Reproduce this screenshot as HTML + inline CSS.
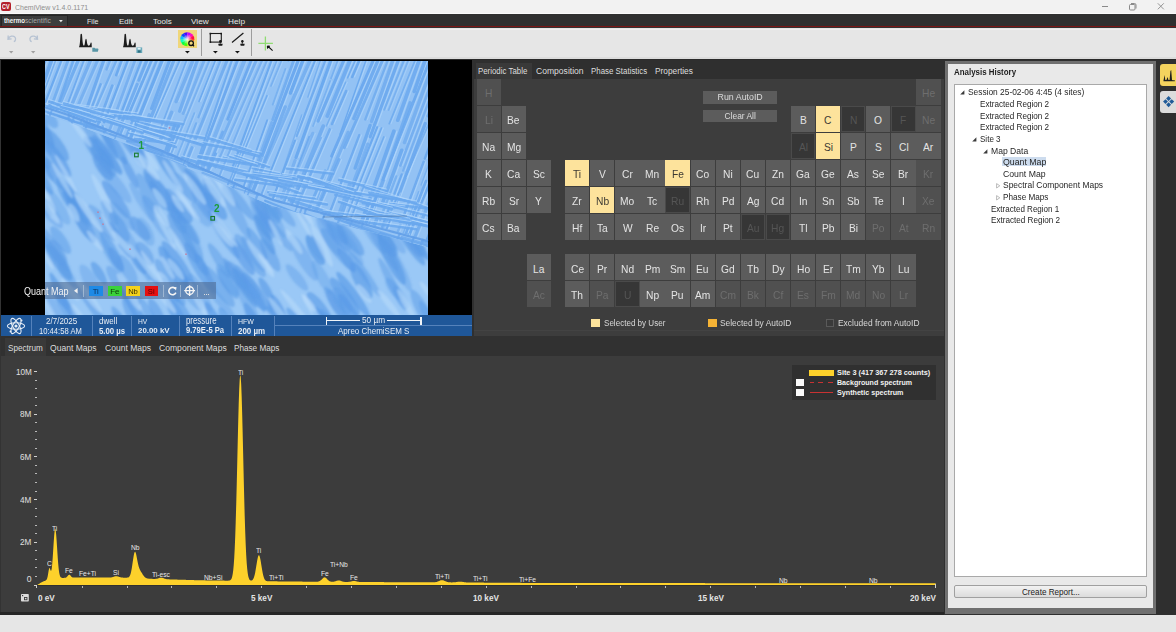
<!DOCTYPE html><html><head><meta charset="utf-8"><title>ChemiView</title><style>
*{margin:0;padding:0;box-sizing:border-box}
html,body{width:1176px;height:632px;overflow:hidden;background:#333;font-family:"Liberation Sans",sans-serif}
.ab{position:absolute}
.t{position:absolute;white-space:nowrap;line-height:1}
svg{position:absolute;overflow:visible}
</style></head><body>
<div class="ab" style="left:0px;top:0px;width:1176px;height:14px;background:#f2f2f2;"></div>
<div class="ab" style="left:0px;top:13.2px;width:1176px;height:0.8px;background:#fafafa;"></div>
<div class="ab" style="left:1.1px;top:1.9px;width:9.8px;height:9.5px;background:#b3202c;border-radius:2px"></div>
<div class="t" style="left:2.3px;top:4px;font-size:6.857px;color:#fff;font-weight:700;transform:scaleX(0.7869);transform-origin:0 0;">CV</div>
<div class="t" style="left:14.7px;top:3.78px;font-size:7.586px;color:#8e8e8e;transform:scaleX(0.9229);transform-origin:0 0;">ChemiView v1.4.0.1171</div>
<div class="ab" style="left:1102px;top:6px;width:6px;height:1px;background:#8a8a8a;"></div>
<svg style="left:1128px;top:2px" width="10" height="9"><rect x="1.5" y="2.5" width="5.5" height="5.5" rx="1" fill="none" stroke="#8a8a8a" stroke-width="1"/><path d="M3 1.5h3.5a1.5 1.5 0 0 1 1.5 1.5v3.5" fill="none" stroke="#8a8a8a" stroke-width="1"/></svg>
<svg style="left:1157px;top:3px" width="8" height="7"><path d="M0.8 0.3L6.8 6.3M6.8 0.3L0.8 6.3" stroke="#8a8a8a" stroke-width="0.9"/></svg>
<div class="ab" style="left:0px;top:14px;width:1176px;height:11.8px;background:#2f3030;"></div>
<div class="ab" style="left:0px;top:25.8px;width:1176px;height:1.7px;background:#7a1616;"></div>
<div class="ab" style="left:1.1px;top:15.1px;width:66.5px;height:10.7px;background:#3c3d3d;border:1px solid #262626;border-bottom:none"></div>
<div class="t" style="left:3.9px;top:17.34px;font-size:7.862px;color:#f4f4f4;font-weight:700;transform:scaleX(0.7879);transform-origin:0 0;">thermo</div>
<div class="t" style="left:25.2px;top:17.34px;font-size:7.862px;color:#a8a8a8;transform:scaleX(0.8557);transform-origin:0 0;">scientific</div>
<svg style="left:59px;top:19.5px" width="4" height="3"><path d="M0 0H3.8L1.9 2.2Z" fill="#eee"/></svg>
<div class="t" style="left:87.3px;top:17.58px;font-size:7.586px;color:#e6e6e6;transform:scaleX(0.9334);transform-origin:0 0;">File</div>
<div class="t" style="left:118.7px;top:17.58px;font-size:7.586px;color:#e6e6e6;transform:scaleX(1.0393);transform-origin:0 0;">Edit</div>
<div class="t" style="left:152.7px;top:17.58px;font-size:7.586px;color:#e6e6e6;transform:scaleX(1.0557);transform-origin:0 0;">Tools</div>
<div class="t" style="left:191px;top:17.58px;font-size:7.586px;color:#e6e6e6;transform:scaleX(1.0913);transform-origin:0 0;">View</div>
<div class="t" style="left:228px;top:17.58px;font-size:7.586px;color:#e6e6e6;transform:scaleX(1.0905);transform-origin:0 0;">Help</div>
<div class="ab" style="left:0px;top:27.5px;width:1176px;height:31.4px;background:#e6e6e6;"></div>
<div class="ab" style="left:0px;top:28.5px;width:1176px;height:1.5px;background:#eeeeee;"></div>
<div class="ab" style="left:0px;top:57.2px;width:1176px;height:1.7px;background:#dcdcdc;"></div>
<div class="ab" style="left:0px;top:58.9px;width:1176px;height:1.1px;background:#2a2a2a;"></div>
<svg style="left:6px;top:33px" width="12" height="10"><path d="M2.2 2.5 L2 6.2 L5.6 5.8 M2.3 5.8 C3.5 3 7.2 2.2 8.9 4.2 C10.3 6 9.3 8.2 7.8 8.7" fill="none" stroke="#b7c3d3" stroke-width="1.3"/></svg>
<svg style="left:28px;top:33px" width="12" height="10"><path d="M9.3 2.5 L9.5 6.2 L5.9 5.8 M9.2 5.8 C8 3 4.3 2.2 2.6 4.2 C1.2 6 2.2 8.2 3.7 8.7" fill="none" stroke="#b7c3d3" stroke-width="1.3"/></svg>
<svg style="left:8.8px;top:51px" width="5" height="3"><path d="M0 0H4.4L2.2 2.4Z" fill="#a0a0a0"/></svg>
<svg style="left:30.900000000000002px;top:51px" width="5" height="3"><path d="M0 0H4.4L2.2 2.4Z" fill="#a0a0a0"/></svg>
<svg style="left:79.2px;top:33px" width="14" height="15"><path d="M0 13.9 L0.3 13.2 C0.9 12 1.2 6 1.5 1.4 C1.8 0.5 2.8 0.5 3 1.4 C3.4 6 3.7 11.5 4.6 12.6 C5.2 12.9 5.5 12.3 5.8 10.5 C6.1 8 6.3 6.4 6.8 5.9 C7.3 5.6 7.6 6.3 7.8 8 C8.1 11 8.6 12.4 9.6 12.7 C10.6 12.7 11.2 11.5 11.6 9.9 C11.9 9.2 12.5 9.3 12.6 10 L12.8 14.2 L0 14.2Z" fill="#1c1c1c"/></svg>
<svg style="left:123.4px;top:33px" width="14" height="15"><path d="M0 13.9 L0.3 13.2 C0.9 12 1.2 6 1.5 1.4 C1.8 0.5 2.8 0.5 3 1.4 C3.4 6 3.7 11.5 4.6 12.6 C5.2 12.9 5.5 12.3 5.8 10.5 C6.1 8 6.3 6.4 6.8 5.9 C7.3 5.6 7.6 6.3 7.8 8 C8.1 11 8.6 12.4 9.6 12.7 C10.6 12.7 11.2 11.5 11.6 9.9 C11.9 9.2 12.5 9.3 12.6 10 L12.8 14.2 L0 14.2Z" fill="#1c1c1c"/></svg>
<svg style="left:91.5px;top:47px" width="7" height="6"><path d="M0.3 0.8 L2.6 0.8 L3.2 1.6 L5.6 1.6 C6.2 1.6 6.6 2.2 6.4 2.8 L5.8 4.8 L0.3 4.8Z" fill="#5896a6"/></svg>
<svg style="left:136px;top:47px" width="7" height="6.5"><rect x="0.4" y="0.4" width="5.8" height="5.6" fill="#6aaabb"/><rect x="1.6" y="0.8" width="3" height="1.8" fill="#e0f0f4"/><rect x="1.8" y="3.4" width="2.8" height="2.2" fill="#2f6f80"/></svg>
<div class="ab" style="left:178px;top:29.9px;width:18.7px;height:17.7px;background:#efd67a;"></div>
<svg style="left:180px;top:31.5px" width="15" height="15"><defs><clipPath id="cw"><circle cx="7.3" cy="7.3" r="7"/></clipPath><radialGradient id="wg"><stop offset="0" stop-color="#fff" stop-opacity="0.9"/><stop offset="1" stop-color="#fff" stop-opacity="0"/></radialGradient></defs><g clip-path="url(#cw)"><path d="M7.3 7.3 L16.30 7.30 L15.01 11.94Z" fill="hsl(15,100%,52%)"/><path d="M7.3 7.3 L15.09 11.80 L11.66 15.17Z" fill="hsl(45,100%,52%)"/><path d="M7.3 7.3 L11.80 15.09 L7.14 16.30Z" fill="hsl(75,100%,52%)"/><path d="M7.3 7.3 L7.30 16.30 L2.66 15.01Z" fill="hsl(105,100%,52%)"/><path d="M7.3 7.3 L2.80 15.09 L-0.57 11.66Z" fill="hsl(135,100%,52%)"/><path d="M7.3 7.3 L-0.49 11.80 L-1.70 7.14Z" fill="hsl(165,100%,52%)"/><path d="M7.3 7.3 L-1.70 7.30 L-0.41 2.66Z" fill="hsl(195,100%,52%)"/><path d="M7.3 7.3 L-0.49 2.80 L2.94 -0.57Z" fill="hsl(225,100%,52%)"/><path d="M7.3 7.3 L2.80 -0.49 L7.46 -1.70Z" fill="hsl(255,100%,52%)"/><path d="M7.3 7.3 L7.30 -1.70 L11.94 -0.41Z" fill="hsl(285,100%,52%)"/><path d="M7.3 7.3 L11.80 -0.49 L15.17 2.94Z" fill="hsl(315,100%,52%)"/><path d="M7.3 7.3 L15.09 2.80 L16.30 7.46Z" fill="hsl(345,100%,52%)"/><circle cx="7.3" cy="7.3" r="5" fill="url(#wg)"/></g><circle cx="11.1" cy="11.1" r="3.2" fill="#f0d67a"/><circle cx="11.1" cy="11.2" r="2.3" fill="none" stroke="#111" stroke-width="1.3"/><path d="M12.2 12.4 L14 14.2" stroke="#111" stroke-width="1.3"/></svg>
<svg style="left:185.29999999999998px;top:51.4px" width="5" height="3"><path d="M0 0H4.8L2.4 2.4Z" fill="#151515"/></svg>
<svg style="left:213.4px;top:51.4px" width="5" height="3"><path d="M0 0H4.8L2.4 2.4Z" fill="#151515"/></svg>
<svg style="left:235.2px;top:51.4px" width="5" height="3"><path d="M0 0H4.8L2.4 2.4Z" fill="#151515"/></svg>
<div class="ab" style="left:200.9px;top:29.4px;width:1.2px;height:26.6px;background:#9d9d9d;"></div>
<div class="ab" style="left:250.9px;top:29.4px;width:1.2px;height:26.6px;background:#9d9d9d;"></div>
<svg style="left:209px;top:32px" width="15" height="15"><rect x="1.3" y="1.5" width="11" height="8.6" fill="none" stroke="#1a1a1a" stroke-width="1.1"/><rect x="0.6" y="0.8" width="1.6" height="1.6" fill="#1a1a1a"/><rect x="11.4" y="0.8" width="1.6" height="1.6" fill="#1a1a1a"/><rect x="0.6" y="9.3" width="1.6" height="1.6" fill="#1a1a1a"/><path d="M11.2 8.6 V11.5 M9.3 12.2 H13.6 M9.6 13.2 H13.3" stroke="#1a1a1a" stroke-width="1.1"/><circle cx="11.4" cy="9.3" r="1.2" fill="#1a1a1a"/></svg>
<svg style="left:231px;top:32px" width="15" height="15"><path d="M1 10.5 L12.4 1" stroke="#1a1a1a" stroke-width="1.2"/><path d="M11.3 8.6 V11.5 M9.3 12.2 H13.6 M9.6 13.2 H13.3" stroke="#1a1a1a" stroke-width="1.1"/><circle cx="11.4" cy="9.3" r="1.2" fill="#1a1a1a"/></svg>
<svg style="left:257px;top:35px" width="17" height="17"><path d="M1.4 8.4 H15.9 M8.4 1.4 V15.5" stroke="#8fdc72" stroke-width="1.3"/><path d="M10.6 11 L15.6 15.6 M10.4 11 L13 11.2 M10.4 11 L10.6 13.6" stroke="#111" stroke-width="1.1"/></svg>
<div class="ab" style="left:0px;top:60px;width:1176px;height:554.5px;background:#333333;"></div>
<div class="ab" style="left:1.3px;top:60px;width:470.7px;height:255.5px;background:#000;"></div>
<svg style="left:45px;top:60.8px" width="383" height="255" viewBox="0 0 383 255"><defs><filter id="bl1" x="-20%" y="-20%" width="140%" height="140%"><feGaussianBlur stdDeviation="1.2"/></filter><filter id="bl2" x="-20%" y="-20%" width="140%" height="140%"><feGaussianBlur stdDeviation="0.7"/></filter><filter id="bl3" x="-30%" y="-30%" width="160%" height="160%"><feGaussianBlur stdDeviation="1.1"/></filter><clipPath id="zA"><path d="M0 0 H383 V179.2 L383.0 179.2 L378.0 177.9 L372.0 176.3 L366.0 174.7 L360.0 173.1 L354.0 171.5 L348.0 169.9 L342.0 168.3 L336.0 166.7 L330.0 165.1 L324.0 163.5 L318.0 162.0 L312.0 160.4 L306.0 158.8 L300.0 157.2 L294.0 155.6 L288.0 154.0 L282.0 152.4 L276.0 150.8 L270.0 149.2 L264.0 147.6 L258.0 146.0 L252.0 144.4 L246.0 142.8 L240.0 141.2 L234.0 139.6 L228.0 138.0 L222.0 135.8 L216.0 133.1 L210.0 130.4 L204.0 127.7 L198.0 125.0 L192.0 122.3 L186.0 119.6 L180.0 116.9 L174.0 114.2 L168.0 111.5 L162.0 108.8 L156.0 106.1 L150.0 103.4 L144.0 100.7 L138.0 98.0 L132.0 95.3 L126.0 92.6 L120.0 90.1 L114.0 87.8 L108.0 85.5 L102.0 83.2 L96.0 80.9 L90.0 78.6 L84.0 76.3 L78.0 74.0 L72.0 71.7 L66.0 69.4 L60.0 67.1 L54.0 64.8 L48.0 62.5 L42.0 60.2 L36.0 57.9 L30.0 55.6 L24.0 53.3 L18.0 51.2 L12.0 49.2 L6.0 47.2 L0.0 45.2 Z"/></clipPath><clipPath id="zB"><path d="M0 45.2 L0.0 45.2 L6.0 47.2 L12.0 49.2 L18.0 51.2 L24.0 53.3 L30.0 55.6 L36.0 57.9 L42.0 60.2 L48.0 62.5 L54.0 64.8 L60.0 67.1 L66.0 69.4 L72.0 71.7 L78.0 74.0 L84.0 76.3 L90.0 78.6 L96.0 80.9 L102.0 83.2 L108.0 85.5 L114.0 87.8 L120.0 90.1 L126.0 92.6 L132.0 95.3 L138.0 98.0 L144.0 100.7 L150.0 103.4 L156.0 106.1 L162.0 108.8 L168.0 111.5 L174.0 114.2 L180.0 116.9 L186.0 119.6 L192.0 122.3 L198.0 125.0 L204.0 127.7 L210.0 130.4 L216.0 133.1 L222.0 135.8 L228.0 138.0 L234.0 139.6 L240.0 141.2 L246.0 142.8 L252.0 144.4 L258.0 146.0 L264.0 147.6 L270.0 149.2 L276.0 150.8 L282.0 152.4 L288.0 154.0 L294.0 155.6 L300.0 157.2 L306.0 158.8 L312.0 160.4 L318.0 162.0 L324.0 163.5 L330.0 165.1 L336.0 166.7 L342.0 168.3 L348.0 169.9 L354.0 171.5 L360.0 173.1 L366.0 174.7 L372.0 176.3 L378.0 177.9 L383.0 179.2 V186.2 L383.0 186.2 L378.0 184.9 L372.0 183.3 L366.0 181.7 L360.0 180.1 L354.0 178.5 L348.0 176.9 L342.0 175.3 L336.0 173.7 L330.0 172.1 L324.0 170.5 L318.0 169.0 L312.0 167.4 L306.0 165.8 L300.0 164.2 L294.0 162.6 L288.0 161.0 L282.0 159.4 L276.0 157.8 L270.0 156.2 L264.0 154.6 L258.0 153.0 L252.0 151.4 L246.0 149.8 L240.0 148.2 L234.0 146.6 L228.0 145.0 L222.0 142.8 L216.0 140.1 L210.0 137.4 L204.0 134.7 L198.0 132.0 L192.0 129.3 L186.0 126.6 L180.0 123.9 L174.0 121.2 L168.0 118.5 L162.0 115.8 L156.0 113.1 L150.0 110.4 L144.0 107.7 L138.0 105.0 L132.0 102.3 L126.0 99.6 L120.0 97.1 L114.0 94.8 L108.0 92.6 L102.0 90.4 L96.0 88.1 L90.0 85.9 L84.0 83.7 L78.0 81.4 L72.0 79.2 L66.0 77.0 L60.0 74.7 L54.0 72.5 L48.0 70.3 L42.0 68.0 L36.0 65.8 L30.0 63.6 L24.0 61.3 L18.0 59.2 L12.0 57.2 L6.0 55.2 L0.0 53.2 Z"/></clipPath><clipPath id="zC"><path d="M0 53.2 L0.0 53.2 L6.0 55.2 L12.0 57.2 L18.0 59.2 L24.0 61.3 L30.0 63.6 L36.0 65.8 L42.0 68.0 L48.0 70.3 L54.0 72.5 L60.0 74.7 L66.0 77.0 L72.0 79.2 L78.0 81.4 L84.0 83.7 L90.0 85.9 L96.0 88.1 L102.0 90.4 L108.0 92.6 L114.0 94.8 L120.0 97.1 L126.0 99.6 L132.0 102.3 L138.0 105.0 L144.0 107.7 L150.0 110.4 L156.0 113.1 L162.0 115.8 L168.0 118.5 L174.0 121.2 L180.0 123.9 L186.0 126.6 L192.0 129.3 L198.0 132.0 L204.0 134.7 L210.0 137.4 L216.0 140.1 L222.0 142.8 L228.0 145.0 L234.0 146.6 L240.0 148.2 L246.0 149.8 L252.0 151.4 L258.0 153.0 L264.0 154.6 L270.0 156.2 L276.0 157.8 L282.0 159.4 L288.0 161.0 L294.0 162.6 L300.0 164.2 L306.0 165.8 L312.0 167.4 L318.0 169.0 L324.0 170.5 L330.0 172.1 L336.0 173.7 L342.0 175.3 L348.0 176.9 L354.0 178.5 L360.0 180.1 L366.0 181.7 L372.0 183.3 L378.0 184.9 L383.0 186.2 V255 H0 Z"/></clipPath></defs><rect width="383" height="255" fill="#93c2f4"/><g clip-path="url(#zC)"><rect width="383" height="255" fill="#9ac8f6"/><g filter="url(#bl3)"><ellipse cx="178.6" cy="173.5" rx="28.6" ry="5.2" transform="rotate(57 178.6 173.5)" fill="#5a9be7" opacity="0.56"/><ellipse cx="58.1" cy="162.1" rx="23.3" ry="6.2" transform="rotate(51 58.1 162.1)" fill="#5a9be7" opacity="0.46"/><ellipse cx="15.8" cy="233.5" rx="24.5" ry="3.9" transform="rotate(64 15.8 233.5)" fill="#5a9be7" opacity="0.69"/><ellipse cx="269.3" cy="186.9" rx="14.8" ry="3.8" transform="rotate(57 269.3 186.9)" fill="#5a9be7" opacity="0.37"/><ellipse cx="60.6" cy="97.3" rx="12.5" ry="5.2" transform="rotate(56 60.6 97.3)" fill="#5a9be7" opacity="0.64"/><ellipse cx="208.6" cy="192.9" rx="21.0" ry="5.8" transform="rotate(56 208.6 192.9)" fill="#5a9be7" opacity="0.45"/><ellipse cx="423.9" cy="278.2" rx="27.1" ry="5.9" transform="rotate(54 423.9 278.2)" fill="#5a9be7" opacity="0.43"/><ellipse cx="406.1" cy="242.6" rx="12.0" ry="4.4" transform="rotate(63 406.1 242.6)" fill="#5a9be7" opacity="0.51"/><ellipse cx="7.9" cy="190.3" rx="26.0" ry="4.6" transform="rotate(51 7.9 190.3)" fill="#5a9be7" opacity="0.47"/><ellipse cx="408.8" cy="221.1" rx="14.1" ry="4.5" transform="rotate(51 408.8 221.1)" fill="#5a9be7" opacity="0.37"/><ellipse cx="226.7" cy="146.6" rx="15.4" ry="6.0" transform="rotate(52 226.7 146.6)" fill="#5a9be7" opacity="0.58"/><ellipse cx="27.4" cy="140.2" rx="15.8" ry="4.6" transform="rotate(64 27.4 140.2)" fill="#5a9be7" opacity="0.63"/><ellipse cx="111.9" cy="251.6" rx="15.8" ry="5.0" transform="rotate(62 111.9 251.6)" fill="#5a9be7" opacity="0.57"/><ellipse cx="20.1" cy="276.6" rx="15.8" ry="4.6" transform="rotate(61 20.1 276.6)" fill="#5a9be7" opacity="0.47"/><ellipse cx="15.6" cy="179.1" rx="16.4" ry="5.6" transform="rotate(55 15.6 179.1)" fill="#5a9be7" opacity="0.51"/><ellipse cx="233.6" cy="247.2" rx="15.3" ry="4.3" transform="rotate(63 233.6 247.2)" fill="#5a9be7" opacity="0.64"/><ellipse cx="87.3" cy="84.8" rx="25.3" ry="6.6" transform="rotate(53 87.3 84.8)" fill="#5a9be7" opacity="0.68"/><ellipse cx="372.0" cy="184.0" rx="19.6" ry="4.1" transform="rotate(51 372.0 184.0)" fill="#5a9be7" opacity="0.69"/><ellipse cx="82.3" cy="208.3" rx="16.6" ry="6.3" transform="rotate(58 82.3 208.3)" fill="#5a9be7" opacity="0.45"/><ellipse cx="53.9" cy="212.1" rx="13.2" ry="4.5" transform="rotate(58 53.9 212.1)" fill="#5a9be7" opacity="0.65"/><ellipse cx="-17.5" cy="103.8" rx="20.0" ry="4.0" transform="rotate(52 -17.5 103.8)" fill="#5a9be7" opacity="0.48"/><ellipse cx="138.0" cy="253.0" rx="29.6" ry="5.8" transform="rotate(60 138.0 253.0)" fill="#5a9be7" opacity="0.55"/><ellipse cx="-16.9" cy="257.7" rx="24.6" ry="6.7" transform="rotate(50 -16.9 257.7)" fill="#5a9be7" opacity="0.57"/><ellipse cx="192.0" cy="214.5" rx="17.7" ry="6.8" transform="rotate(51 192.0 214.5)" fill="#5a9be7" opacity="0.54"/><ellipse cx="306.7" cy="255.2" rx="25.3" ry="5.9" transform="rotate(61 306.7 255.2)" fill="#5a9be7" opacity="0.67"/><ellipse cx="133.3" cy="203.6" rx="28.2" ry="6.4" transform="rotate(56 133.3 203.6)" fill="#5a9be7" opacity="0.63"/><ellipse cx="363.6" cy="176.7" rx="23.2" ry="4.9" transform="rotate(58 363.6 176.7)" fill="#5a9be7" opacity="0.56"/><ellipse cx="11.1" cy="192.7" rx="29.9" ry="6.4" transform="rotate(60 11.1 192.7)" fill="#5a9be7" opacity="0.49"/><ellipse cx="305.8" cy="178.6" rx="19.9" ry="6.3" transform="rotate(51 305.8 178.6)" fill="#5a9be7" opacity="0.61"/><ellipse cx="-11.6" cy="183.5" rx="20.7" ry="4.5" transform="rotate(60 -11.6 183.5)" fill="#5a9be7" opacity="0.52"/><ellipse cx="251.5" cy="260.1" rx="16.6" ry="3.8" transform="rotate(54 251.5 260.1)" fill="#5a9be7" opacity="0.59"/><ellipse cx="66.2" cy="79.9" rx="28.3" ry="5.8" transform="rotate(56 66.2 79.9)" fill="#5a9be7" opacity="0.66"/><ellipse cx="122.1" cy="199.0" rx="15.6" ry="5.1" transform="rotate(61 122.1 199.0)" fill="#5a9be7" opacity="0.67"/><ellipse cx="36.3" cy="158.4" rx="27.1" ry="6.3" transform="rotate(60 36.3 158.4)" fill="#5a9be7" opacity="0.68"/><ellipse cx="71.3" cy="138.6" rx="23.3" ry="5.3" transform="rotate(54 71.3 138.6)" fill="#5a9be7" opacity="0.64"/><ellipse cx="293.9" cy="176.1" rx="17.6" ry="6.2" transform="rotate(50 293.9 176.1)" fill="#5a9be7" opacity="0.40"/><ellipse cx="258.5" cy="196.4" rx="26.5" ry="6.7" transform="rotate(60 258.5 196.4)" fill="#5a9be7" opacity="0.42"/><ellipse cx="-20.2" cy="152.5" rx="24.9" ry="4.3" transform="rotate(54 -20.2 152.5)" fill="#5a9be7" opacity="0.47"/><ellipse cx="288.8" cy="164.1" rx="23.1" ry="6.1" transform="rotate(56 288.8 164.1)" fill="#5a9be7" opacity="0.63"/><ellipse cx="394.7" cy="212.6" rx="14.3" ry="5.2" transform="rotate(59 394.7 212.6)" fill="#5a9be7" opacity="0.67"/><ellipse cx="144.6" cy="175.7" rx="27.8" ry="6.2" transform="rotate(63 144.6 175.7)" fill="#5a9be7" opacity="0.51"/><ellipse cx="299.9" cy="235.6" rx="23.5" ry="6.0" transform="rotate(53 299.9 235.6)" fill="#5a9be7" opacity="0.66"/><ellipse cx="416.2" cy="273.8" rx="21.7" ry="6.2" transform="rotate(54 416.2 273.8)" fill="#5a9be7" opacity="0.67"/><ellipse cx="12.2" cy="145.0" rx="21.9" ry="6.1" transform="rotate(57 12.2 145.0)" fill="#5a9be7" opacity="0.36"/><ellipse cx="125.8" cy="228.3" rx="14.5" ry="4.2" transform="rotate(57 125.8 228.3)" fill="#5a9be7" opacity="0.60"/><ellipse cx="353.0" cy="204.6" rx="29.0" ry="5.3" transform="rotate(63 353.0 204.6)" fill="#5a9be7" opacity="0.38"/><ellipse cx="74.6" cy="165.6" rx="17.2" ry="6.0" transform="rotate(59 74.6 165.6)" fill="#5a9be7" opacity="0.53"/><ellipse cx="115.3" cy="130.7" rx="27.2" ry="6.5" transform="rotate(53 115.3 130.7)" fill="#5a9be7" opacity="0.65"/><ellipse cx="216.2" cy="160.0" rx="22.9" ry="3.9" transform="rotate(64 216.2 160.0)" fill="#5a9be7" opacity="0.53"/><ellipse cx="155.3" cy="231.5" rx="22.1" ry="5.3" transform="rotate(60 155.3 231.5)" fill="#5a9be7" opacity="0.37"/><ellipse cx="217.4" cy="138.5" rx="29.2" ry="6.6" transform="rotate(54 217.4 138.5)" fill="#5a9be7" opacity="0.52"/><ellipse cx="32.1" cy="143.3" rx="26.7" ry="6.5" transform="rotate(57 32.1 143.3)" fill="#5a9be7" opacity="0.46"/><ellipse cx="61.2" cy="187.5" rx="28.7" ry="4.2" transform="rotate(61 61.2 187.5)" fill="#5a9be7" opacity="0.36"/><ellipse cx="62.3" cy="93.7" rx="24.4" ry="4.8" transform="rotate(55 62.3 93.7)" fill="#5a9be7" opacity="0.57"/><ellipse cx="22.2" cy="214.6" rx="14.2" ry="5.3" transform="rotate(54 22.2 214.6)" fill="#5a9be7" opacity="0.42"/><ellipse cx="213.7" cy="144.0" rx="18.8" ry="5.0" transform="rotate(57 213.7 144.0)" fill="#5a9be7" opacity="0.41"/><ellipse cx="66.9" cy="190.7" rx="23.5" ry="5.4" transform="rotate(62 66.9 190.7)" fill="#5a9be7" opacity="0.56"/><ellipse cx="308.3" cy="233.7" rx="28.2" ry="4.7" transform="rotate(54 308.3 233.7)" fill="#5a9be7" opacity="0.67"/><ellipse cx="73.2" cy="278.8" rx="28.0" ry="4.2" transform="rotate(53 73.2 278.8)" fill="#5a9be7" opacity="0.60"/><ellipse cx="156.3" cy="203.7" rx="12.3" ry="4.4" transform="rotate(60 156.3 203.7)" fill="#5a9be7" opacity="0.67"/><ellipse cx="202.6" cy="221.2" rx="21.1" ry="5.9" transform="rotate(53 202.6 221.2)" fill="#5a9be7" opacity="0.37"/><ellipse cx="223.3" cy="162.8" rx="22.2" ry="4.2" transform="rotate(53 223.3 162.8)" fill="#5a9be7" opacity="0.42"/><ellipse cx="353.1" cy="276.9" rx="28.7" ry="4.1" transform="rotate(51 353.1 276.9)" fill="#5a9be7" opacity="0.68"/><ellipse cx="182.9" cy="222.7" rx="17.9" ry="5.2" transform="rotate(57 182.9 222.7)" fill="#5a9be7" opacity="0.50"/><ellipse cx="290.5" cy="241.8" rx="15.3" ry="5.2" transform="rotate(60 290.5 241.8)" fill="#5a9be7" opacity="0.49"/><ellipse cx="62.8" cy="78.8" rx="21.2" ry="3.8" transform="rotate(63 62.8 78.8)" fill="#5a9be7" opacity="0.63"/><ellipse cx="292.1" cy="245.8" rx="23.3" ry="5.0" transform="rotate(58 292.1 245.8)" fill="#5a9be7" opacity="0.53"/><ellipse cx="417.2" cy="232.4" rx="16.6" ry="6.5" transform="rotate(60 417.2 232.4)" fill="#5a9be7" opacity="0.62"/><ellipse cx="378.4" cy="250.4" rx="24.5" ry="6.1" transform="rotate(61 378.4 250.4)" fill="#5a9be7" opacity="0.49"/><ellipse cx="128.8" cy="151.7" rx="12.2" ry="4.9" transform="rotate(59 128.8 151.7)" fill="#5a9be7" opacity="0.57"/><ellipse cx="79.4" cy="265.9" rx="24.0" ry="4.8" transform="rotate(59 79.4 265.9)" fill="#5a9be7" opacity="0.55"/><ellipse cx="424.9" cy="193.3" rx="24.6" ry="6.1" transform="rotate(64 424.9 193.3)" fill="#5a9be7" opacity="0.36"/><ellipse cx="251.9" cy="216.5" rx="16.6" ry="5.0" transform="rotate(51 251.9 216.5)" fill="#5a9be7" opacity="0.42"/><ellipse cx="87.9" cy="256.6" rx="21.9" ry="5.3" transform="rotate(64 87.9 256.6)" fill="#5a9be7" opacity="0.55"/><ellipse cx="422.8" cy="192.3" rx="26.6" ry="4.0" transform="rotate(58 422.8 192.3)" fill="#5a9be7" opacity="0.62"/><ellipse cx="-4.7" cy="262.4" rx="14.9" ry="5.2" transform="rotate(52 -4.7 262.4)" fill="#5a9be7" opacity="0.52"/><ellipse cx="212.0" cy="182.7" rx="18.6" ry="4.7" transform="rotate(59 212.0 182.7)" fill="#5a9be7" opacity="0.55"/><ellipse cx="102.6" cy="211.2" rx="17.3" ry="3.8" transform="rotate(53 102.6 211.2)" fill="#5a9be7" opacity="0.36"/><ellipse cx="45.5" cy="220.3" rx="19.0" ry="6.5" transform="rotate(60 45.5 220.3)" fill="#5a9be7" opacity="0.37"/><ellipse cx="419.9" cy="265.9" rx="13.3" ry="6.5" transform="rotate(56 419.9 265.9)" fill="#5a9be7" opacity="0.52"/><ellipse cx="210.5" cy="264.1" rx="25.0" ry="5.2" transform="rotate(64 210.5 264.1)" fill="#5a9be7" opacity="0.64"/><ellipse cx="255.9" cy="148.6" rx="15.7" ry="4.0" transform="rotate(57 255.9 148.6)" fill="#5a9be7" opacity="0.39"/><ellipse cx="174.3" cy="199.5" rx="20.2" ry="4.6" transform="rotate(58 174.3 199.5)" fill="#5a9be7" opacity="0.50"/><ellipse cx="325.1" cy="166.6" rx="30.0" ry="6.7" transform="rotate(60 325.1 166.6)" fill="#5a9be7" opacity="0.43"/><ellipse cx="26.2" cy="253.4" rx="26.1" ry="5.7" transform="rotate(55 26.2 253.4)" fill="#5a9be7" opacity="0.45"/><ellipse cx="283.3" cy="174.8" rx="22.7" ry="5.7" transform="rotate(61 283.3 174.8)" fill="#5a9be7" opacity="0.42"/><ellipse cx="87.0" cy="274.3" rx="28.5" ry="6.4" transform="rotate(51 87.0 274.3)" fill="#5a9be7" opacity="0.37"/><ellipse cx="96.9" cy="141.2" rx="23.2" ry="4.1" transform="rotate(58 96.9 141.2)" fill="#5a9be7" opacity="0.38"/><ellipse cx="13.9" cy="201.5" rx="21.9" ry="5.7" transform="rotate(55 13.9 201.5)" fill="#5a9be7" opacity="0.52"/><ellipse cx="69.8" cy="121.7" rx="25.4" ry="6.3" transform="rotate(51 69.8 121.7)" fill="#5a9be7" opacity="0.39"/><ellipse cx="339.1" cy="188.9" rx="25.8" ry="4.4" transform="rotate(56 339.1 188.9)" fill="#5a9be7" opacity="0.44"/><ellipse cx="269.1" cy="276.6" rx="17.9" ry="5.4" transform="rotate(60 269.1 276.6)" fill="#5a9be7" opacity="0.67"/><ellipse cx="167.4" cy="127.8" rx="13.7" ry="6.4" transform="rotate(51 167.4 127.8)" fill="#5a9be7" opacity="0.38"/><ellipse cx="228.9" cy="155.6" rx="24.3" ry="4.7" transform="rotate(61 228.9 155.6)" fill="#5a9be7" opacity="0.38"/><ellipse cx="71.0" cy="198.1" rx="13.5" ry="4.7" transform="rotate(60 71.0 198.1)" fill="#5a9be7" opacity="0.59"/><ellipse cx="136.0" cy="213.4" rx="18.6" ry="4.2" transform="rotate(60 136.0 213.4)" fill="#5a9be7" opacity="0.55"/><ellipse cx="388.4" cy="264.8" rx="28.4" ry="5.1" transform="rotate(61 388.4 264.8)" fill="#5a9be7" opacity="0.46"/><ellipse cx="117.9" cy="135.1" rx="28.8" ry="6.5" transform="rotate(53 117.9 135.1)" fill="#5a9be7" opacity="0.48"/><ellipse cx="139.5" cy="126.4" rx="19.1" ry="5.0" transform="rotate(53 139.5 126.4)" fill="#5a9be7" opacity="0.55"/><ellipse cx="333.7" cy="168.9" rx="27.1" ry="5.5" transform="rotate(52 333.7 168.9)" fill="#5a9be7" opacity="0.62"/><ellipse cx="-15.0" cy="163.0" rx="21.8" ry="5.5" transform="rotate(64 -15.0 163.0)" fill="#5a9be7" opacity="0.58"/><ellipse cx="221.1" cy="228.3" rx="13.5" ry="4.0" transform="rotate(60 221.1 228.3)" fill="#5a9be7" opacity="0.66"/><ellipse cx="13.1" cy="191.4" rx="14.6" ry="6.0" transform="rotate(59 13.1 191.4)" fill="#5a9be7" opacity="0.44"/><ellipse cx="74.2" cy="222.9" rx="21.4" ry="6.1" transform="rotate(56 74.2 222.9)" fill="#5a9be7" opacity="0.47"/><ellipse cx="410.7" cy="200.6" rx="20.9" ry="5.4" transform="rotate(60 410.7 200.6)" fill="#5a9be7" opacity="0.60"/><ellipse cx="346.8" cy="199.2" rx="27.4" ry="6.2" transform="rotate(62 346.8 199.2)" fill="#5a9be7" opacity="0.66"/><ellipse cx="406.0" cy="192.9" rx="21.4" ry="5.9" transform="rotate(61 406.0 192.9)" fill="#5a9be7" opacity="0.50"/><ellipse cx="308.6" cy="277.0" rx="18.8" ry="4.3" transform="rotate(53 308.6 277.0)" fill="#5a9be7" opacity="0.50"/><ellipse cx="106.4" cy="271.9" rx="13.1" ry="4.7" transform="rotate(52 106.4 271.9)" fill="#5a9be7" opacity="0.58"/><ellipse cx="3.1" cy="149.3" rx="22.5" ry="6.5" transform="rotate(51 3.1 149.3)" fill="#5a9be7" opacity="0.39"/><ellipse cx="58.0" cy="91.4" rx="16.2" ry="6.0" transform="rotate(58 58.0 91.4)" fill="#5a9be7" opacity="0.43"/><ellipse cx="58.2" cy="106.7" rx="15.1" ry="6.1" transform="rotate(54 58.2 106.7)" fill="#5a9be7" opacity="0.54"/><ellipse cx="92.2" cy="252.2" rx="28.5" ry="4.8" transform="rotate(58 92.2 252.2)" fill="#5a9be7" opacity="0.68"/><ellipse cx="-2.6" cy="266.6" rx="26.4" ry="5.0" transform="rotate(57 -2.6 266.6)" fill="#5a9be7" opacity="0.53"/><ellipse cx="98.5" cy="276.9" rx="23.8" ry="4.5" transform="rotate(50 98.5 276.9)" fill="#5a9be7" opacity="0.52"/><ellipse cx="142.2" cy="230.4" rx="24.8" ry="5.6" transform="rotate(52 142.2 230.4)" fill="#5a9be7" opacity="0.40"/><ellipse cx="119.8" cy="101.5" rx="27.6" ry="5.3" transform="rotate(59 119.8 101.5)" fill="#5a9be7" opacity="0.70"/><ellipse cx="94.9" cy="167.5" rx="14.7" ry="6.1" transform="rotate(50 94.9 167.5)" fill="#5a9be7" opacity="0.64"/><ellipse cx="355.8" cy="236.5" rx="13.5" ry="4.6" transform="rotate(60 355.8 236.5)" fill="#5a9be7" opacity="0.38"/><ellipse cx="191.0" cy="151.7" rx="29.2" ry="5.6" transform="rotate(62 191.0 151.7)" fill="#5a9be7" opacity="0.46"/><ellipse cx="219.5" cy="165.4" rx="14.8" ry="6.3" transform="rotate(54 219.5 165.4)" fill="#5a9be7" opacity="0.46"/><ellipse cx="9.2" cy="112.6" rx="20.4" ry="5.9" transform="rotate(55 9.2 112.6)" fill="#5a9be7" opacity="0.59"/><ellipse cx="22.6" cy="133.8" rx="20.3" ry="6.7" transform="rotate(62 22.6 133.8)" fill="#5a9be7" opacity="0.58"/><ellipse cx="-19.4" cy="129.7" rx="24.8" ry="4.5" transform="rotate(58 -19.4 129.7)" fill="#5a9be7" opacity="0.51"/><ellipse cx="-20.3" cy="277.2" rx="26.4" ry="4.4" transform="rotate(59 -20.3 277.2)" fill="#5a9be7" opacity="0.45"/><ellipse cx="144.2" cy="168.7" rx="17.4" ry="4.8" transform="rotate(55 144.2 168.7)" fill="#5a9be7" opacity="0.58"/><ellipse cx="90.4" cy="87.2" rx="25.2" ry="4.8" transform="rotate(63 90.4 87.2)" fill="#5a9be7" opacity="0.55"/><ellipse cx="38.4" cy="61.9" rx="24.2" ry="5.9" transform="rotate(53 38.4 61.9)" fill="#5a9be7" opacity="0.49"/><ellipse cx="351.6" cy="181.5" rx="13.6" ry="4.5" transform="rotate(52 351.6 181.5)" fill="#5a9be7" opacity="0.39"/><ellipse cx="205.2" cy="194.5" rx="25.8" ry="6.3" transform="rotate(55 205.2 194.5)" fill="#5a9be7" opacity="0.47"/><ellipse cx="155.3" cy="207.2" rx="29.7" ry="6.2" transform="rotate(59 155.3 207.2)" fill="#5a9be7" opacity="0.56"/><ellipse cx="-16.7" cy="118.6" rx="18.2" ry="5.8" transform="rotate(51 -16.7 118.6)" fill="#5a9be7" opacity="0.48"/><ellipse cx="204.2" cy="228.5" rx="26.9" ry="5.6" transform="rotate(52 204.2 228.5)" fill="#5a9be7" opacity="0.62"/><ellipse cx="133.7" cy="159.3" rx="14.6" ry="5.9" transform="rotate(64 133.7 159.3)" fill="#5a9be7" opacity="0.53"/><ellipse cx="296.9" cy="239.7" rx="15.5" ry="6.6" transform="rotate(59 296.9 239.7)" fill="#5a9be7" opacity="0.42"/><ellipse cx="12.5" cy="97.9" rx="22.4" ry="5.9" transform="rotate(55 12.5 97.9)" fill="#5a9be7" opacity="0.68"/><ellipse cx="137.5" cy="150.3" rx="14.2" ry="6.7" transform="rotate(52 137.5 150.3)" fill="#5a9be7" opacity="0.67"/><ellipse cx="219.5" cy="173.8" rx="22.1" ry="4.6" transform="rotate(63 219.5 173.8)" fill="#5a9be7" opacity="0.70"/><ellipse cx="342.9" cy="183.6" rx="14.2" ry="6.3" transform="rotate(54 342.9 183.6)" fill="#5a9be7" opacity="0.66"/><ellipse cx="83.4" cy="176.9" rx="27.0" ry="4.4" transform="rotate(58 83.4 176.9)" fill="#5a9be7" opacity="0.38"/><ellipse cx="-10.6" cy="82.4" rx="29.8" ry="6.6" transform="rotate(59 -10.6 82.4)" fill="#5a9be7" opacity="0.46"/><ellipse cx="277.1" cy="216.2" rx="18.9" ry="5.6" transform="rotate(61 277.1 216.2)" fill="#5a9be7" opacity="0.36"/><ellipse cx="64.8" cy="151.5" rx="14.6" ry="5.0" transform="rotate(58 64.8 151.5)" fill="#5a9be7" opacity="0.41"/><ellipse cx="406.7" cy="183.2" rx="20.5" ry="5.0" transform="rotate(59 406.7 183.2)" fill="#5a9be7" opacity="0.59"/><ellipse cx="316.1" cy="219.6" rx="20.7" ry="6.8" transform="rotate(62 316.1 219.6)" fill="#5a9be7" opacity="0.65"/><ellipse cx="159.1" cy="143.3" rx="22.2" ry="6.5" transform="rotate(57 159.1 143.3)" fill="#5a9be7" opacity="0.53"/><ellipse cx="169.5" cy="256.2" rx="17.8" ry="4.0" transform="rotate(60 169.5 256.2)" fill="#5a9be7" opacity="0.67"/><ellipse cx="304.4" cy="182.6" rx="25.5" ry="4.7" transform="rotate(58 304.4 182.6)" fill="#5a9be7" opacity="0.37"/><ellipse cx="31.0" cy="146.5" rx="21.0" ry="5.0" transform="rotate(51 31.0 146.5)" fill="#5a9be7" opacity="0.59"/><ellipse cx="112.8" cy="134.1" rx="16.2" ry="4.0" transform="rotate(63 112.8 134.1)" fill="#5a9be7" opacity="0.69"/><ellipse cx="274.6" cy="247.2" rx="19.6" ry="6.2" transform="rotate(53 274.6 247.2)" fill="#5a9be7" opacity="0.61"/><ellipse cx="230.1" cy="256.0" rx="13.8" ry="6.2" transform="rotate(52 230.1 256.0)" fill="#5a9be7" opacity="0.54"/><ellipse cx="84.8" cy="111.0" rx="17.8" ry="4.0" transform="rotate(63 84.8 111.0)" fill="#5a9be7" opacity="0.64"/><ellipse cx="153.8" cy="124.8" rx="22.5" ry="3.9" transform="rotate(50 153.8 124.8)" fill="#5a9be7" opacity="0.66"/><ellipse cx="113.5" cy="158.8" rx="28.8" ry="6.7" transform="rotate(57 113.5 158.8)" fill="#5a9be7" opacity="0.42"/><ellipse cx="107.9" cy="260.6" rx="28.1" ry="4.4" transform="rotate(62 107.9 260.6)" fill="#5a9be7" opacity="0.47"/><ellipse cx="370.9" cy="278.1" rx="15.6" ry="5.7" transform="rotate(53 370.9 278.1)" fill="#5a9be7" opacity="0.66"/><ellipse cx="-2.5" cy="64.7" rx="25.1" ry="4.7" transform="rotate(63 -2.5 64.7)" fill="#5a9be7" opacity="0.65"/><ellipse cx="288.2" cy="264.3" rx="20.0" ry="4.0" transform="rotate(53 288.2 264.3)" fill="#5a9be7" opacity="0.46"/><ellipse cx="56.5" cy="95.7" rx="24.0" ry="6.2" transform="rotate(55 56.5 95.7)" fill="#5a9be7" opacity="0.58"/><ellipse cx="373.0" cy="180.8" rx="16.1" ry="4.7" transform="rotate(63 373.0 180.8)" fill="#5a9be7" opacity="0.58"/><ellipse cx="99.6" cy="192.8" rx="13.6" ry="6.7" transform="rotate(56 99.6 192.8)" fill="#5a9be7" opacity="0.53"/><ellipse cx="87.9" cy="232.0" rx="13.6" ry="4.7" transform="rotate(61 87.9 232.0)" fill="#5a9be7" opacity="0.44"/><ellipse cx="100.6" cy="170.7" rx="15.4" ry="6.5" transform="rotate(64 100.6 170.7)" fill="#5a9be7" opacity="0.36"/><ellipse cx="182.7" cy="219.3" rx="18.9" ry="6.6" transform="rotate(57 182.7 219.3)" fill="#5a9be7" opacity="0.41"/><ellipse cx="225.2" cy="194.0" rx="18.5" ry="5.8" transform="rotate(61 225.2 194.0)" fill="#5a9be7" opacity="0.53"/><ellipse cx="202.5" cy="242.1" rx="24.3" ry="5.4" transform="rotate(63 202.5 242.1)" fill="#5a9be7" opacity="0.41"/><ellipse cx="173.2" cy="224.7" rx="26.2" ry="6.2" transform="rotate(53 173.2 224.7)" fill="#5a9be7" opacity="0.52"/><ellipse cx="74.6" cy="178.4" rx="21.0" ry="3.9" transform="rotate(58 74.6 178.4)" fill="#5a9be7" opacity="0.60"/><ellipse cx="232.7" cy="248.7" rx="15.2" ry="4.3" transform="rotate(50 232.7 248.7)" fill="#5a9be7" opacity="0.52"/><ellipse cx="170.6" cy="145.2" rx="16.7" ry="6.2" transform="rotate(51 170.6 145.2)" fill="#5a9be7" opacity="0.67"/><ellipse cx="231.0" cy="169.6" rx="26.2" ry="4.5" transform="rotate(52 231.0 169.6)" fill="#5a9be7" opacity="0.46"/><ellipse cx="-6.0" cy="114.6" rx="23.2" ry="5.4" transform="rotate(54 -6.0 114.6)" fill="#5a9be7" opacity="0.56"/><ellipse cx="14.8" cy="236.1" rx="15.1" ry="4.6" transform="rotate(52 14.8 236.1)" fill="#5a9be7" opacity="0.59"/><ellipse cx="348.9" cy="228.0" rx="13.1" ry="5.0" transform="rotate(55 348.9 228.0)" fill="#5a9be7" opacity="0.43"/><ellipse cx="195.3" cy="221.9" rx="29.8" ry="4.2" transform="rotate(56 195.3 221.9)" fill="#5a9be7" opacity="0.61"/><ellipse cx="-7.3" cy="96.9" rx="28.0" ry="4.2" transform="rotate(56 -7.3 96.9)" fill="#5a9be7" opacity="0.45"/><ellipse cx="-9.6" cy="278.3" rx="25.7" ry="6.0" transform="rotate(53 -9.6 278.3)" fill="#5a9be7" opacity="0.44"/><ellipse cx="182.7" cy="263.0" rx="18.6" ry="4.8" transform="rotate(64 182.7 263.0)" fill="#5a9be7" opacity="0.56"/><ellipse cx="-7.1" cy="135.9" rx="23.7" ry="4.0" transform="rotate(55 -7.1 135.9)" fill="#5a9be7" opacity="0.59"/><ellipse cx="364.0" cy="181.0" rx="28.0" ry="5.2" transform="rotate(56 364.0 181.0)" fill="#5a9be7" opacity="0.65"/><ellipse cx="146.5" cy="226.7" rx="15.9" ry="4.8" transform="rotate(53 146.5 226.7)" fill="#5a9be7" opacity="0.54"/><ellipse cx="48.7" cy="88.1" rx="15.9" ry="5.2" transform="rotate(54 48.7 88.1)" fill="#5a9be7" opacity="0.51"/><ellipse cx="422.0" cy="202.2" rx="27.5" ry="4.4" transform="rotate(55 422.0 202.2)" fill="#5a9be7" opacity="0.38"/><ellipse cx="56.9" cy="102.2" rx="19.1" ry="6.6" transform="rotate(60 56.9 102.2)" fill="#5a9be7" opacity="0.44"/><ellipse cx="319.6" cy="212.8" rx="28.3" ry="3.9" transform="rotate(55 319.6 212.8)" fill="#5a9be7" opacity="0.48"/><ellipse cx="12.4" cy="251.0" rx="17.9" ry="6.1" transform="rotate(57 12.4 251.0)" fill="#5a9be7" opacity="0.37"/><ellipse cx="-6.6" cy="75.4" rx="22.7" ry="3.9" transform="rotate(54 -6.6 75.4)" fill="#5a9be7" opacity="0.50"/><ellipse cx="301.5" cy="199.1" rx="14.6" ry="4.4" transform="rotate(54 301.5 199.1)" fill="#5a9be7" opacity="0.60"/><ellipse cx="157.4" cy="132.0" rx="27.6" ry="4.5" transform="rotate(54 157.4 132.0)" fill="#5a9be7" opacity="0.47"/><ellipse cx="-14.0" cy="190.5" rx="22.2" ry="6.2" transform="rotate(64 -14.0 190.5)" fill="#5a9be7" opacity="0.45"/><ellipse cx="276.7" cy="259.8" rx="15.9" ry="5.9" transform="rotate(59 276.7 259.8)" fill="#5a9be7" opacity="0.68"/><ellipse cx="167.5" cy="133.4" rx="13.1" ry="5.0" transform="rotate(55 167.5 133.4)" fill="#5a9be7" opacity="0.52"/><ellipse cx="156.1" cy="153.3" rx="15.0" ry="5.8" transform="rotate(53 156.1 153.3)" fill="#5a9be7" opacity="0.38"/><ellipse cx="128.8" cy="140.6" rx="14.7" ry="5.5" transform="rotate(60 128.8 140.6)" fill="#5a9be7" opacity="0.54"/><ellipse cx="151.1" cy="126.6" rx="13.1" ry="5.0" transform="rotate(51 151.1 126.6)" fill="#5a9be7" opacity="0.52"/><ellipse cx="238.6" cy="151.7" rx="17.9" ry="4.6" transform="rotate(50 238.6 151.7)" fill="#5a9be7" opacity="0.47"/><ellipse cx="92.9" cy="199.5" rx="15.3" ry="5.2" transform="rotate(59 92.9 199.5)" fill="#5a9be7" opacity="0.68"/><ellipse cx="138.2" cy="177.5" rx="29.0" ry="6.1" transform="rotate(59 138.2 177.5)" fill="#5a9be7" opacity="0.57"/><ellipse cx="159.9" cy="138.9" rx="17.0" ry="6.3" transform="rotate(62 159.9 138.9)" fill="#5a9be7" opacity="0.48"/><ellipse cx="36.1" cy="160.9" rx="17.6" ry="4.9" transform="rotate(64 36.1 160.9)" fill="#5a9be7" opacity="0.40"/><ellipse cx="61.6" cy="94.0" rx="24.2" ry="4.5" transform="rotate(50 61.6 94.0)" fill="#5a9be7" opacity="0.54"/><ellipse cx="197.1" cy="195.2" rx="21.9" ry="5.7" transform="rotate(58 197.1 195.2)" fill="#5a9be7" opacity="0.64"/><ellipse cx="131.0" cy="251.9" rx="17.6" ry="5.9" transform="rotate(60 131.0 251.9)" fill="#5a9be7" opacity="0.59"/><ellipse cx="408.8" cy="237.1" rx="14.9" ry="5.7" transform="rotate(57 408.8 237.1)" fill="#5a9be7" opacity="0.55"/><ellipse cx="141.3" cy="107.8" rx="25.5" ry="5.4" transform="rotate(53 141.3 107.8)" fill="#5a9be7" opacity="0.44"/><ellipse cx="3.5" cy="55.7" rx="13.8" ry="5.9" transform="rotate(52 3.5 55.7)" fill="#5a9be7" opacity="0.51"/><ellipse cx="48.2" cy="247.1" rx="27.7" ry="4.0" transform="rotate(54 48.2 247.1)" fill="#5a9be7" opacity="0.53"/><ellipse cx="125.2" cy="221.4" rx="27.2" ry="6.3" transform="rotate(58 125.2 221.4)" fill="#5a9be7" opacity="0.50"/><ellipse cx="293.1" cy="188.7" rx="27.0" ry="6.2" transform="rotate(52 293.1 188.7)" fill="#5a9be7" opacity="0.48"/><ellipse cx="238.5" cy="265.0" rx="29.5" ry="4.2" transform="rotate(60 238.5 265.0)" fill="#5a9be7" opacity="0.50"/><ellipse cx="395.0" cy="276.5" rx="12.9" ry="5.9" transform="rotate(52 395.0 276.5)" fill="#5a9be7" opacity="0.36"/><ellipse cx="103.7" cy="214.7" rx="29.9" ry="4.2" transform="rotate(55 103.7 214.7)" fill="#5a9be7" opacity="0.36"/><ellipse cx="219.2" cy="155.1" rx="18.7" ry="4.7" transform="rotate(61 219.2 155.1)" fill="#5a9be7" opacity="0.64"/><ellipse cx="102.7" cy="133.2" rx="23.1" ry="6.1" transform="rotate(64 102.7 133.2)" fill="#5a9be7" opacity="0.49"/><ellipse cx="287.3" cy="170.2" rx="26.4" ry="4.2" transform="rotate(52 287.3 170.2)" fill="#5a9be7" opacity="0.39"/><ellipse cx="77.4" cy="154.9" rx="18.6" ry="4.6" transform="rotate(51 77.4 154.9)" fill="#5a9be7" opacity="0.37"/><ellipse cx="10.3" cy="83.0" rx="20.7" ry="6.8" transform="rotate(53 10.3 83.0)" fill="#5a9be7" opacity="0.65"/><ellipse cx="192.9" cy="138.7" rx="26.5" ry="5.0" transform="rotate(51 192.9 138.7)" fill="#5a9be7" opacity="0.54"/><ellipse cx="270.6" cy="188.7" rx="17.0" ry="6.6" transform="rotate(62 270.6 188.7)" fill="#5a9be7" opacity="0.70"/><ellipse cx="174.4" cy="239.3" rx="25.0" ry="4.3" transform="rotate(50 174.4 239.3)" fill="#5a9be7" opacity="0.41"/><ellipse cx="136.5" cy="220.1" rx="17.6" ry="5.3" transform="rotate(50 136.5 220.1)" fill="#5a9be7" opacity="0.42"/><ellipse cx="212.3" cy="233.6" rx="26.3" ry="6.0" transform="rotate(56 212.3 233.6)" fill="#5a9be7" opacity="0.63"/><ellipse cx="347.4" cy="223.4" rx="29.7" ry="4.1" transform="rotate(63 347.4 223.4)" fill="#5a9be7" opacity="0.49"/><ellipse cx="149.8" cy="127.8" rx="19.2" ry="3.6" transform="rotate(55 149.8 127.8)" fill="#b8dafa" opacity="0.6"/><ellipse cx="262.1" cy="124.2" rx="13.9" ry="3.8" transform="rotate(55 262.1 124.2)" fill="#b8dafa" opacity="0.6"/><ellipse cx="17.4" cy="119.6" rx="20.4" ry="2.4" transform="rotate(60 17.4 119.6)" fill="#b8dafa" opacity="0.6"/><ellipse cx="220.8" cy="202.5" rx="12.5" ry="2.2" transform="rotate(52 220.8 202.5)" fill="#b8dafa" opacity="0.6"/><ellipse cx="132.7" cy="142.6" rx="10.1" ry="3.0" transform="rotate(56 132.7 142.6)" fill="#b8dafa" opacity="0.6"/><ellipse cx="119.7" cy="168.1" rx="23.3" ry="2.4" transform="rotate(62 119.7 168.1)" fill="#b8dafa" opacity="0.6"/><ellipse cx="119.4" cy="220.2" rx="11.5" ry="4.0" transform="rotate(56 119.4 220.2)" fill="#b8dafa" opacity="0.6"/><ellipse cx="408.2" cy="91.9" rx="15.7" ry="3.4" transform="rotate(52 408.2 91.9)" fill="#b8dafa" opacity="0.6"/><ellipse cx="98.0" cy="201.7" rx="23.3" ry="2.6" transform="rotate(53 98.0 201.7)" fill="#b8dafa" opacity="0.6"/><ellipse cx="135.7" cy="276.7" rx="12.1" ry="3.3" transform="rotate(55 135.7 276.7)" fill="#b8dafa" opacity="0.6"/><ellipse cx="264.7" cy="90.1" rx="18.6" ry="3.8" transform="rotate(62 264.7 90.1)" fill="#b8dafa" opacity="0.6"/><ellipse cx="257.9" cy="160.4" rx="17.9" ry="2.2" transform="rotate(62 257.9 160.4)" fill="#b8dafa" opacity="0.6"/><ellipse cx="285.4" cy="148.0" rx="19.3" ry="2.8" transform="rotate(55 285.4 148.0)" fill="#b8dafa" opacity="0.6"/><ellipse cx="78.5" cy="183.4" rx="18.0" ry="3.0" transform="rotate(50 78.5 183.4)" fill="#b8dafa" opacity="0.6"/><ellipse cx="257.3" cy="146.4" rx="18.3" ry="3.2" transform="rotate(63 257.3 146.4)" fill="#b8dafa" opacity="0.6"/><ellipse cx="43.4" cy="151.7" rx="23.9" ry="3.5" transform="rotate(54 43.4 151.7)" fill="#b8dafa" opacity="0.6"/><ellipse cx="306.5" cy="276.7" rx="15.6" ry="3.7" transform="rotate(52 306.5 276.7)" fill="#b8dafa" opacity="0.6"/><ellipse cx="420.5" cy="157.1" rx="13.3" ry="3.7" transform="rotate(59 420.5 157.1)" fill="#b8dafa" opacity="0.6"/><ellipse cx="397.0" cy="238.2" rx="21.2" ry="3.0" transform="rotate(64 397.0 238.2)" fill="#b8dafa" opacity="0.6"/><ellipse cx="4.2" cy="248.0" rx="20.0" ry="2.5" transform="rotate(61 4.2 248.0)" fill="#b8dafa" opacity="0.6"/><ellipse cx="179.3" cy="167.9" rx="22.1" ry="2.4" transform="rotate(54 179.3 167.9)" fill="#b8dafa" opacity="0.6"/><ellipse cx="264.7" cy="56.9" rx="17.8" ry="3.6" transform="rotate(57 264.7 56.9)" fill="#b8dafa" opacity="0.6"/><ellipse cx="83.8" cy="231.2" rx="22.0" ry="3.5" transform="rotate(58 83.8 231.2)" fill="#b8dafa" opacity="0.6"/><ellipse cx="382.6" cy="230.4" rx="12.1" ry="2.7" transform="rotate(51 382.6 230.4)" fill="#b8dafa" opacity="0.6"/><ellipse cx="-8.4" cy="122.2" rx="22.1" ry="3.7" transform="rotate(52 -8.4 122.2)" fill="#b8dafa" opacity="0.6"/><ellipse cx="56.8" cy="132.5" rx="21.9" ry="3.2" transform="rotate(63 56.8 132.5)" fill="#b8dafa" opacity="0.6"/><ellipse cx="7.3" cy="276.3" rx="12.9" ry="3.3" transform="rotate(62 7.3 276.3)" fill="#b8dafa" opacity="0.6"/><ellipse cx="302.4" cy="86.5" rx="19.4" ry="2.9" transform="rotate(50 302.4 86.5)" fill="#b8dafa" opacity="0.6"/><ellipse cx="127.8" cy="114.9" rx="18.8" ry="2.6" transform="rotate(58 127.8 114.9)" fill="#b8dafa" opacity="0.6"/><ellipse cx="287.7" cy="82.6" rx="11.8" ry="3.4" transform="rotate(57 287.7 82.6)" fill="#b8dafa" opacity="0.6"/><ellipse cx="33.1" cy="67.0" rx="23.2" ry="3.2" transform="rotate(55 33.1 67.0)" fill="#b8dafa" opacity="0.6"/><ellipse cx="63.3" cy="278.0" rx="19.7" ry="3.5" transform="rotate(55 63.3 278.0)" fill="#b8dafa" opacity="0.6"/><ellipse cx="114.6" cy="137.2" rx="12.0" ry="3.3" transform="rotate(56 114.6 137.2)" fill="#b8dafa" opacity="0.6"/><ellipse cx="344.1" cy="137.4" rx="16.4" ry="3.0" transform="rotate(63 344.1 137.4)" fill="#b8dafa" opacity="0.6"/><ellipse cx="130.9" cy="208.1" rx="13.3" ry="3.2" transform="rotate(54 130.9 208.1)" fill="#b8dafa" opacity="0.6"/><ellipse cx="367.7" cy="108.0" rx="22.0" ry="3.4" transform="rotate(56 367.7 108.0)" fill="#b8dafa" opacity="0.6"/><ellipse cx="395.2" cy="132.2" rx="20.4" ry="3.2" transform="rotate(56 395.2 132.2)" fill="#b8dafa" opacity="0.6"/><ellipse cx="3.9" cy="139.8" rx="13.9" ry="2.9" transform="rotate(63 3.9 139.8)" fill="#b8dafa" opacity="0.6"/><ellipse cx="106.8" cy="206.0" rx="19.4" ry="2.5" transform="rotate(56 106.8 206.0)" fill="#b8dafa" opacity="0.6"/><ellipse cx="34.5" cy="254.1" rx="13.5" ry="2.8" transform="rotate(55 34.5 254.1)" fill="#b8dafa" opacity="0.6"/><ellipse cx="344.2" cy="243.3" rx="18.3" ry="3.1" transform="rotate(51 344.2 243.3)" fill="#b8dafa" opacity="0.6"/><ellipse cx="378.4" cy="60.4" rx="15.1" ry="2.7" transform="rotate(60 378.4 60.4)" fill="#b8dafa" opacity="0.6"/><ellipse cx="276.1" cy="121.7" rx="22.6" ry="3.9" transform="rotate(50 276.1 121.7)" fill="#b8dafa" opacity="0.6"/><ellipse cx="259.8" cy="151.8" rx="15.1" ry="2.9" transform="rotate(54 259.8 151.8)" fill="#b8dafa" opacity="0.6"/><ellipse cx="276.9" cy="184.5" rx="23.6" ry="4.0" transform="rotate(64 276.9 184.5)" fill="#b8dafa" opacity="0.6"/><ellipse cx="152.8" cy="238.1" rx="19.1" ry="3.4" transform="rotate(64 152.8 238.1)" fill="#b8dafa" opacity="0.6"/><ellipse cx="4.9" cy="150.1" rx="15.6" ry="3.3" transform="rotate(53 4.9 150.1)" fill="#b8dafa" opacity="0.6"/><ellipse cx="420.4" cy="89.5" rx="15.2" ry="2.3" transform="rotate(56 420.4 89.5)" fill="#b8dafa" opacity="0.6"/><ellipse cx="308.8" cy="59.2" rx="12.3" ry="3.3" transform="rotate(59 308.8 59.2)" fill="#b8dafa" opacity="0.6"/><ellipse cx="308.9" cy="100.0" rx="21.4" ry="3.5" transform="rotate(61 308.9 100.0)" fill="#b8dafa" opacity="0.6"/><ellipse cx="28.9" cy="151.7" rx="10.2" ry="3.7" transform="rotate(63 28.9 151.7)" fill="#b8dafa" opacity="0.6"/><ellipse cx="378.1" cy="45.0" rx="14.9" ry="3.1" transform="rotate(57 378.1 45.0)" fill="#b8dafa" opacity="0.6"/><ellipse cx="25.1" cy="228.6" rx="14.2" ry="3.0" transform="rotate(52 25.1 228.6)" fill="#b8dafa" opacity="0.6"/><ellipse cx="230.5" cy="70.3" rx="11.2" ry="3.0" transform="rotate(54 230.5 70.3)" fill="#b8dafa" opacity="0.6"/><ellipse cx="324.9" cy="98.4" rx="15.8" ry="2.1" transform="rotate(53 324.9 98.4)" fill="#b8dafa" opacity="0.6"/><ellipse cx="178.3" cy="173.1" rx="16.4" ry="3.7" transform="rotate(51 178.3 173.1)" fill="#b8dafa" opacity="0.6"/><ellipse cx="357.5" cy="76.4" rx="23.6" ry="3.0" transform="rotate(56 357.5 76.4)" fill="#b8dafa" opacity="0.6"/><ellipse cx="250.5" cy="246.5" rx="23.5" ry="2.8" transform="rotate(50 250.5 246.5)" fill="#b8dafa" opacity="0.6"/><ellipse cx="44.2" cy="235.6" rx="20.3" ry="3.4" transform="rotate(52 44.2 235.6)" fill="#b8dafa" opacity="0.6"/><ellipse cx="214.0" cy="46.0" rx="11.5" ry="2.6" transform="rotate(64 214.0 46.0)" fill="#b8dafa" opacity="0.6"/><ellipse cx="264.4" cy="242.6" rx="10.6" ry="2.8" transform="rotate(51 264.4 242.6)" fill="#b8dafa" opacity="0.6"/><ellipse cx="92.4" cy="66.0" rx="22.9" ry="2.7" transform="rotate(57 92.4 66.0)" fill="#b8dafa" opacity="0.6"/><ellipse cx="269.3" cy="252.0" rx="23.3" ry="3.1" transform="rotate(57 269.3 252.0)" fill="#b8dafa" opacity="0.6"/><ellipse cx="381.7" cy="133.9" rx="14.2" ry="3.5" transform="rotate(54 381.7 133.9)" fill="#b8dafa" opacity="0.6"/><ellipse cx="140.5" cy="142.2" rx="16.7" ry="2.7" transform="rotate(56 140.5 142.2)" fill="#b8dafa" opacity="0.6"/><ellipse cx="177.9" cy="51.1" rx="21.7" ry="2.1" transform="rotate(57 177.9 51.1)" fill="#b8dafa" opacity="0.6"/><ellipse cx="221.4" cy="135.1" rx="13.1" ry="2.2" transform="rotate(55 221.4 135.1)" fill="#b8dafa" opacity="0.6"/><ellipse cx="116.5" cy="155.4" rx="13.2" ry="3.5" transform="rotate(57 116.5 155.4)" fill="#b8dafa" opacity="0.6"/><ellipse cx="-21.0" cy="136.8" rx="23.5" ry="2.0" transform="rotate(58 -21.0 136.8)" fill="#b8dafa" opacity="0.6"/><ellipse cx="407.4" cy="127.0" rx="18.4" ry="2.7" transform="rotate(54 407.4 127.0)" fill="#b8dafa" opacity="0.6"/><ellipse cx="249.1" cy="180.7" rx="14.4" ry="3.0" transform="rotate(57 249.1 180.7)" fill="#b8dafa" opacity="0.6"/><ellipse cx="314.2" cy="51.9" rx="11.3" ry="2.5" transform="rotate(54 314.2 51.9)" fill="#b8dafa" opacity="0.6"/><ellipse cx="333.0" cy="141.3" rx="22.0" ry="2.8" transform="rotate(54 333.0 141.3)" fill="#b8dafa" opacity="0.6"/><ellipse cx="281.0" cy="59.7" rx="23.8" ry="3.7" transform="rotate(55 281.0 59.7)" fill="#b8dafa" opacity="0.6"/><ellipse cx="117.8" cy="235.8" rx="21.0" ry="3.3" transform="rotate(51 117.8 235.8)" fill="#b8dafa" opacity="0.6"/><ellipse cx="318.6" cy="50.7" rx="18.7" ry="3.1" transform="rotate(63 318.6 50.7)" fill="#b8dafa" opacity="0.6"/><ellipse cx="262.4" cy="44.6" rx="23.1" ry="3.5" transform="rotate(58 262.4 44.6)" fill="#b8dafa" opacity="0.6"/><ellipse cx="-22.5" cy="216.1" rx="15.9" ry="3.4" transform="rotate(64 -22.5 216.1)" fill="#b8dafa" opacity="0.6"/><ellipse cx="387.5" cy="57.2" rx="20.9" ry="2.9" transform="rotate(61 387.5 57.2)" fill="#b8dafa" opacity="0.6"/><ellipse cx="145.0" cy="146.6" rx="16.1" ry="2.2" transform="rotate(54 145.0 146.6)" fill="#b8dafa" opacity="0.6"/><ellipse cx="305.6" cy="56.3" rx="11.6" ry="3.7" transform="rotate(59 305.6 56.3)" fill="#b8dafa" opacity="0.6"/><ellipse cx="221.7" cy="66.4" rx="11.7" ry="2.6" transform="rotate(63 221.7 66.4)" fill="#b8dafa" opacity="0.6"/><ellipse cx="227.1" cy="260.5" rx="13.0" ry="2.8" transform="rotate(58 227.1 260.5)" fill="#b8dafa" opacity="0.6"/><ellipse cx="352.7" cy="68.8" rx="22.2" ry="2.9" transform="rotate(50 352.7 68.8)" fill="#b8dafa" opacity="0.6"/><ellipse cx="169.4" cy="129.8" rx="19.4" ry="3.9" transform="rotate(57 169.4 129.8)" fill="#b8dafa" opacity="0.6"/><ellipse cx="285.3" cy="132.3" rx="20.9" ry="2.2" transform="rotate(60 285.3 132.3)" fill="#b8dafa" opacity="0.6"/><ellipse cx="49.9" cy="179.8" rx="12.8" ry="2.7" transform="rotate(52 49.9 179.8)" fill="#b8dafa" opacity="0.6"/><ellipse cx="132.4" cy="181.1" rx="17.3" ry="2.8" transform="rotate(58 132.4 181.1)" fill="#b8dafa" opacity="0.6"/><ellipse cx="354.0" cy="125.2" rx="18.2" ry="3.0" transform="rotate(64 354.0 125.2)" fill="#b8dafa" opacity="0.6"/><ellipse cx="122.6" cy="206.6" rx="13.3" ry="2.5" transform="rotate(60 122.6 206.6)" fill="#b8dafa" opacity="0.6"/><ellipse cx="233.7" cy="100.9" rx="10.9" ry="3.6" transform="rotate(55 233.7 100.9)" fill="#b8dafa" opacity="0.6"/><ellipse cx="297.4" cy="143.1" rx="18.6" ry="3.1" transform="rotate(64 297.4 143.1)" fill="#b8dafa" opacity="0.6"/><ellipse cx="384.3" cy="148.6" rx="16.8" ry="2.5" transform="rotate(61 384.3 148.6)" fill="#b8dafa" opacity="0.6"/><ellipse cx="21.0" cy="112.8" rx="21.9" ry="2.1" transform="rotate(60 21.0 112.8)" fill="#b8dafa" opacity="0.6"/><ellipse cx="230.6" cy="171.6" rx="14.7" ry="2.3" transform="rotate(63 230.6 171.6)" fill="#b8dafa" opacity="0.6"/><ellipse cx="319.1" cy="232.6" rx="11.4" ry="3.6" transform="rotate(53 319.1 232.6)" fill="#b8dafa" opacity="0.6"/><ellipse cx="64.7" cy="167.6" rx="18.5" ry="2.2" transform="rotate(61 64.7 167.6)" fill="#b8dafa" opacity="0.6"/><ellipse cx="237.1" cy="255.1" rx="22.9" ry="3.4" transform="rotate(55 237.1 255.1)" fill="#b8dafa" opacity="0.6"/><ellipse cx="403.0" cy="211.7" rx="14.1" ry="3.7" transform="rotate(60 403.0 211.7)" fill="#b8dafa" opacity="0.6"/><ellipse cx="94.1" cy="99.0" rx="10.3" ry="3.1" transform="rotate(54 94.1 99.0)" fill="#b8dafa" opacity="0.6"/><ellipse cx="106.9" cy="99.9" rx="11.8" ry="3.0" transform="rotate(54 106.9 99.9)" fill="#b8dafa" opacity="0.6"/><ellipse cx="103.3" cy="105.8" rx="17.1" ry="3.7" transform="rotate(52 103.3 105.8)" fill="#b8dafa" opacity="0.6"/><ellipse cx="361.8" cy="244.3" rx="18.5" ry="3.1" transform="rotate(60 361.8 244.3)" fill="#b8dafa" opacity="0.6"/><ellipse cx="215.5" cy="197.6" rx="22.9" ry="3.6" transform="rotate(54 215.5 197.6)" fill="#b8dafa" opacity="0.6"/><ellipse cx="-0.6" cy="264.0" rx="15.1" ry="3.6" transform="rotate(53 -0.6 264.0)" fill="#b8dafa" opacity="0.6"/><ellipse cx="178.8" cy="128.1" rx="20.2" ry="3.9" transform="rotate(57 178.8 128.1)" fill="#b8dafa" opacity="0.6"/><ellipse cx="229.7" cy="122.9" rx="13.3" ry="3.9" transform="rotate(52 229.7 122.9)" fill="#b8dafa" opacity="0.6"/><ellipse cx="398.2" cy="196.9" rx="11.0" ry="3.8" transform="rotate(51 398.2 196.9)" fill="#b8dafa" opacity="0.6"/><ellipse cx="229.4" cy="67.9" rx="23.8" ry="2.6" transform="rotate(62 229.4 67.9)" fill="#b8dafa" opacity="0.6"/><ellipse cx="2.6" cy="199.1" rx="11.0" ry="2.1" transform="rotate(58 2.6 199.1)" fill="#b8dafa" opacity="0.6"/></g></g><g clip-path="url(#zA)"><g filter="url(#bl2)" stroke-linecap="round"><line x1="-63.1" y1="-4.3" x2="-117.1" y2="118.8" stroke="#6aa8ee" stroke-width="3.0" opacity="0.78"/><line x1="-60.5" y1="-4.3" x2="-114.5" y2="118.8" stroke="#b2d7fb" stroke-width="1.1" opacity="0.63"/><line x1="-118.5" y1="122.0" x2="-158.3" y2="212.9" stroke="#6aa8ee" stroke-width="3.0" opacity="0.66"/><line x1="-115.9" y1="122.0" x2="-155.7" y2="212.9" stroke="#b2d7fb" stroke-width="1.1" opacity="0.53"/><line x1="-162.9" y1="223.3" x2="-193.2" y2="292.6" stroke="#6aa8ee" stroke-width="3.0" opacity="0.77"/><line x1="-160.3" y1="223.3" x2="-190.7" y2="292.6" stroke="#b2d7fb" stroke-width="1.1" opacity="0.62"/><line x1="-48.0" y1="-27.6" x2="-80.8" y2="58.2" stroke="#6aa8ee" stroke-width="2.5" opacity="0.80"/><line x1="-45.7" y1="-27.6" x2="-78.5" y2="58.2" stroke="#b2d7fb" stroke-width="1.1" opacity="0.64"/><line x1="-87.5" y1="75.8" x2="-123.8" y2="171.0" stroke="#6aa8ee" stroke-width="2.5" opacity="0.65"/><line x1="-85.2" y1="75.8" x2="-121.5" y2="171.0" stroke="#b2d7fb" stroke-width="1.1" opacity="0.52"/><line x1="-126.4" y1="177.8" x2="-152.0" y2="244.7" stroke="#6aa8ee" stroke-width="2.5" opacity="0.85"/><line x1="-124.1" y1="177.8" x2="-149.6" y2="244.7" stroke="#b2d7fb" stroke-width="1.1" opacity="0.68"/><line x1="-49.3" y1="-4.2" x2="-111.0" y2="137.6" stroke="#6aa8ee" stroke-width="3.6" opacity="0.61"/><line x1="-46.4" y1="-4.2" x2="-108.1" y2="137.6" stroke="#b2d7fb" stroke-width="1.1" opacity="0.49"/><line x1="-115.3" y1="147.5" x2="-158.3" y2="246.3" stroke="#6aa8ee" stroke-width="3.6" opacity="0.84"/><line x1="-112.4" y1="147.5" x2="-155.4" y2="246.3" stroke="#b2d7fb" stroke-width="1.1" opacity="0.67"/><line x1="-163.4" y1="258.1" x2="-207.6" y2="359.7" stroke="#6aa8ee" stroke-width="3.6" opacity="0.93"/><line x1="-160.5" y1="258.1" x2="-204.7" y2="359.7" stroke="#b2d7fb" stroke-width="1.1" opacity="0.74"/><line x1="-33.7" y1="-26.6" x2="-91.9" y2="107.0" stroke="#6aa8ee" stroke-width="1.4" opacity="0.94"/><line x1="-32.0" y1="-26.6" x2="-90.2" y2="107.0" stroke="#b2d7fb" stroke-width="1.1" opacity="0.75"/><line x1="-93.0" y1="109.4" x2="-105.6" y2="138.4" stroke="#6aa8ee" stroke-width="1.4" opacity="0.89"/><line x1="-91.3" y1="109.4" x2="-103.9" y2="138.4" stroke="#b2d7fb" stroke-width="1.1" opacity="0.71"/><line x1="-111.3" y1="151.4" x2="-150.5" y2="241.3" stroke="#6aa8ee" stroke-width="1.4" opacity="0.80"/><line x1="-109.6" y1="151.4" x2="-148.8" y2="241.3" stroke="#b2d7fb" stroke-width="1.1" opacity="0.64"/><line x1="-156.7" y1="255.5" x2="-211.6" y2="381.4" stroke="#6aa8ee" stroke-width="1.4" opacity="0.60"/><line x1="-155.0" y1="255.5" x2="-209.9" y2="381.4" stroke="#b2d7fb" stroke-width="1.1" opacity="0.48"/><line x1="-30.7" y1="-17.8" x2="-60.0" y2="49.2" stroke="#6aa8ee" stroke-width="3.4" opacity="0.72"/><line x1="-28.0" y1="-17.8" x2="-57.3" y2="49.2" stroke="#b2d7fb" stroke-width="1.1" opacity="0.58"/><line x1="-61.0" y1="51.4" x2="-114.1" y2="172.7" stroke="#6aa8ee" stroke-width="3.4" opacity="0.69"/><line x1="-58.2" y1="51.4" x2="-111.3" y2="172.7" stroke="#b2d7fb" stroke-width="1.1" opacity="0.55"/><line x1="-119.1" y1="184.1" x2="-158.8" y2="274.8" stroke="#6aa8ee" stroke-width="3.4" opacity="0.72"/><line x1="-116.3" y1="184.1" x2="-156.0" y2="274.8" stroke="#b2d7fb" stroke-width="1.1" opacity="0.57"/><line x1="-23.9" y1="-24.7" x2="-39.8" y2="19.0" stroke="#6aa8ee" stroke-width="3.5" opacity="0.69"/><line x1="-21.1" y1="-24.7" x2="-37.0" y2="19.0" stroke="#b2d7fb" stroke-width="1.1" opacity="0.55"/><line x1="-43.4" y1="28.7" x2="-88.0" y2="151.6" stroke="#6aa8ee" stroke-width="3.5" opacity="0.72"/><line x1="-40.5" y1="28.7" x2="-85.2" y2="151.6" stroke="#b2d7fb" stroke-width="1.1" opacity="0.57"/><line x1="-90.2" y1="157.5" x2="-129.0" y2="264.2" stroke="#6aa8ee" stroke-width="3.5" opacity="0.69"/><line x1="-87.3" y1="157.5" x2="-126.1" y2="264.2" stroke="#b2d7fb" stroke-width="1.1" opacity="0.55"/><line x1="-18.2" y1="-23.0" x2="-45.0" y2="39.7" stroke="#6aa8ee" stroke-width="1.8" opacity="0.72"/><line x1="-16.3" y1="-23.0" x2="-43.1" y2="39.7" stroke="#b2d7fb" stroke-width="1.1" opacity="0.57"/><line x1="-50.8" y1="53.3" x2="-97.6" y2="162.5" stroke="#6aa8ee" stroke-width="1.8" opacity="0.88"/><line x1="-48.9" y1="53.3" x2="-95.7" y2="162.5" stroke="#b2d7fb" stroke-width="1.1" opacity="0.70"/><line x1="-102.1" y1="173.2" x2="-117.0" y2="208.0" stroke="#6aa8ee" stroke-width="1.8" opacity="0.87"/><line x1="-100.2" y1="173.2" x2="-115.1" y2="208.0" stroke="#b2d7fb" stroke-width="1.1" opacity="0.69"/><line x1="-119.5" y1="213.9" x2="-141.9" y2="266.1" stroke="#6aa8ee" stroke-width="1.8" opacity="0.75"/><line x1="-117.6" y1="213.9" x2="-140.0" y2="266.1" stroke="#b2d7fb" stroke-width="1.1" opacity="0.60"/><line x1="-22.6" y1="-0.3" x2="-50.2" y2="73.1" stroke="#6aa8ee" stroke-width="3.6" opacity="0.65"/><line x1="-19.7" y1="-0.3" x2="-47.3" y2="73.1" stroke="#b2d7fb" stroke-width="1.1" opacity="0.52"/><line x1="-55.7" y1="87.7" x2="-101.8" y2="210.5" stroke="#6aa8ee" stroke-width="3.6" opacity="0.72"/><line x1="-52.8" y1="87.7" x2="-98.9" y2="210.5" stroke="#b2d7fb" stroke-width="1.1" opacity="0.57"/><line x1="-107.3" y1="225.2" x2="-134.5" y2="297.6" stroke="#6aa8ee" stroke-width="3.6" opacity="0.70"/><line x1="-104.4" y1="225.2" x2="-131.7" y2="297.6" stroke="#b2d7fb" stroke-width="1.1" opacity="0.56"/><line x1="-4.7" y1="-29.6" x2="-38.5" y2="57.8" stroke="#6aa8ee" stroke-width="3.3" opacity="0.73"/><line x1="-1.9" y1="-29.6" x2="-35.8" y2="57.8" stroke="#b2d7fb" stroke-width="1.1" opacity="0.59"/><line x1="-39.7" y1="60.8" x2="-93.7" y2="200.1" stroke="#6aa8ee" stroke-width="3.3" opacity="0.65"/><line x1="-37.0" y1="60.8" x2="-91.0" y2="200.1" stroke="#b2d7fb" stroke-width="1.1" opacity="0.52"/><line x1="-95.8" y1="205.4" x2="-148.0" y2="340.2" stroke="#6aa8ee" stroke-width="3.3" opacity="0.94"/><line x1="-93.0" y1="205.4" x2="-145.2" y2="340.2" stroke="#b2d7fb" stroke-width="1.1" opacity="0.75"/><line x1="-7.2" y1="-8.6" x2="-69.3" y2="134.6" stroke="#6aa8ee" stroke-width="1.7" opacity="0.67"/><line x1="-5.4" y1="-8.6" x2="-67.4" y2="134.6" stroke="#b2d7fb" stroke-width="1.1" opacity="0.53"/><line x1="-71.1" y1="138.8" x2="-118.6" y2="248.6" stroke="#6aa8ee" stroke-width="1.7" opacity="0.91"/><line x1="-69.2" y1="138.8" x2="-116.8" y2="248.6" stroke="#b2d7fb" stroke-width="1.1" opacity="0.73"/><line x1="6.5" y1="-26.4" x2="-16.2" y2="32.7" stroke="#6aa8ee" stroke-width="2.3" opacity="0.93"/><line x1="8.7" y1="-26.4" x2="-14.1" y2="32.7" stroke="#b2d7fb" stroke-width="1.1" opacity="0.74"/><line x1="-17.4" y1="35.9" x2="-36.0" y2="84.0" stroke="#6aa8ee" stroke-width="2.3" opacity="0.72"/><line x1="-15.3" y1="35.9" x2="-33.8" y2="84.0" stroke="#b2d7fb" stroke-width="1.1" opacity="0.58"/><line x1="-37.1" y1="86.8" x2="-61.5" y2="150.1" stroke="#6aa8ee" stroke-width="2.3" opacity="0.66"/><line x1="-34.9" y1="86.8" x2="-59.3" y2="150.1" stroke="#b2d7fb" stroke-width="1.1" opacity="0.53"/><line x1="-63.0" y1="154.1" x2="-98.0" y2="245.0" stroke="#6aa8ee" stroke-width="2.3" opacity="0.79"/><line x1="-60.9" y1="154.1" x2="-95.9" y2="245.0" stroke="#b2d7fb" stroke-width="1.1" opacity="0.63"/><line x1="-102.3" y1="256.0" x2="-148.7" y2="376.3" stroke="#6aa8ee" stroke-width="2.3" opacity="0.78"/><line x1="-100.1" y1="256.0" x2="-146.5" y2="376.3" stroke="#b2d7fb" stroke-width="1.1" opacity="0.63"/><line x1="8.2" y1="-20.7" x2="-35.3" y2="99.4" stroke="#6aa8ee" stroke-width="1.5" opacity="0.92"/><line x1="9.9" y1="-20.7" x2="-33.6" y2="99.4" stroke="#b2d7fb" stroke-width="1.1" opacity="0.74"/><line x1="-39.0" y1="109.4" x2="-55.3" y2="154.5" stroke="#6aa8ee" stroke-width="1.5" opacity="0.72"/><line x1="-37.2" y1="109.4" x2="-53.5" y2="154.5" stroke="#b2d7fb" stroke-width="1.1" opacity="0.57"/><line x1="-59.3" y1="165.6" x2="-81.7" y2="227.4" stroke="#6aa8ee" stroke-width="1.5" opacity="0.88"/><line x1="-57.6" y1="165.6" x2="-80.0" y2="227.4" stroke="#b2d7fb" stroke-width="1.1" opacity="0.70"/><line x1="-88.1" y1="244.9" x2="-118.0" y2="327.4" stroke="#6aa8ee" stroke-width="1.5" opacity="0.81"/><line x1="-86.3" y1="244.9" x2="-116.2" y2="327.4" stroke="#b2d7fb" stroke-width="1.1" opacity="0.65"/><line x1="6.5" y1="-0.7" x2="-3.5" y2="27.4" stroke="#6aa8ee" stroke-width="3.6" opacity="0.87"/><line x1="9.5" y1="-0.7" x2="-0.6" y2="27.4" stroke="#b2d7fb" stroke-width="1.1" opacity="0.69"/><line x1="-6.6" y1="35.8" x2="-17.9" y2="67.3" stroke="#6aa8ee" stroke-width="3.6" opacity="0.66"/><line x1="-3.6" y1="35.8" x2="-14.9" y2="67.3" stroke="#b2d7fb" stroke-width="1.1" opacity="0.53"/><line x1="-19.6" y1="72.1" x2="-61.6" y2="189.1" stroke="#6aa8ee" stroke-width="3.6" opacity="0.67"/><line x1="-16.7" y1="72.1" x2="-58.7" y2="189.1" stroke="#b2d7fb" stroke-width="1.1" opacity="0.54"/><line x1="-62.4" y1="191.4" x2="-81.3" y2="243.9" stroke="#6aa8ee" stroke-width="3.6" opacity="0.88"/><line x1="-59.5" y1="191.4" x2="-78.4" y2="243.9" stroke="#b2d7fb" stroke-width="1.1" opacity="0.70"/><line x1="-84.9" y1="253.9" x2="-123.1" y2="360.5" stroke="#6aa8ee" stroke-width="3.6" opacity="0.76"/><line x1="-81.9" y1="253.9" x2="-120.2" y2="360.5" stroke="#b2d7fb" stroke-width="1.1" opacity="0.61"/><line x1="18.6" y1="-22.2" x2="-19.4" y2="80.2" stroke="#6aa8ee" stroke-width="1.5" opacity="0.73"/><line x1="20.3" y1="-22.2" x2="-17.6" y2="80.2" stroke="#b2d7fb" stroke-width="1.1" opacity="0.58"/><line x1="-22.9" y1="89.7" x2="-61.0" y2="192.7" stroke="#6aa8ee" stroke-width="1.5" opacity="0.71"/><line x1="-21.2" y1="89.7" x2="-59.3" y2="192.7" stroke="#b2d7fb" stroke-width="1.1" opacity="0.57"/><line x1="-63.9" y1="200.4" x2="-114.1" y2="335.9" stroke="#6aa8ee" stroke-width="1.5" opacity="0.80"/><line x1="-62.2" y1="200.4" x2="-112.4" y2="335.9" stroke="#b2d7fb" stroke-width="1.1" opacity="0.64"/><line x1="17.2" y1="-2.6" x2="-3.7" y2="51.6" stroke="#6aa8ee" stroke-width="2.2" opacity="0.93"/><line x1="19.3" y1="-2.6" x2="-1.6" y2="51.6" stroke="#b2d7fb" stroke-width="1.1" opacity="0.74"/><line x1="-9.7" y1="67.2" x2="-61.9" y2="202.5" stroke="#6aa8ee" stroke-width="2.2" opacity="0.66"/><line x1="-7.6" y1="67.2" x2="-59.8" y2="202.5" stroke="#b2d7fb" stroke-width="1.1" opacity="0.53"/><line x1="-65.8" y1="212.6" x2="-123.0" y2="360.7" stroke="#6aa8ee" stroke-width="2.2" opacity="0.70"/><line x1="-63.7" y1="212.6" x2="-120.9" y2="360.7" stroke="#b2d7fb" stroke-width="1.1" opacity="0.56"/><line x1="32.0" y1="-25.3" x2="-20.2" y2="118.2" stroke="#6aa8ee" stroke-width="2.8" opacity="0.70"/><line x1="34.4" y1="-25.3" x2="-17.8" y2="118.2" stroke="#b2d7fb" stroke-width="1.1" opacity="0.56"/><line x1="-21.5" y1="121.7" x2="-61.8" y2="232.6" stroke="#6aa8ee" stroke-width="2.8" opacity="0.72"/><line x1="-19.0" y1="121.7" x2="-59.4" y2="232.6" stroke="#b2d7fb" stroke-width="1.1" opacity="0.58"/><line x1="-65.8" y1="243.6" x2="-97.5" y2="330.7" stroke="#6aa8ee" stroke-width="2.8" opacity="0.92"/><line x1="-63.3" y1="243.6" x2="-95.0" y2="330.7" stroke="#b2d7fb" stroke-width="1.1" opacity="0.74"/><line x1="35.6" y1="-21.9" x2="2.6" y2="74.8" stroke="#6aa8ee" stroke-width="2.6" opacity="0.82"/><line x1="37.9" y1="-21.9" x2="5.0" y2="74.8" stroke="#b2d7fb" stroke-width="1.1" opacity="0.66"/><line x1="-0.6" y1="84.2" x2="-12.9" y2="120.5" stroke="#6aa8ee" stroke-width="2.6" opacity="0.77"/><line x1="1.8" y1="84.2" x2="-10.6" y2="120.5" stroke="#b2d7fb" stroke-width="1.1" opacity="0.62"/><line x1="-16.2" y1="130.2" x2="-52.0" y2="235.4" stroke="#6aa8ee" stroke-width="2.6" opacity="0.94"/><line x1="-13.9" y1="130.2" x2="-49.6" y2="235.4" stroke="#b2d7fb" stroke-width="1.1" opacity="0.75"/><line x1="-54.2" y1="241.8" x2="-81.5" y2="322.2" stroke="#6aa8ee" stroke-width="2.6" opacity="0.63"/><line x1="-51.9" y1="241.8" x2="-79.2" y2="322.2" stroke="#b2d7fb" stroke-width="1.1" opacity="0.50"/><line x1="42.4" y1="-22.4" x2="-15.9" y2="115.5" stroke="#6aa8ee" stroke-width="3.3" opacity="0.78"/><line x1="45.1" y1="-22.4" x2="-13.2" y2="115.5" stroke="#b2d7fb" stroke-width="1.1" opacity="0.62"/><line x1="-19.7" y1="124.3" x2="-59.6" y2="218.7" stroke="#6aa8ee" stroke-width="3.3" opacity="0.93"/><line x1="-16.9" y1="124.3" x2="-56.9" y2="218.7" stroke="#b2d7fb" stroke-width="1.1" opacity="0.74"/><line x1="-63.7" y1="228.5" x2="-99.8" y2="313.8" stroke="#6aa8ee" stroke-width="3.3" opacity="0.70"/><line x1="-61.0" y1="228.5" x2="-97.1" y2="313.8" stroke="#b2d7fb" stroke-width="1.1" opacity="0.56"/><line x1="47.5" y1="-23.5" x2="-0.9" y2="105.7" stroke="#6aa8ee" stroke-width="1.8" opacity="0.88"/><line x1="49.4" y1="-23.5" x2="1.0" y2="105.7" stroke="#b2d7fb" stroke-width="1.1" opacity="0.70"/><line x1="-7.5" y1="123.4" x2="-59.8" y2="263.0" stroke="#6aa8ee" stroke-width="1.8" opacity="0.84"/><line x1="-5.6" y1="123.4" x2="-57.8" y2="263.0" stroke="#b2d7fb" stroke-width="1.1" opacity="0.67"/><line x1="55.6" y1="-24.7" x2="2.2" y2="102.1" stroke="#6aa8ee" stroke-width="3.3" opacity="0.71"/><line x1="58.3" y1="-24.7" x2="4.9" y2="102.1" stroke="#b2d7fb" stroke-width="1.1" opacity="0.56"/><line x1="-0.3" y1="108.0" x2="-59.2" y2="248.0" stroke="#6aa8ee" stroke-width="3.3" opacity="0.61"/><line x1="2.4" y1="108.0" x2="-56.5" y2="248.0" stroke="#b2d7fb" stroke-width="1.1" opacity="0.49"/><line x1="-63.5" y1="258.2" x2="-92.1" y2="326.1" stroke="#6aa8ee" stroke-width="3.3" opacity="0.88"/><line x1="-60.8" y1="258.2" x2="-89.4" y2="326.1" stroke="#b2d7fb" stroke-width="1.1" opacity="0.70"/><line x1="64.5" y1="-28.1" x2="17.5" y2="80.3" stroke="#6aa8ee" stroke-width="2.9" opacity="0.64"/><line x1="67.0" y1="-28.1" x2="20.1" y2="80.3" stroke="#b2d7fb" stroke-width="1.1" opacity="0.51"/><line x1="9.9" y1="98.1" x2="-48.1" y2="232.0" stroke="#6aa8ee" stroke-width="2.9" opacity="0.71"/><line x1="12.4" y1="98.1" x2="-45.6" y2="232.0" stroke="#b2d7fb" stroke-width="1.1" opacity="0.57"/><line x1="-50.3" y1="236.9" x2="-98.7" y2="348.7" stroke="#6aa8ee" stroke-width="2.9" opacity="0.87"/><line x1="-47.8" y1="236.9" x2="-96.2" y2="348.7" stroke="#b2d7fb" stroke-width="1.1" opacity="0.69"/><line x1="68.5" y1="-28.2" x2="21.4" y2="105.2" stroke="#6aa8ee" stroke-width="3.1" opacity="0.87"/><line x1="71.1" y1="-28.2" x2="24.1" y2="105.2" stroke="#b2d7fb" stroke-width="1.1" opacity="0.70"/><line x1="16.3" y1="119.8" x2="-31.0" y2="254.0" stroke="#6aa8ee" stroke-width="3.1" opacity="0.80"/><line x1="18.9" y1="119.8" x2="-28.4" y2="254.0" stroke="#b2d7fb" stroke-width="1.1" opacity="0.64"/><line x1="72.3" y1="-19.4" x2="61.5" y2="8.5" stroke="#6aa8ee" stroke-width="2.3" opacity="0.66"/><line x1="74.5" y1="-19.4" x2="63.6" y2="8.5" stroke="#b2d7fb" stroke-width="1.1" opacity="0.53"/><line x1="55.7" y1="23.2" x2="34.9" y2="76.8" stroke="#6aa8ee" stroke-width="2.3" opacity="0.83"/><line x1="57.9" y1="23.2" x2="37.1" y2="76.8" stroke="#b2d7fb" stroke-width="1.1" opacity="0.66"/><line x1="29.3" y1="91.2" x2="-14.2" y2="203.0" stroke="#6aa8ee" stroke-width="2.3" opacity="0.78"/><line x1="31.4" y1="91.2" x2="-12.1" y2="203.0" stroke="#b2d7fb" stroke-width="1.1" opacity="0.62"/><line x1="-17.0" y1="210.0" x2="-40.0" y2="269.2" stroke="#6aa8ee" stroke-width="2.3" opacity="0.67"/><line x1="-14.8" y1="210.0" x2="-37.8" y2="269.2" stroke="#b2d7fb" stroke-width="1.1" opacity="0.53"/><line x1="72.1" y1="-2.2" x2="11.8" y2="136.8" stroke="#6aa8ee" stroke-width="2.2" opacity="0.70"/><line x1="74.2" y1="-2.2" x2="13.9" y2="136.8" stroke="#b2d7fb" stroke-width="1.1" opacity="0.56"/><line x1="4.3" y1="154.0" x2="-40.2" y2="256.4" stroke="#6aa8ee" stroke-width="2.2" opacity="0.94"/><line x1="6.4" y1="154.0" x2="-38.1" y2="256.4" stroke="#b2d7fb" stroke-width="1.1" opacity="0.75"/><line x1="82.0" y1="-15.4" x2="71.2" y2="14.1" stroke="#6aa8ee" stroke-width="2.6" opacity="0.90"/><line x1="84.3" y1="-15.4" x2="73.5" y2="14.1" stroke="#b2d7fb" stroke-width="1.1" opacity="0.72"/><line x1="67.3" y1="24.6" x2="36.3" y2="108.8" stroke="#6aa8ee" stroke-width="2.6" opacity="0.86"/><line x1="69.6" y1="24.6" x2="38.7" y2="108.8" stroke="#b2d7fb" stroke-width="1.1" opacity="0.69"/><line x1="34.1" y1="114.8" x2="15.8" y2="164.7" stroke="#6aa8ee" stroke-width="2.6" opacity="0.80"/><line x1="36.5" y1="114.8" x2="18.1" y2="164.7" stroke="#b2d7fb" stroke-width="1.1" opacity="0.64"/><line x1="13.6" y1="170.5" x2="-10.7" y2="236.5" stroke="#6aa8ee" stroke-width="2.6" opacity="0.62"/><line x1="16.0" y1="170.5" x2="-8.3" y2="236.5" stroke="#b2d7fb" stroke-width="1.1" opacity="0.50"/><line x1="-11.7" y1="239.3" x2="-37.2" y2="308.7" stroke="#6aa8ee" stroke-width="2.6" opacity="0.78"/><line x1="-9.3" y1="239.3" x2="-34.9" y2="308.7" stroke="#b2d7fb" stroke-width="1.1" opacity="0.63"/><line x1="91.3" y1="-22.9" x2="59.2" y2="61.3" stroke="#6aa8ee" stroke-width="2.3" opacity="0.94"/><line x1="93.5" y1="-22.9" x2="61.4" y2="61.3" stroke="#b2d7fb" stroke-width="1.1" opacity="0.75"/><line x1="57.7" y1="65.3" x2="27.5" y2="144.4" stroke="#6aa8ee" stroke-width="2.3" opacity="0.84"/><line x1="59.9" y1="65.3" x2="29.7" y2="144.4" stroke="#b2d7fb" stroke-width="1.1" opacity="0.67"/><line x1="22.1" y1="158.6" x2="-13.9" y2="253.0" stroke="#6aa8ee" stroke-width="2.3" opacity="0.82"/><line x1="24.3" y1="158.6" x2="-11.7" y2="253.0" stroke="#b2d7fb" stroke-width="1.1" opacity="0.66"/><line x1="89.8" y1="-0.1" x2="56.6" y2="90.9" stroke="#6aa8ee" stroke-width="2.7" opacity="0.67"/><line x1="92.1" y1="-0.1" x2="58.9" y2="90.9" stroke="#b2d7fb" stroke-width="1.1" opacity="0.53"/><line x1="51.3" y1="105.1" x2="39.6" y2="137.3" stroke="#6aa8ee" stroke-width="2.7" opacity="0.65"/><line x1="53.7" y1="105.1" x2="42.0" y2="137.3" stroke="#b2d7fb" stroke-width="1.1" opacity="0.52"/><line x1="35.7" y1="148.1" x2="14.1" y2="207.2" stroke="#6aa8ee" stroke-width="2.7" opacity="0.85"/><line x1="38.0" y1="148.1" x2="16.5" y2="207.2" stroke="#b2d7fb" stroke-width="1.1" opacity="0.68"/><line x1="9.1" y1="220.8" x2="-14.6" y2="285.7" stroke="#6aa8ee" stroke-width="2.7" opacity="0.87"/><line x1="11.5" y1="220.8" x2="-12.2" y2="285.7" stroke="#b2d7fb" stroke-width="1.1" opacity="0.69"/><line x1="106.5" y1="-26.8" x2="74.0" y2="57.6" stroke="#6aa8ee" stroke-width="2.4" opacity="0.93"/><line x1="108.8" y1="-26.8" x2="76.2" y2="57.6" stroke="#b2d7fb" stroke-width="1.1" opacity="0.75"/><line x1="67.8" y1="73.8" x2="55.4" y2="105.8" stroke="#6aa8ee" stroke-width="2.4" opacity="0.62"/><line x1="70.0" y1="73.8" x2="57.6" y2="105.8" stroke="#b2d7fb" stroke-width="1.1" opacity="0.50"/><line x1="53.0" y1="112.1" x2="9.9" y2="223.9" stroke="#6aa8ee" stroke-width="2.4" opacity="0.75"/><line x1="55.2" y1="112.1" x2="12.1" y2="223.9" stroke="#b2d7fb" stroke-width="1.1" opacity="0.60"/><line x1="8.3" y1="227.9" x2="-21.9" y2="306.1" stroke="#6aa8ee" stroke-width="2.4" opacity="0.80"/><line x1="10.5" y1="227.9" x2="-19.6" y2="306.1" stroke="#b2d7fb" stroke-width="1.1" opacity="0.64"/><line x1="106.3" y1="-11.5" x2="93.8" y2="19.3" stroke="#6aa8ee" stroke-width="3.0" opacity="0.85"/><line x1="108.9" y1="-11.5" x2="96.4" y2="19.3" stroke="#b2d7fb" stroke-width="1.1" opacity="0.68"/><line x1="92.2" y1="23.3" x2="79.3" y2="55.2" stroke="#6aa8ee" stroke-width="3.0" opacity="0.77"/><line x1="94.7" y1="23.3" x2="81.8" y2="55.2" stroke="#b2d7fb" stroke-width="1.1" opacity="0.61"/><line x1="78.4" y1="57.4" x2="64.5" y2="91.5" stroke="#6aa8ee" stroke-width="3.0" opacity="0.74"/><line x1="80.9" y1="57.4" x2="67.1" y2="91.5" stroke="#b2d7fb" stroke-width="1.1" opacity="0.59"/><line x1="60.7" y1="101.0" x2="45.2" y2="139.2" stroke="#6aa8ee" stroke-width="3.0" opacity="0.93"/><line x1="63.3" y1="101.0" x2="47.8" y2="139.2" stroke="#b2d7fb" stroke-width="1.1" opacity="0.75"/><line x1="38.9" y1="154.9" x2="4.1" y2="240.7" stroke="#6aa8ee" stroke-width="3.0" opacity="0.81"/><line x1="41.5" y1="154.9" x2="6.7" y2="240.7" stroke="#b2d7fb" stroke-width="1.1" opacity="0.64"/><line x1="1.3" y1="247.8" x2="-58.6" y2="395.7" stroke="#6aa8ee" stroke-width="3.0" opacity="0.64"/><line x1="3.9" y1="247.8" x2="-56.1" y2="395.7" stroke="#b2d7fb" stroke-width="1.1" opacity="0.51"/><line x1="113.9" y1="-17.7" x2="82.0" y2="57.2" stroke="#6aa8ee" stroke-width="2.6" opacity="0.91"/><line x1="116.3" y1="-17.7" x2="84.3" y2="57.2" stroke="#b2d7fb" stroke-width="1.1" opacity="0.73"/><line x1="79.4" y1="63.3" x2="26.5" y2="187.2" stroke="#6aa8ee" stroke-width="2.6" opacity="0.85"/><line x1="81.7" y1="63.3" x2="28.9" y2="187.2" stroke="#b2d7fb" stroke-width="1.1" opacity="0.68"/><line x1="22.6" y1="196.4" x2="-7.5" y2="267.1" stroke="#6aa8ee" stroke-width="2.6" opacity="0.75"/><line x1="25.0" y1="196.4" x2="-5.2" y2="267.1" stroke="#b2d7fb" stroke-width="1.1" opacity="0.60"/><line x1="119.9" y1="-20.9" x2="71.0" y2="100.7" stroke="#6aa8ee" stroke-width="2.3" opacity="0.76"/><line x1="122.1" y1="-20.9" x2="73.2" y2="100.7" stroke="#b2d7fb" stroke-width="1.1" opacity="0.61"/><line x1="67.1" y1="110.3" x2="12.8" y2="245.2" stroke="#6aa8ee" stroke-width="2.3" opacity="0.76"/><line x1="69.3" y1="110.3" x2="15.0" y2="245.2" stroke="#b2d7fb" stroke-width="1.1" opacity="0.61"/><line x1="9.6" y1="253.2" x2="-45.6" y2="390.5" stroke="#6aa8ee" stroke-width="2.3" opacity="0.94"/><line x1="11.8" y1="253.2" x2="-43.4" y2="390.5" stroke="#b2d7fb" stroke-width="1.1" opacity="0.75"/><line x1="125.5" y1="-21.1" x2="78.5" y2="94.4" stroke="#6aa8ee" stroke-width="3.2" opacity="0.93"/><line x1="128.1" y1="-21.1" x2="81.1" y2="94.4" stroke="#b2d7fb" stroke-width="1.1" opacity="0.75"/><line x1="73.4" y1="106.9" x2="29.2" y2="215.5" stroke="#6aa8ee" stroke-width="3.2" opacity="0.75"/><line x1="76.0" y1="106.9" x2="31.8" y2="215.5" stroke="#b2d7fb" stroke-width="1.1" opacity="0.60"/><line x1="24.1" y1="227.9" x2="2.4" y2="281.2" stroke="#6aa8ee" stroke-width="3.2" opacity="0.87"/><line x1="26.8" y1="227.9" x2="5.1" y2="281.2" stroke="#b2d7fb" stroke-width="1.1" opacity="0.70"/><line x1="135.4" y1="-29.5" x2="106.5" y2="47.5" stroke="#6aa8ee" stroke-width="3.1" opacity="0.87"/><line x1="138.0" y1="-29.5" x2="109.2" y2="47.5" stroke="#b2d7fb" stroke-width="1.1" opacity="0.69"/><line x1="104.2" y1="53.7" x2="66.2" y2="155.4" stroke="#6aa8ee" stroke-width="3.1" opacity="0.68"/><line x1="106.9" y1="53.7" x2="68.8" y2="155.4" stroke="#b2d7fb" stroke-width="1.1" opacity="0.54"/><line x1="63.1" y1="163.7" x2="7.2" y2="312.9" stroke="#6aa8ee" stroke-width="3.1" opacity="0.67"/><line x1="65.7" y1="163.7" x2="9.8" y2="312.9" stroke="#b2d7fb" stroke-width="1.1" opacity="0.54"/><line x1="130.5" y1="-4.9" x2="101.0" y2="69.0" stroke="#6aa8ee" stroke-width="3.3" opacity="0.81"/><line x1="133.2" y1="-4.9" x2="103.8" y2="69.0" stroke="#b2d7fb" stroke-width="1.1" opacity="0.65"/><line x1="95.7" y1="82.4" x2="47.8" y2="202.6" stroke="#6aa8ee" stroke-width="3.3" opacity="0.86"/><line x1="98.5" y1="82.4" x2="50.6" y2="202.6" stroke="#b2d7fb" stroke-width="1.1" opacity="0.69"/><line x1="43.3" y1="213.9" x2="20.9" y2="270.3" stroke="#6aa8ee" stroke-width="3.3" opacity="0.85"/><line x1="46.1" y1="213.9" x2="23.6" y2="270.3" stroke="#b2d7fb" stroke-width="1.1" opacity="0.68"/><line x1="137.3" y1="-6.6" x2="108.6" y2="59.0" stroke="#6aa8ee" stroke-width="1.7" opacity="0.85"/><line x1="139.2" y1="-6.6" x2="110.4" y2="59.0" stroke="#b2d7fb" stroke-width="1.1" opacity="0.68"/><line x1="101.0" y1="76.2" x2="75.0" y2="135.5" stroke="#6aa8ee" stroke-width="1.7" opacity="0.80"/><line x1="102.8" y1="76.2" x2="76.8" y2="135.5" stroke="#b2d7fb" stroke-width="1.1" opacity="0.64"/><line x1="70.4" y1="146.0" x2="32.3" y2="232.9" stroke="#6aa8ee" stroke-width="1.7" opacity="0.66"/><line x1="72.2" y1="146.0" x2="34.1" y2="232.9" stroke="#b2d7fb" stroke-width="1.1" opacity="0.53"/><line x1="27.0" y1="244.9" x2="-33.0" y2="381.6" stroke="#6aa8ee" stroke-width="1.7" opacity="0.83"/><line x1="28.8" y1="244.9" x2="-31.1" y2="381.6" stroke="#b2d7fb" stroke-width="1.1" opacity="0.67"/><line x1="145.8" y1="-11.8" x2="114.2" y2="70.7" stroke="#6aa8ee" stroke-width="1.7" opacity="0.79"/><line x1="147.6" y1="-11.8" x2="116.1" y2="70.7" stroke="#b2d7fb" stroke-width="1.1" opacity="0.63"/><line x1="107.4" y1="88.6" x2="70.7" y2="184.8" stroke="#6aa8ee" stroke-width="1.7" opacity="0.93"/><line x1="109.3" y1="88.6" x2="72.5" y2="184.8" stroke="#b2d7fb" stroke-width="1.1" opacity="0.75"/><line x1="67.8" y1="192.4" x2="22.0" y2="312.3" stroke="#6aa8ee" stroke-width="1.7" opacity="0.63"/><line x1="69.6" y1="192.4" x2="23.8" y2="312.3" stroke="#b2d7fb" stroke-width="1.1" opacity="0.50"/><line x1="155.3" y1="-18.6" x2="131.1" y2="40.6" stroke="#6aa8ee" stroke-width="3.4" opacity="0.73"/><line x1="158.1" y1="-18.6" x2="133.8" y2="40.6" stroke="#b2d7fb" stroke-width="1.1" opacity="0.58"/><line x1="126.7" y1="51.2" x2="115.3" y2="79.2" stroke="#6aa8ee" stroke-width="3.4" opacity="0.73"/><line x1="129.5" y1="51.2" x2="118.0" y2="79.2" stroke="#b2d7fb" stroke-width="1.1" opacity="0.58"/><line x1="110.2" y1="91.7" x2="92.3" y2="135.3" stroke="#6aa8ee" stroke-width="3.4" opacity="0.71"/><line x1="112.9" y1="91.7" x2="95.1" y2="135.3" stroke="#b2d7fb" stroke-width="1.1" opacity="0.57"/><line x1="85.8" y1="151.3" x2="27.9" y2="293.0" stroke="#6aa8ee" stroke-width="3.4" opacity="0.69"/><line x1="88.6" y1="151.3" x2="30.6" y2="293.0" stroke="#b2d7fb" stroke-width="1.1" opacity="0.55"/><line x1="154.8" y1="-7.8" x2="134.6" y2="50.2" stroke="#6aa8ee" stroke-width="3.3" opacity="0.77"/><line x1="157.6" y1="-7.8" x2="137.3" y2="50.2" stroke="#b2d7fb" stroke-width="1.1" opacity="0.62"/><line x1="130.0" y1="63.3" x2="120.1" y2="91.9" stroke="#6aa8ee" stroke-width="3.3" opacity="0.89"/><line x1="132.7" y1="63.3" x2="122.8" y2="91.9" stroke="#b2d7fb" stroke-width="1.1" opacity="0.71"/><line x1="114.6" y1="107.6" x2="96.7" y2="159.0" stroke="#6aa8ee" stroke-width="3.3" opacity="0.85"/><line x1="117.3" y1="107.6" x2="99.4" y2="159.0" stroke="#b2d7fb" stroke-width="1.1" opacity="0.68"/><line x1="92.1" y1="172.2" x2="68.7" y2="239.3" stroke="#6aa8ee" stroke-width="3.3" opacity="0.91"/><line x1="94.8" y1="172.2" x2="71.4" y2="239.3" stroke="#b2d7fb" stroke-width="1.1" opacity="0.73"/><line x1="66.8" y1="244.8" x2="37.4" y2="329.1" stroke="#6aa8ee" stroke-width="3.3" opacity="0.71"/><line x1="69.5" y1="244.8" x2="40.1" y2="329.1" stroke="#b2d7fb" stroke-width="1.1" opacity="0.57"/><line x1="159.1" y1="-0.4" x2="138.1" y2="52.5" stroke="#6aa8ee" stroke-width="2.8" opacity="0.68"/><line x1="161.6" y1="-0.4" x2="140.6" y2="52.5" stroke="#b2d7fb" stroke-width="1.1" opacity="0.54"/><line x1="133.4" y1="64.5" x2="116.0" y2="108.2" stroke="#6aa8ee" stroke-width="2.8" opacity="0.94"/><line x1="135.8" y1="64.5" x2="118.4" y2="108.2" stroke="#b2d7fb" stroke-width="1.1" opacity="0.75"/><line x1="113.0" y1="115.7" x2="81.3" y2="195.7" stroke="#6aa8ee" stroke-width="2.8" opacity="0.75"/><line x1="115.5" y1="115.7" x2="83.7" y2="195.7" stroke="#b2d7fb" stroke-width="1.1" opacity="0.60"/><line x1="75.2" y1="210.9" x2="19.9" y2="350.4" stroke="#6aa8ee" stroke-width="2.8" opacity="0.84"/><line x1="77.7" y1="210.9" x2="22.3" y2="350.4" stroke="#b2d7fb" stroke-width="1.1" opacity="0.67"/><line x1="165.6" y1="-3.5" x2="110.6" y2="130.5" stroke="#6aa8ee" stroke-width="1.9" opacity="0.68"/><line x1="167.6" y1="-3.5" x2="112.5" y2="130.5" stroke="#b2d7fb" stroke-width="1.1" opacity="0.54"/><line x1="107.4" y1="138.3" x2="85.4" y2="191.9" stroke="#6aa8ee" stroke-width="1.9" opacity="0.85"/><line x1="109.3" y1="138.3" x2="87.3" y2="191.9" stroke="#b2d7fb" stroke-width="1.1" opacity="0.68"/><line x1="84.2" y1="194.7" x2="38.3" y2="306.7" stroke="#6aa8ee" stroke-width="1.9" opacity="0.62"/><line x1="86.2" y1="194.7" x2="40.2" y2="306.7" stroke="#b2d7fb" stroke-width="1.1" opacity="0.50"/><line x1="181.5" y1="-28.7" x2="154.0" y2="40.5" stroke="#6aa8ee" stroke-width="1.6" opacity="0.94"/><line x1="183.3" y1="-28.7" x2="155.7" y2="40.5" stroke="#b2d7fb" stroke-width="1.1" opacity="0.76"/><line x1="149.3" y1="52.1" x2="96.5" y2="184.9" stroke="#6aa8ee" stroke-width="1.6" opacity="0.62"/><line x1="151.1" y1="52.1" x2="98.2" y2="184.9" stroke="#b2d7fb" stroke-width="1.1" opacity="0.50"/><line x1="95.0" y1="188.5" x2="84.0" y2="216.1" stroke="#6aa8ee" stroke-width="1.6" opacity="0.84"/><line x1="96.8" y1="188.5" x2="85.8" y2="216.1" stroke="#b2d7fb" stroke-width="1.1" opacity="0.68"/><line x1="82.1" y1="220.9" x2="58.6" y2="280.0" stroke="#6aa8ee" stroke-width="1.6" opacity="0.83"/><line x1="83.9" y1="220.9" x2="60.3" y2="280.0" stroke="#b2d7fb" stroke-width="1.1" opacity="0.67"/><line x1="180.3" y1="-13.2" x2="153.4" y2="56.3" stroke="#6aa8ee" stroke-width="2.1" opacity="0.73"/><line x1="182.3" y1="-13.2" x2="155.5" y2="56.3" stroke="#b2d7fb" stroke-width="1.1" opacity="0.58"/><line x1="151.1" y1="62.3" x2="127.3" y2="123.8" stroke="#6aa8ee" stroke-width="2.1" opacity="0.69"/><line x1="153.2" y1="62.3" x2="129.4" y2="123.8" stroke="#b2d7fb" stroke-width="1.1" opacity="0.55"/><line x1="126.5" y1="126.1" x2="101.8" y2="189.9" stroke="#6aa8ee" stroke-width="2.1" opacity="0.81"/><line x1="128.5" y1="126.1" x2="103.8" y2="189.9" stroke="#b2d7fb" stroke-width="1.1" opacity="0.65"/><line x1="99.3" y1="196.2" x2="84.2" y2="235.3" stroke="#6aa8ee" stroke-width="2.1" opacity="0.90"/><line x1="101.4" y1="196.2" x2="86.3" y2="235.3" stroke="#b2d7fb" stroke-width="1.1" opacity="0.72"/><line x1="80.5" y1="244.8" x2="46.1" y2="333.8" stroke="#6aa8ee" stroke-width="2.1" opacity="0.71"/><line x1="82.6" y1="244.8" x2="48.2" y2="333.8" stroke="#b2d7fb" stroke-width="1.1" opacity="0.57"/><line x1="185.6" y1="-9.2" x2="150.3" y2="78.3" stroke="#6aa8ee" stroke-width="3.0" opacity="0.74"/><line x1="188.1" y1="-9.2" x2="152.9" y2="78.3" stroke="#b2d7fb" stroke-width="1.1" opacity="0.60"/><line x1="147.0" y1="86.6" x2="111.6" y2="174.6" stroke="#6aa8ee" stroke-width="3.0" opacity="0.76"/><line x1="149.6" y1="86.6" x2="114.2" y2="174.6" stroke="#b2d7fb" stroke-width="1.1" opacity="0.61"/><line x1="107.4" y1="185.1" x2="70.6" y2="276.7" stroke="#6aa8ee" stroke-width="3.0" opacity="0.88"/><line x1="110.0" y1="185.1" x2="73.1" y2="276.7" stroke="#b2d7fb" stroke-width="1.1" opacity="0.70"/><line x1="196.6" y1="-29.0" x2="154.0" y2="95.5" stroke="#6aa8ee" stroke-width="2.1" opacity="0.82"/><line x1="198.6" y1="-29.0" x2="156.0" y2="95.5" stroke="#b2d7fb" stroke-width="1.1" opacity="0.65"/><line x1="151.7" y1="102.1" x2="135.0" y2="151.0" stroke="#6aa8ee" stroke-width="2.1" opacity="0.90"/><line x1="153.8" y1="102.1" x2="137.0" y2="151.0" stroke="#b2d7fb" stroke-width="1.1" opacity="0.72"/><line x1="129.7" y1="166.4" x2="91.9" y2="276.8" stroke="#6aa8ee" stroke-width="2.1" opacity="0.84"/><line x1="131.8" y1="166.4" x2="94.0" y2="276.8" stroke="#b2d7fb" stroke-width="1.1" opacity="0.67"/><line x1="193.6" y1="-3.6" x2="137.0" y2="145.3" stroke="#6aa8ee" stroke-width="2.7" opacity="0.92"/><line x1="196.0" y1="-3.6" x2="139.4" y2="145.3" stroke="#b2d7fb" stroke-width="1.1" opacity="0.74"/><line x1="131.2" y1="160.7" x2="118.2" y2="195.0" stroke="#6aa8ee" stroke-width="2.7" opacity="0.69"/><line x1="133.6" y1="160.7" x2="120.6" y2="195.0" stroke="#b2d7fb" stroke-width="1.1" opacity="0.55"/><line x1="111.5" y1="212.5" x2="76.2" y2="305.5" stroke="#6aa8ee" stroke-width="2.7" opacity="0.78"/><line x1="113.9" y1="212.5" x2="78.6" y2="305.5" stroke="#b2d7fb" stroke-width="1.1" opacity="0.62"/><line x1="210.1" y1="-27.7" x2="151.7" y2="121.4" stroke="#6aa8ee" stroke-width="3.8" opacity="0.60"/><line x1="213.1" y1="-27.7" x2="154.7" y2="121.4" stroke="#b2d7fb" stroke-width="1.1" opacity="0.48"/><line x1="150.0" y1="125.8" x2="121.1" y2="199.5" stroke="#6aa8ee" stroke-width="3.8" opacity="0.82"/><line x1="153.0" y1="125.8" x2="124.1" y2="199.5" stroke="#b2d7fb" stroke-width="1.1" opacity="0.66"/><line x1="119.6" y1="203.3" x2="82.3" y2="298.6" stroke="#6aa8ee" stroke-width="3.8" opacity="0.93"/><line x1="122.6" y1="203.3" x2="85.3" y2="298.6" stroke="#b2d7fb" stroke-width="1.1" opacity="0.74"/><line x1="215.8" y1="-24.8" x2="182.7" y2="58.2" stroke="#6aa8ee" stroke-width="2.8" opacity="0.92"/><line x1="218.3" y1="-24.8" x2="185.1" y2="58.2" stroke="#b2d7fb" stroke-width="1.1" opacity="0.73"/><line x1="177.6" y1="71.0" x2="156.8" y2="123.1" stroke="#6aa8ee" stroke-width="2.8" opacity="0.76"/><line x1="180.0" y1="71.0" x2="159.2" y2="123.1" stroke="#b2d7fb" stroke-width="1.1" opacity="0.61"/><line x1="152.5" y1="133.8" x2="125.7" y2="200.9" stroke="#6aa8ee" stroke-width="2.8" opacity="0.80"/><line x1="154.9" y1="133.8" x2="128.2" y2="200.9" stroke="#b2d7fb" stroke-width="1.1" opacity="0.64"/><line x1="120.9" y1="213.0" x2="110.0" y2="240.2" stroke="#6aa8ee" stroke-width="2.8" opacity="0.68"/><line x1="123.3" y1="213.0" x2="112.5" y2="240.2" stroke="#b2d7fb" stroke-width="1.1" opacity="0.54"/><line x1="105.0" y1="252.7" x2="84.4" y2="304.5" stroke="#6aa8ee" stroke-width="2.8" opacity="0.63"/><line x1="107.5" y1="252.7" x2="86.8" y2="304.5" stroke="#b2d7fb" stroke-width="1.1" opacity="0.50"/><line x1="222.8" y1="-27.0" x2="177.2" y2="77.6" stroke="#6aa8ee" stroke-width="2.7" opacity="0.69"/><line x1="225.2" y1="-27.0" x2="179.7" y2="77.6" stroke="#b2d7fb" stroke-width="1.1" opacity="0.55"/><line x1="170.7" y1="92.7" x2="120.4" y2="208.2" stroke="#6aa8ee" stroke-width="2.7" opacity="0.87"/><line x1="173.1" y1="92.7" x2="122.8" y2="208.2" stroke="#b2d7fb" stroke-width="1.1" opacity="0.69"/><line x1="119.1" y1="211.1" x2="106.3" y2="240.4" stroke="#6aa8ee" stroke-width="2.7" opacity="0.88"/><line x1="121.5" y1="211.1" x2="108.7" y2="240.4" stroke="#b2d7fb" stroke-width="1.1" opacity="0.70"/><line x1="104.5" y1="244.6" x2="82.6" y2="294.9" stroke="#6aa8ee" stroke-width="2.7" opacity="0.61"/><line x1="106.9" y1="244.6" x2="85.0" y2="294.9" stroke="#b2d7fb" stroke-width="1.1" opacity="0.49"/><line x1="226.4" y1="-22.2" x2="170.4" y2="106.3" stroke="#6aa8ee" stroke-width="2.1" opacity="0.66"/><line x1="228.5" y1="-22.2" x2="172.5" y2="106.3" stroke="#b2d7fb" stroke-width="1.1" opacity="0.53"/><line x1="165.1" y1="118.4" x2="120.7" y2="220.3" stroke="#6aa8ee" stroke-width="2.1" opacity="0.93"/><line x1="167.2" y1="118.4" x2="122.8" y2="220.3" stroke="#b2d7fb" stroke-width="1.1" opacity="0.74"/><line x1="119.5" y1="223.0" x2="78.0" y2="318.4" stroke="#6aa8ee" stroke-width="2.1" opacity="0.73"/><line x1="121.6" y1="223.0" x2="80.1" y2="318.4" stroke="#b2d7fb" stroke-width="1.1" opacity="0.59"/><line x1="227.9" y1="-15.1" x2="167.8" y2="130.9" stroke="#6aa8ee" stroke-width="1.8" opacity="0.68"/><line x1="229.8" y1="-15.1" x2="169.7" y2="130.9" stroke="#b2d7fb" stroke-width="1.1" opacity="0.55"/><line x1="165.1" y1="137.4" x2="107.6" y2="277.0" stroke="#6aa8ee" stroke-width="1.8" opacity="0.84"/><line x1="167.0" y1="137.4" x2="109.5" y2="277.0" stroke="#b2d7fb" stroke-width="1.1" opacity="0.67"/><line x1="228.0" y1="-4.7" x2="187.0" y2="107.9" stroke="#6aa8ee" stroke-width="2.1" opacity="0.94"/><line x1="230.0" y1="-4.7" x2="189.1" y2="107.9" stroke="#b2d7fb" stroke-width="1.1" opacity="0.75"/><line x1="182.4" y1="120.6" x2="144.8" y2="224.1" stroke="#6aa8ee" stroke-width="2.1" opacity="0.73"/><line x1="184.4" y1="120.6" x2="146.8" y2="224.1" stroke="#b2d7fb" stroke-width="1.1" opacity="0.59"/><line x1="139.9" y1="237.6" x2="108.3" y2="324.3" stroke="#6aa8ee" stroke-width="2.1" opacity="0.62"/><line x1="141.9" y1="237.6" x2="110.4" y2="324.3" stroke="#b2d7fb" stroke-width="1.1" opacity="0.50"/><line x1="243.1" y1="-29.2" x2="185.0" y2="118.7" stroke="#6aa8ee" stroke-width="1.5" opacity="0.73"/><line x1="244.8" y1="-29.2" x2="186.7" y2="118.7" stroke="#b2d7fb" stroke-width="1.1" opacity="0.58"/><line x1="182.1" y1="126.0" x2="165.0" y2="169.5" stroke="#6aa8ee" stroke-width="1.5" opacity="0.81"/><line x1="183.8" y1="126.0" x2="166.7" y2="169.5" stroke="#b2d7fb" stroke-width="1.1" opacity="0.65"/><line x1="158.4" y1="186.2" x2="139.8" y2="233.7" stroke="#6aa8ee" stroke-width="1.5" opacity="0.78"/><line x1="160.2" y1="186.2" x2="141.5" y2="233.7" stroke="#b2d7fb" stroke-width="1.1" opacity="0.62"/><line x1="135.8" y1="243.7" x2="88.4" y2="364.4" stroke="#6aa8ee" stroke-width="1.5" opacity="0.80"/><line x1="137.5" y1="243.7" x2="90.1" y2="364.4" stroke="#b2d7fb" stroke-width="1.1" opacity="0.64"/><line x1="238.0" y1="-4.1" x2="225.9" y2="25.1" stroke="#6aa8ee" stroke-width="1.5" opacity="0.67"/><line x1="239.7" y1="-4.1" x2="227.7" y2="25.1" stroke="#b2d7fb" stroke-width="1.1" opacity="0.53"/><line x1="222.0" y1="34.6" x2="168.2" y2="165.1" stroke="#6aa8ee" stroke-width="1.5" opacity="0.82"/><line x1="223.8" y1="34.6" x2="169.9" y2="165.1" stroke="#b2d7fb" stroke-width="1.1" opacity="0.65"/><line x1="162.4" y1="179.0" x2="112.9" y2="299.2" stroke="#6aa8ee" stroke-width="1.5" opacity="0.85"/><line x1="164.2" y1="179.0" x2="114.6" y2="299.2" stroke="#b2d7fb" stroke-width="1.1" opacity="0.68"/><line x1="253.4" y1="-28.9" x2="243.3" y2="-0.3" stroke="#6aa8ee" stroke-width="1.7" opacity="0.91"/><line x1="255.3" y1="-28.9" x2="245.2" y2="-0.3" stroke="#b2d7fb" stroke-width="1.1" opacity="0.73"/><line x1="240.4" y1="7.8" x2="227.7" y2="43.6" stroke="#6aa8ee" stroke-width="1.7" opacity="0.62"/><line x1="242.3" y1="7.8" x2="229.6" y2="43.6" stroke="#b2d7fb" stroke-width="1.1" opacity="0.49"/><line x1="222.2" y1="59.1" x2="186.6" y2="159.3" stroke="#6aa8ee" stroke-width="1.7" opacity="0.92"/><line x1="224.1" y1="59.1" x2="188.5" y2="159.3" stroke="#b2d7fb" stroke-width="1.1" opacity="0.74"/><line x1="185.7" y1="161.9" x2="171.9" y2="201.0" stroke="#6aa8ee" stroke-width="1.7" opacity="0.70"/><line x1="187.6" y1="161.9" x2="173.7" y2="201.0" stroke="#b2d7fb" stroke-width="1.1" opacity="0.56"/><line x1="170.1" y1="206.0" x2="156.2" y2="245.1" stroke="#6aa8ee" stroke-width="1.7" opacity="0.67"/><line x1="171.9" y1="206.0" x2="158.1" y2="245.1" stroke="#b2d7fb" stroke-width="1.1" opacity="0.54"/><line x1="151.9" y1="257.3" x2="135.6" y2="303.3" stroke="#6aa8ee" stroke-width="1.7" opacity="0.66"/><line x1="153.8" y1="257.3" x2="137.4" y2="303.3" stroke="#b2d7fb" stroke-width="1.1" opacity="0.53"/><line x1="253.7" y1="-14.8" x2="227.6" y2="58.7" stroke="#6aa8ee" stroke-width="2.7" opacity="0.77"/><line x1="256.1" y1="-14.8" x2="230.1" y2="58.7" stroke="#b2d7fb" stroke-width="1.1" opacity="0.61"/><line x1="226.7" y1="61.4" x2="190.5" y2="163.3" stroke="#6aa8ee" stroke-width="2.7" opacity="0.67"/><line x1="229.1" y1="61.4" x2="193.0" y2="163.3" stroke="#b2d7fb" stroke-width="1.1" opacity="0.53"/><line x1="187.9" y1="170.6" x2="178.6" y2="196.8" stroke="#6aa8ee" stroke-width="2.7" opacity="0.91"/><line x1="190.3" y1="170.6" x2="181.0" y2="196.8" stroke="#b2d7fb" stroke-width="1.1" opacity="0.73"/><line x1="174.6" y1="208.2" x2="148.3" y2="282.2" stroke="#6aa8ee" stroke-width="2.7" opacity="0.79"/><line x1="177.0" y1="208.2" x2="150.7" y2="282.2" stroke="#b2d7fb" stroke-width="1.1" opacity="0.63"/><line x1="260.1" y1="-18.8" x2="217.2" y2="94.5" stroke="#6aa8ee" stroke-width="3.1" opacity="0.92"/><line x1="262.7" y1="-18.8" x2="219.8" y2="94.5" stroke="#b2d7fb" stroke-width="1.1" opacity="0.73"/><line x1="216.2" y1="97.2" x2="193.3" y2="157.7" stroke="#6aa8ee" stroke-width="3.1" opacity="0.70"/><line x1="218.8" y1="97.2" x2="195.9" y2="157.7" stroke="#b2d7fb" stroke-width="1.1" opacity="0.56"/><line x1="188.0" y1="171.7" x2="141.4" y2="294.8" stroke="#6aa8ee" stroke-width="3.1" opacity="0.84"/><line x1="190.6" y1="171.7" x2="144.0" y2="294.8" stroke="#b2d7fb" stroke-width="1.1" opacity="0.68"/><line x1="260.3" y1="-7.0" x2="245.4" y2="32.1" stroke="#6aa8ee" stroke-width="3.4" opacity="0.94"/><line x1="263.1" y1="-7.0" x2="248.2" y2="32.1" stroke="#b2d7fb" stroke-width="1.1" opacity="0.75"/><line x1="240.2" y1="45.9" x2="189.6" y2="179.1" stroke="#6aa8ee" stroke-width="3.4" opacity="0.73"/><line x1="243.0" y1="45.9" x2="192.4" y2="179.1" stroke="#b2d7fb" stroke-width="1.1" opacity="0.58"/><line x1="185.2" y1="190.8" x2="130.3" y2="335.7" stroke="#6aa8ee" stroke-width="3.4" opacity="0.91"/><line x1="188.0" y1="190.8" x2="133.1" y2="335.7" stroke="#b2d7fb" stroke-width="1.1" opacity="0.73"/><line x1="269.3" y1="-10.3" x2="205.5" y2="134.7" stroke="#6aa8ee" stroke-width="3.4" opacity="0.65"/><line x1="272.0" y1="-10.3" x2="208.2" y2="134.7" stroke="#b2d7fb" stroke-width="1.1" opacity="0.52"/><line x1="201.7" y1="143.2" x2="159.7" y2="238.7" stroke="#6aa8ee" stroke-width="3.4" opacity="0.65"/><line x1="204.5" y1="143.2" x2="162.5" y2="238.7" stroke="#b2d7fb" stroke-width="1.1" opacity="0.52"/><line x1="153.3" y1="253.2" x2="138.9" y2="285.9" stroke="#6aa8ee" stroke-width="3.4" opacity="0.82"/><line x1="156.1" y1="253.2" x2="141.7" y2="285.9" stroke="#b2d7fb" stroke-width="1.1" opacity="0.66"/><line x1="276.5" y1="-16.6" x2="223.5" y2="115.6" stroke="#6aa8ee" stroke-width="1.8" opacity="0.95"/><line x1="278.4" y1="-16.6" x2="225.4" y2="115.6" stroke="#b2d7fb" stroke-width="1.1" opacity="0.76"/><line x1="221.0" y1="121.8" x2="192.7" y2="192.5" stroke="#6aa8ee" stroke-width="1.8" opacity="0.84"/><line x1="223.0" y1="121.8" x2="194.6" y2="192.5" stroke="#b2d7fb" stroke-width="1.1" opacity="0.67"/><line x1="190.7" y1="197.5" x2="138.2" y2="328.7" stroke="#6aa8ee" stroke-width="1.8" opacity="0.67"/><line x1="192.6" y1="197.5" x2="140.1" y2="328.7" stroke="#b2d7fb" stroke-width="1.1" opacity="0.54"/><line x1="285.2" y1="-29.9" x2="262.8" y2="36.1" stroke="#6aa8ee" stroke-width="1.4" opacity="0.70"/><line x1="286.9" y1="-29.9" x2="264.4" y2="36.1" stroke="#b2d7fb" stroke-width="1.1" opacity="0.56"/><line x1="256.7" y1="53.9" x2="221.1" y2="158.7" stroke="#6aa8ee" stroke-width="1.4" opacity="0.62"/><line x1="258.3" y1="53.9" x2="222.7" y2="158.7" stroke="#b2d7fb" stroke-width="1.1" opacity="0.50"/><line x1="216.5" y1="172.1" x2="198.1" y2="226.2" stroke="#6aa8ee" stroke-width="1.4" opacity="0.77"/><line x1="218.1" y1="172.1" x2="199.8" y2="226.2" stroke="#b2d7fb" stroke-width="1.1" opacity="0.61"/><line x1="193.5" y1="239.7" x2="148.6" y2="371.8" stroke="#6aa8ee" stroke-width="1.4" opacity="0.93"/><line x1="195.1" y1="239.7" x2="150.2" y2="371.8" stroke="#b2d7fb" stroke-width="1.1" opacity="0.74"/><line x1="283.1" y1="-7.8" x2="251.6" y2="75.1" stroke="#6aa8ee" stroke-width="2.1" opacity="0.84"/><line x1="285.2" y1="-7.8" x2="253.7" y2="75.1" stroke="#b2d7fb" stroke-width="1.1" opacity="0.67"/><line x1="249.9" y1="79.6" x2="203.3" y2="202.4" stroke="#6aa8ee" stroke-width="2.1" opacity="0.94"/><line x1="252.0" y1="79.6" x2="205.4" y2="202.4" stroke="#b2d7fb" stroke-width="1.1" opacity="0.75"/><line x1="201.3" y1="207.7" x2="162.5" y2="309.7" stroke="#6aa8ee" stroke-width="2.1" opacity="0.66"/><line x1="203.4" y1="207.7" x2="164.6" y2="309.7" stroke="#b2d7fb" stroke-width="1.1" opacity="0.53"/><line x1="290.2" y1="-12.8" x2="251.0" y2="96.5" stroke="#6aa8ee" stroke-width="3.1" opacity="0.94"/><line x1="292.8" y1="-12.8" x2="253.7" y2="96.5" stroke="#b2d7fb" stroke-width="1.1" opacity="0.75"/><line x1="250.0" y1="99.4" x2="236.6" y2="136.7" stroke="#6aa8ee" stroke-width="3.1" opacity="0.61"/><line x1="252.6" y1="99.4" x2="239.2" y2="136.7" stroke="#b2d7fb" stroke-width="1.1" opacity="0.49"/><line x1="233.3" y1="146.1" x2="187.4" y2="274.1" stroke="#6aa8ee" stroke-width="3.1" opacity="0.84"/><line x1="235.9" y1="146.1" x2="190.0" y2="274.1" stroke="#b2d7fb" stroke-width="1.1" opacity="0.67"/><line x1="296.6" y1="-10.8" x2="286.0" y2="17.4" stroke="#6aa8ee" stroke-width="1.6" opacity="0.68"/><line x1="298.4" y1="-10.8" x2="287.8" y2="17.4" stroke="#b2d7fb" stroke-width="1.1" opacity="0.54"/><line x1="285.1" y1="19.9" x2="268.0" y2="65.1" stroke="#6aa8ee" stroke-width="1.6" opacity="0.62"/><line x1="286.9" y1="19.9" x2="269.8" y2="65.1" stroke="#b2d7fb" stroke-width="1.1" opacity="0.50"/><line x1="264.1" y1="75.6" x2="248.6" y2="116.6" stroke="#6aa8ee" stroke-width="1.6" opacity="0.81"/><line x1="265.9" y1="75.6" x2="250.4" y2="116.6" stroke="#b2d7fb" stroke-width="1.1" opacity="0.65"/><line x1="242.9" y1="131.8" x2="217.2" y2="199.9" stroke="#6aa8ee" stroke-width="1.6" opacity="0.64"/><line x1="244.7" y1="131.8" x2="219.0" y2="199.9" stroke="#b2d7fb" stroke-width="1.1" opacity="0.51"/><line x1="212.4" y1="212.6" x2="168.6" y2="328.7" stroke="#6aa8ee" stroke-width="1.6" opacity="0.91"/><line x1="214.2" y1="212.6" x2="170.4" y2="328.7" stroke="#b2d7fb" stroke-width="1.1" opacity="0.73"/><line x1="298.9" y1="-0.8" x2="273.0" y2="60.1" stroke="#6aa8ee" stroke-width="3.0" opacity="0.87"/><line x1="301.5" y1="-0.8" x2="275.6" y2="60.1" stroke="#b2d7fb" stroke-width="1.1" opacity="0.70"/><line x1="267.8" y1="72.2" x2="232.2" y2="155.8" stroke="#6aa8ee" stroke-width="3.0" opacity="0.60"/><line x1="270.4" y1="72.2" x2="234.8" y2="155.8" stroke="#b2d7fb" stroke-width="1.1" opacity="0.48"/><line x1="228.1" y1="165.4" x2="203.4" y2="223.3" stroke="#6aa8ee" stroke-width="3.0" opacity="0.81"/><line x1="230.7" y1="165.4" x2="206.0" y2="223.3" stroke="#b2d7fb" stroke-width="1.1" opacity="0.65"/><line x1="199.1" y1="233.5" x2="161.2" y2="322.3" stroke="#6aa8ee" stroke-width="3.0" opacity="0.62"/><line x1="201.7" y1="233.5" x2="163.8" y2="322.3" stroke="#b2d7fb" stroke-width="1.1" opacity="0.50"/><line x1="307.3" y1="-6.2" x2="282.3" y2="55.0" stroke="#6aa8ee" stroke-width="3.8" opacity="0.76"/><line x1="310.3" y1="-6.2" x2="285.3" y2="55.0" stroke="#b2d7fb" stroke-width="1.1" opacity="0.61"/><line x1="278.2" y1="65.1" x2="226.9" y2="190.6" stroke="#6aa8ee" stroke-width="3.8" opacity="0.74"/><line x1="281.2" y1="65.1" x2="229.9" y2="190.6" stroke="#b2d7fb" stroke-width="1.1" opacity="0.59"/><line x1="220.1" y1="207.4" x2="185.2" y2="292.9" stroke="#6aa8ee" stroke-width="3.8" opacity="0.74"/><line x1="223.1" y1="207.4" x2="188.2" y2="292.9" stroke="#b2d7fb" stroke-width="1.1" opacity="0.59"/><line x1="317.9" y1="-18.0" x2="302.6" y2="16.9" stroke="#6aa8ee" stroke-width="1.5" opacity="0.84"/><line x1="319.6" y1="-18.0" x2="304.3" y2="16.9" stroke="#b2d7fb" stroke-width="1.1" opacity="0.67"/><line x1="300.6" y1="21.3" x2="281.4" y2="65.0" stroke="#6aa8ee" stroke-width="1.5" opacity="0.75"/><line x1="302.3" y1="21.3" x2="283.1" y2="65.0" stroke="#b2d7fb" stroke-width="1.1" opacity="0.60"/><line x1="276.3" y1="76.6" x2="223.3" y2="197.1" stroke="#6aa8ee" stroke-width="1.5" opacity="0.76"/><line x1="278.0" y1="76.6" x2="225.0" y2="197.1" stroke="#b2d7fb" stroke-width="1.1" opacity="0.60"/><line x1="220.3" y1="203.8" x2="189.1" y2="274.8" stroke="#6aa8ee" stroke-width="1.5" opacity="0.91"/><line x1="222.1" y1="203.8" x2="190.8" y2="274.8" stroke="#b2d7fb" stroke-width="1.1" opacity="0.73"/><line x1="325.2" y1="-26.0" x2="307.2" y2="16.0" stroke="#6aa8ee" stroke-width="2.5" opacity="0.91"/><line x1="327.5" y1="-26.0" x2="309.5" y2="16.0" stroke="#b2d7fb" stroke-width="1.1" opacity="0.73"/><line x1="301.2" y1="30.0" x2="287.0" y2="63.0" stroke="#6aa8ee" stroke-width="2.5" opacity="0.84"/><line x1="303.5" y1="30.0" x2="289.3" y2="63.0" stroke="#b2d7fb" stroke-width="1.1" opacity="0.67"/><line x1="284.7" y1="68.4" x2="250.1" y2="149.2" stroke="#6aa8ee" stroke-width="2.5" opacity="0.81"/><line x1="287.0" y1="68.4" x2="252.4" y2="149.2" stroke="#b2d7fb" stroke-width="1.1" opacity="0.65"/><line x1="248.9" y1="152.0" x2="188.1" y2="293.9" stroke="#6aa8ee" stroke-width="2.5" opacity="0.72"/><line x1="251.2" y1="152.0" x2="190.4" y2="293.9" stroke="#b2d7fb" stroke-width="1.1" opacity="0.57"/><line x1="324.4" y1="-10.4" x2="295.0" y2="73.3" stroke="#6aa8ee" stroke-width="1.4" opacity="0.92"/><line x1="326.1" y1="-10.4" x2="296.7" y2="73.3" stroke="#b2d7fb" stroke-width="1.1" opacity="0.73"/><line x1="289.9" y1="88.0" x2="272.1" y2="138.8" stroke="#6aa8ee" stroke-width="1.4" opacity="0.62"/><line x1="291.6" y1="88.0" x2="273.8" y2="138.8" stroke="#b2d7fb" stroke-width="1.1" opacity="0.49"/><line x1="268.0" y1="150.4" x2="238.6" y2="234.2" stroke="#6aa8ee" stroke-width="1.4" opacity="0.71"/><line x1="269.7" y1="150.4" x2="240.3" y2="234.2" stroke="#b2d7fb" stroke-width="1.1" opacity="0.56"/><line x1="232.7" y1="250.9" x2="214.8" y2="302.0" stroke="#6aa8ee" stroke-width="1.4" opacity="0.83"/><line x1="234.4" y1="250.9" x2="216.5" y2="302.0" stroke="#b2d7fb" stroke-width="1.1" opacity="0.66"/><line x1="336.9" y1="-20.4" x2="286.6" y2="95.1" stroke="#6aa8ee" stroke-width="2.9" opacity="0.92"/><line x1="339.4" y1="-20.4" x2="289.1" y2="95.1" stroke="#b2d7fb" stroke-width="1.1" opacity="0.73"/><line x1="280.2" y1="109.8" x2="267.2" y2="139.9" stroke="#6aa8ee" stroke-width="2.9" opacity="0.78"/><line x1="282.7" y1="109.8" x2="269.6" y2="139.9" stroke="#b2d7fb" stroke-width="1.1" opacity="0.62"/><line x1="265.3" y1="144.2" x2="224.7" y2="237.4" stroke="#6aa8ee" stroke-width="2.9" opacity="0.93"/><line x1="267.8" y1="144.2" x2="227.2" y2="237.4" stroke="#b2d7fb" stroke-width="1.1" opacity="0.75"/><line x1="217.9" y1="253.3" x2="193.5" y2="309.4" stroke="#6aa8ee" stroke-width="2.9" opacity="0.79"/><line x1="220.3" y1="253.3" x2="195.9" y2="309.4" stroke="#b2d7fb" stroke-width="1.1" opacity="0.63"/><line x1="340.8" y1="-19.9" x2="308.7" y2="57.6" stroke="#6aa8ee" stroke-width="3.2" opacity="0.84"/><line x1="343.5" y1="-19.9" x2="311.4" y2="57.6" stroke="#b2d7fb" stroke-width="1.1" opacity="0.68"/><line x1="303.1" y1="71.3" x2="268.7" y2="154.2" stroke="#6aa8ee" stroke-width="3.2" opacity="0.64"/><line x1="305.7" y1="71.3" x2="271.4" y2="154.2" stroke="#b2d7fb" stroke-width="1.1" opacity="0.51"/><line x1="267.2" y1="157.7" x2="248.1" y2="203.9" stroke="#6aa8ee" stroke-width="3.2" opacity="0.89"/><line x1="269.9" y1="157.7" x2="250.8" y2="203.9" stroke="#b2d7fb" stroke-width="1.1" opacity="0.71"/><line x1="244.0" y1="213.9" x2="200.2" y2="319.4" stroke="#6aa8ee" stroke-width="3.2" opacity="0.73"/><line x1="246.6" y1="213.9" x2="202.9" y2="319.4" stroke="#b2d7fb" stroke-width="1.1" opacity="0.58"/><line x1="348.6" y1="-26.1" x2="299.3" y2="86.7" stroke="#6aa8ee" stroke-width="2.8" opacity="0.81"/><line x1="351.1" y1="-26.1" x2="301.8" y2="86.7" stroke="#b2d7fb" stroke-width="1.1" opacity="0.65"/><line x1="294.1" y1="98.5" x2="241.1" y2="219.7" stroke="#6aa8ee" stroke-width="2.8" opacity="0.81"/><line x1="296.6" y1="98.5" x2="243.5" y2="219.7" stroke="#b2d7fb" stroke-width="1.1" opacity="0.65"/><line x1="234.1" y1="235.8" x2="170.1" y2="382.0" stroke="#6aa8ee" stroke-width="2.8" opacity="0.74"/><line x1="236.5" y1="235.8" x2="172.6" y2="382.0" stroke="#b2d7fb" stroke-width="1.1" opacity="0.59"/><line x1="346.6" y1="-10.6" x2="320.2" y2="58.5" stroke="#6aa8ee" stroke-width="2.2" opacity="0.72"/><line x1="348.7" y1="-10.6" x2="322.4" y2="58.5" stroke="#b2d7fb" stroke-width="1.1" opacity="0.58"/><line x1="314.3" y1="74.0" x2="266.7" y2="199.0" stroke="#6aa8ee" stroke-width="2.2" opacity="0.84"/><line x1="316.5" y1="74.0" x2="268.8" y2="199.0" stroke="#b2d7fb" stroke-width="1.1" opacity="0.67"/><line x1="260.8" y1="214.5" x2="232.9" y2="287.8" stroke="#6aa8ee" stroke-width="2.2" opacity="0.82"/><line x1="262.9" y1="214.5" x2="235.0" y2="287.8" stroke="#b2d7fb" stroke-width="1.1" opacity="0.66"/><line x1="348.5" y1="-2.4" x2="326.5" y2="60.5" stroke="#6aa8ee" stroke-width="3.3" opacity="0.73"/><line x1="351.2" y1="-2.4" x2="329.2" y2="60.5" stroke="#b2d7fb" stroke-width="1.1" opacity="0.59"/><line x1="325.1" y1="64.4" x2="310.1" y2="107.1" stroke="#6aa8ee" stroke-width="3.3" opacity="0.82"/><line x1="327.8" y1="64.4" x2="312.9" y2="107.1" stroke="#b2d7fb" stroke-width="1.1" opacity="0.66"/><line x1="304.4" y1="123.4" x2="292.0" y2="158.9" stroke="#6aa8ee" stroke-width="3.3" opacity="0.69"/><line x1="307.2" y1="123.4" x2="294.7" y2="158.9" stroke="#b2d7fb" stroke-width="1.1" opacity="0.55"/><line x1="287.0" y1="173.0" x2="268.4" y2="226.3" stroke="#6aa8ee" stroke-width="3.3" opacity="0.91"/><line x1="289.8" y1="173.0" x2="271.1" y2="226.3" stroke="#b2d7fb" stroke-width="1.1" opacity="0.73"/><line x1="265.7" y1="233.9" x2="236.3" y2="318.1" stroke="#6aa8ee" stroke-width="3.3" opacity="0.67"/><line x1="268.5" y1="233.9" x2="239.0" y2="318.1" stroke="#b2d7fb" stroke-width="1.1" opacity="0.54"/><line x1="363.8" y1="-29.1" x2="325.2" y2="75.8" stroke="#6aa8ee" stroke-width="3.1" opacity="0.88"/><line x1="366.4" y1="-29.1" x2="327.9" y2="75.8" stroke="#b2d7fb" stroke-width="1.1" opacity="0.70"/><line x1="322.6" y1="83.0" x2="304.6" y2="131.9" stroke="#6aa8ee" stroke-width="3.1" opacity="0.64"/><line x1="325.2" y1="83.0" x2="307.2" y2="131.9" stroke="#b2d7fb" stroke-width="1.1" opacity="0.51"/><line x1="303.4" y1="135.1" x2="257.8" y2="259.2" stroke="#6aa8ee" stroke-width="3.1" opacity="0.81"/><line x1="306.0" y1="135.1" x2="260.4" y2="259.2" stroke="#b2d7fb" stroke-width="1.1" opacity="0.65"/><line x1="370.3" y1="-29.0" x2="339.2" y2="48.7" stroke="#6aa8ee" stroke-width="2.1" opacity="0.72"/><line x1="372.4" y1="-29.0" x2="341.3" y2="48.7" stroke="#b2d7fb" stroke-width="1.1" opacity="0.58"/><line x1="332.2" y1="66.2" x2="304.2" y2="136.2" stroke="#6aa8ee" stroke-width="2.1" opacity="0.92"/><line x1="334.3" y1="66.2" x2="306.3" y2="136.2" stroke="#b2d7fb" stroke-width="1.1" opacity="0.74"/><line x1="297.9" y1="152.1" x2="259.2" y2="248.9" stroke="#6aa8ee" stroke-width="2.1" opacity="0.64"/><line x1="300.0" y1="152.1" x2="261.3" y2="248.9" stroke="#b2d7fb" stroke-width="1.1" opacity="0.52"/><line x1="373.8" y1="-27.2" x2="343.6" y2="49.1" stroke="#6aa8ee" stroke-width="1.6" opacity="0.65"/><line x1="375.6" y1="-27.2" x2="345.4" y2="49.1" stroke="#b2d7fb" stroke-width="1.1" opacity="0.52"/><line x1="336.5" y1="67.0" x2="298.0" y2="164.2" stroke="#6aa8ee" stroke-width="1.6" opacity="0.91"/><line x1="338.3" y1="67.0" x2="299.8" y2="164.2" stroke="#b2d7fb" stroke-width="1.1" opacity="0.73"/><line x1="291.2" y1="181.5" x2="243.8" y2="301.3" stroke="#6aa8ee" stroke-width="1.6" opacity="0.83"/><line x1="293.0" y1="181.5" x2="245.6" y2="301.3" stroke="#b2d7fb" stroke-width="1.1" opacity="0.66"/><line x1="375.5" y1="-14.1" x2="344.3" y2="62.6" stroke="#6aa8ee" stroke-width="1.7" opacity="0.78"/><line x1="377.3" y1="-14.1" x2="346.1" y2="62.6" stroke="#b2d7fb" stroke-width="1.1" opacity="0.62"/><line x1="338.8" y1="76.0" x2="293.6" y2="187.1" stroke="#6aa8ee" stroke-width="1.7" opacity="0.80"/><line x1="340.7" y1="76.0" x2="295.4" y2="187.1" stroke="#b2d7fb" stroke-width="1.1" opacity="0.64"/><line x1="287.6" y1="201.8" x2="235.5" y2="329.9" stroke="#6aa8ee" stroke-width="1.7" opacity="0.63"/><line x1="289.5" y1="201.8" x2="237.3" y2="329.9" stroke="#b2d7fb" stroke-width="1.1" opacity="0.51"/><line x1="381.3" y1="-20.7" x2="352.8" y2="59.2" stroke="#6aa8ee" stroke-width="3.7" opacity="0.76"/><line x1="384.2" y1="-20.7" x2="355.8" y2="59.2" stroke="#b2d7fb" stroke-width="1.1" opacity="0.61"/><line x1="348.9" y1="70.2" x2="327.6" y2="130.1" stroke="#6aa8ee" stroke-width="3.7" opacity="0.87"/><line x1="351.9" y1="70.2" x2="330.5" y2="130.1" stroke="#b2d7fb" stroke-width="1.1" opacity="0.70"/><line x1="325.0" y1="137.4" x2="278.4" y2="268.1" stroke="#6aa8ee" stroke-width="3.7" opacity="0.88"/><line x1="327.9" y1="137.4" x2="281.4" y2="268.1" stroke="#b2d7fb" stroke-width="1.1" opacity="0.70"/><line x1="389.6" y1="-27.9" x2="369.2" y2="30.5" stroke="#6aa8ee" stroke-width="3.5" opacity="0.87"/><line x1="392.4" y1="-27.9" x2="372.0" y2="30.5" stroke="#b2d7fb" stroke-width="1.1" opacity="0.70"/><line x1="365.2" y1="41.9" x2="327.3" y2="150.3" stroke="#6aa8ee" stroke-width="3.5" opacity="0.74"/><line x1="368.0" y1="41.9" x2="330.2" y2="150.3" stroke="#b2d7fb" stroke-width="1.1" opacity="0.60"/><line x1="323.7" y1="160.6" x2="306.1" y2="211.0" stroke="#6aa8ee" stroke-width="3.5" opacity="0.76"/><line x1="326.5" y1="160.6" x2="308.9" y2="211.0" stroke="#b2d7fb" stroke-width="1.1" opacity="0.61"/><line x1="304.0" y1="217.2" x2="265.7" y2="326.6" stroke="#6aa8ee" stroke-width="3.5" opacity="0.64"/><line x1="306.8" y1="217.2" x2="268.6" y2="326.6" stroke="#b2d7fb" stroke-width="1.1" opacity="0.51"/><line x1="396.3" y1="-29.9" x2="337.9" y2="118.5" stroke="#6aa8ee" stroke-width="2.8" opacity="0.89"/><line x1="398.7" y1="-29.9" x2="340.3" y2="118.5" stroke="#b2d7fb" stroke-width="1.1" opacity="0.71"/><line x1="334.7" y1="126.6" x2="317.1" y2="171.4" stroke="#6aa8ee" stroke-width="2.8" opacity="0.89"/><line x1="337.2" y1="126.6" x2="319.5" y2="171.4" stroke="#b2d7fb" stroke-width="1.1" opacity="0.71"/><line x1="310.2" y1="189.0" x2="291.6" y2="236.3" stroke="#6aa8ee" stroke-width="2.8" opacity="0.86"/><line x1="312.6" y1="189.0" x2="294.0" y2="236.3" stroke="#b2d7fb" stroke-width="1.1" opacity="0.69"/><line x1="285.6" y1="251.4" x2="229.7" y2="393.5" stroke="#6aa8ee" stroke-width="2.8" opacity="0.67"/><line x1="288.1" y1="251.4" x2="232.2" y2="393.5" stroke="#b2d7fb" stroke-width="1.1" opacity="0.54"/><line x1="390.1" y1="-2.7" x2="359.5" y2="81.5" stroke="#6aa8ee" stroke-width="3.5" opacity="0.64"/><line x1="392.9" y1="-2.7" x2="362.3" y2="81.5" stroke="#b2d7fb" stroke-width="1.1" opacity="0.52"/><line x1="356.7" y1="89.2" x2="336.7" y2="144.3" stroke="#6aa8ee" stroke-width="3.5" opacity="0.83"/><line x1="359.6" y1="89.2" x2="339.5" y2="144.3" stroke="#b2d7fb" stroke-width="1.1" opacity="0.66"/><line x1="331.8" y1="157.8" x2="287.5" y2="279.8" stroke="#6aa8ee" stroke-width="3.5" opacity="0.75"/><line x1="334.6" y1="157.8" x2="290.3" y2="279.8" stroke="#b2d7fb" stroke-width="1.1" opacity="0.60"/><line x1="398.3" y1="-9.4" x2="355.3" y2="104.5" stroke="#6aa8ee" stroke-width="2.5" opacity="0.71"/><line x1="400.5" y1="-9.4" x2="357.6" y2="104.5" stroke="#b2d7fb" stroke-width="1.1" opacity="0.57"/><line x1="351.2" y1="115.5" x2="334.9" y2="158.7" stroke="#6aa8ee" stroke-width="2.5" opacity="0.62"/><line x1="353.4" y1="115.5" x2="337.2" y2="158.7" stroke="#b2d7fb" stroke-width="1.1" opacity="0.49"/><line x1="331.8" y1="166.9" x2="305.5" y2="236.8" stroke="#6aa8ee" stroke-width="2.5" opacity="0.61"/><line x1="334.1" y1="166.9" x2="307.7" y2="236.8" stroke="#b2d7fb" stroke-width="1.1" opacity="0.49"/><line x1="304.2" y1="240.0" x2="274.7" y2="318.3" stroke="#6aa8ee" stroke-width="2.5" opacity="0.93"/><line x1="306.5" y1="240.0" x2="277.0" y2="318.3" stroke="#b2d7fb" stroke-width="1.1" opacity="0.74"/><line x1="406.5" y1="-20.7" x2="390.8" y2="21.5" stroke="#6aa8ee" stroke-width="2.2" opacity="0.81"/><line x1="408.7" y1="-20.7" x2="393.0" y2="21.5" stroke="#b2d7fb" stroke-width="1.1" opacity="0.65"/><line x1="385.1" y1="36.9" x2="358.1" y2="109.6" stroke="#6aa8ee" stroke-width="2.2" opacity="0.66"/><line x1="387.3" y1="36.9" x2="360.2" y2="109.6" stroke="#b2d7fb" stroke-width="1.1" opacity="0.53"/><line x1="356.7" y1="113.3" x2="346.7" y2="140.2" stroke="#6aa8ee" stroke-width="2.2" opacity="0.87"/><line x1="358.9" y1="113.3" x2="348.9" y2="140.2" stroke="#b2d7fb" stroke-width="1.1" opacity="0.69"/><line x1="344.6" y1="145.9" x2="301.7" y2="261.4" stroke="#6aa8ee" stroke-width="2.2" opacity="0.88"/><line x1="346.8" y1="145.9" x2="303.8" y2="261.4" stroke="#b2d7fb" stroke-width="1.1" opacity="0.70"/><line x1="406.4" y1="-7.9" x2="383.1" y2="55.0" stroke="#6aa8ee" stroke-width="3.2" opacity="0.76"/><line x1="409.1" y1="-7.9" x2="385.8" y2="55.0" stroke="#b2d7fb" stroke-width="1.1" opacity="0.61"/><line x1="380.2" y1="62.6" x2="349.0" y2="146.6" stroke="#6aa8ee" stroke-width="3.2" opacity="0.88"/><line x1="382.9" y1="62.6" x2="351.7" y2="146.6" stroke="#b2d7fb" stroke-width="1.1" opacity="0.70"/><line x1="346.7" y1="152.8" x2="299.8" y2="279.1" stroke="#6aa8ee" stroke-width="3.2" opacity="0.92"/><line x1="349.4" y1="152.8" x2="302.5" y2="279.1" stroke="#b2d7fb" stroke-width="1.1" opacity="0.74"/><line x1="411.0" y1="-0.3" x2="389.2" y2="49.8" stroke="#6aa8ee" stroke-width="1.8" opacity="0.88"/><line x1="412.8" y1="-0.3" x2="391.1" y2="49.8" stroke="#b2d7fb" stroke-width="1.1" opacity="0.71"/><line x1="387.5" y1="53.8" x2="360.3" y2="116.6" stroke="#6aa8ee" stroke-width="1.8" opacity="0.75"/><line x1="389.4" y1="53.8" x2="362.1" y2="116.6" stroke="#b2d7fb" stroke-width="1.1" opacity="0.60"/><line x1="353.6" y1="132.0" x2="305.8" y2="242.1" stroke="#6aa8ee" stroke-width="1.8" opacity="0.67"/><line x1="355.5" y1="132.0" x2="307.7" y2="242.1" stroke="#b2d7fb" stroke-width="1.1" opacity="0.54"/><line x1="298.7" y1="258.5" x2="240.9" y2="391.7" stroke="#6aa8ee" stroke-width="1.8" opacity="0.78"/><line x1="300.6" y1="258.5" x2="242.8" y2="391.7" stroke="#b2d7fb" stroke-width="1.1" opacity="0.62"/><line x1="416.5" y1="-1.7" x2="379.8" y2="97.7" stroke="#6aa8ee" stroke-width="2.4" opacity="0.89"/><line x1="418.7" y1="-1.7" x2="382.0" y2="97.7" stroke="#b2d7fb" stroke-width="1.1" opacity="0.71"/><line x1="378.6" y1="100.8" x2="358.1" y2="156.5" stroke="#6aa8ee" stroke-width="2.4" opacity="0.86"/><line x1="380.8" y1="100.8" x2="360.3" y2="156.5" stroke="#b2d7fb" stroke-width="1.1" opacity="0.68"/><line x1="355.3" y1="163.9" x2="335.6" y2="217.4" stroke="#6aa8ee" stroke-width="2.4" opacity="0.62"/><line x1="357.5" y1="163.9" x2="337.8" y2="217.4" stroke="#b2d7fb" stroke-width="1.1" opacity="0.50"/><line x1="334.5" y1="220.2" x2="306.3" y2="296.7" stroke="#6aa8ee" stroke-width="2.4" opacity="0.79"/><line x1="336.8" y1="220.2" x2="308.5" y2="296.7" stroke="#b2d7fb" stroke-width="1.1" opacity="0.63"/><line x1="425.4" y1="-9.8" x2="400.7" y2="57.2" stroke="#6aa8ee" stroke-width="1.4" opacity="0.77"/><line x1="427.1" y1="-9.8" x2="402.4" y2="57.2" stroke="#b2d7fb" stroke-width="1.1" opacity="0.62"/><line x1="397.7" y1="65.2" x2="376.1" y2="124.0" stroke="#6aa8ee" stroke-width="1.4" opacity="0.62"/><line x1="399.4" y1="65.2" x2="377.7" y2="124.0" stroke="#b2d7fb" stroke-width="1.1" opacity="0.49"/><line x1="373.6" y1="130.7" x2="350.6" y2="193.0" stroke="#6aa8ee" stroke-width="1.4" opacity="0.64"/><line x1="375.2" y1="130.7" x2="352.3" y2="193.0" stroke="#b2d7fb" stroke-width="1.1" opacity="0.51"/><line x1="349.7" y1="195.5" x2="318.3" y2="280.5" stroke="#6aa8ee" stroke-width="1.4" opacity="0.61"/><line x1="351.4" y1="195.5" x2="320.0" y2="280.5" stroke="#b2d7fb" stroke-width="1.1" opacity="0.49"/><line x1="438.3" y1="-29.3" x2="423.9" y2="8.4" stroke="#6aa8ee" stroke-width="2.6" opacity="0.87"/><line x1="440.7" y1="-29.3" x2="426.2" y2="8.4" stroke="#b2d7fb" stroke-width="1.1" opacity="0.70"/><line x1="419.7" y1="19.3" x2="386.4" y2="106.0" stroke="#6aa8ee" stroke-width="2.6" opacity="0.72"/><line x1="422.0" y1="19.3" x2="388.7" y2="106.0" stroke="#b2d7fb" stroke-width="1.1" opacity="0.58"/><line x1="381.0" y1="120.0" x2="347.2" y2="207.9" stroke="#6aa8ee" stroke-width="2.6" opacity="0.88"/><line x1="383.3" y1="120.0" x2="349.5" y2="207.9" stroke="#b2d7fb" stroke-width="1.1" opacity="0.70"/><line x1="341.3" y1="223.2" x2="288.7" y2="360.0" stroke="#6aa8ee" stroke-width="2.6" opacity="0.85"/><line x1="343.6" y1="223.2" x2="291.1" y2="360.0" stroke="#b2d7fb" stroke-width="1.1" opacity="0.68"/><line x1="438.3" y1="-14.2" x2="388.2" y2="113.1" stroke="#6aa8ee" stroke-width="2.8" opacity="0.90"/><line x1="440.7" y1="-14.2" x2="390.6" y2="113.1" stroke="#b2d7fb" stroke-width="1.1" opacity="0.72"/><line x1="387.1" y1="116.0" x2="340.3" y2="235.0" stroke="#6aa8ee" stroke-width="2.8" opacity="0.82"/><line x1="389.5" y1="116.0" x2="342.7" y2="235.0" stroke="#b2d7fb" stroke-width="1.1" opacity="0.65"/><line x1="335.7" y1="246.6" x2="281.2" y2="385.1" stroke="#6aa8ee" stroke-width="2.8" opacity="0.62"/><line x1="338.1" y1="246.6" x2="283.7" y2="385.1" stroke="#b2d7fb" stroke-width="1.1" opacity="0.49"/><line x1="443.7" y1="-13.1" x2="425.0" y2="29.9" stroke="#6aa8ee" stroke-width="1.8" opacity="0.86"/><line x1="445.6" y1="-13.1" x2="426.9" y2="29.9" stroke="#b2d7fb" stroke-width="1.1" opacity="0.69"/><line x1="420.7" y1="39.8" x2="369.9" y2="156.7" stroke="#6aa8ee" stroke-width="1.8" opacity="0.71"/><line x1="422.6" y1="39.8" x2="371.8" y2="156.7" stroke="#b2d7fb" stroke-width="1.1" opacity="0.57"/><line x1="362.9" y1="172.8" x2="351.6" y2="198.7" stroke="#6aa8ee" stroke-width="1.8" opacity="0.68"/><line x1="364.7" y1="172.8" x2="353.5" y2="198.7" stroke="#b2d7fb" stroke-width="1.1" opacity="0.54"/><line x1="345.6" y1="212.4" x2="287.0" y2="347.3" stroke="#6aa8ee" stroke-width="1.8" opacity="0.87"/><line x1="347.5" y1="212.4" x2="288.9" y2="347.3" stroke="#b2d7fb" stroke-width="1.1" opacity="0.70"/><line x1="453.9" y1="-28.2" x2="395.6" y2="113.7" stroke="#6aa8ee" stroke-width="3.1" opacity="0.78"/><line x1="456.5" y1="-28.2" x2="398.2" y2="113.7" stroke="#b2d7fb" stroke-width="1.1" opacity="0.63"/><line x1="394.5" y1="116.2" x2="359.6" y2="201.1" stroke="#6aa8ee" stroke-width="3.1" opacity="0.72"/><line x1="397.2" y1="116.2" x2="362.3" y2="201.1" stroke="#b2d7fb" stroke-width="1.1" opacity="0.57"/><line x1="358.1" y1="204.8" x2="302.4" y2="340.5" stroke="#6aa8ee" stroke-width="3.1" opacity="0.93"/><line x1="360.8" y1="204.8" x2="305.0" y2="340.5" stroke="#b2d7fb" stroke-width="1.1" opacity="0.74"/><line x1="457.7" y1="-26.7" x2="433.2" y2="40.0" stroke="#6aa8ee" stroke-width="3.0" opacity="0.74"/><line x1="460.2" y1="-26.7" x2="435.7" y2="40.0" stroke="#b2d7fb" stroke-width="1.1" opacity="0.59"/><line x1="429.7" y1="49.5" x2="400.5" y2="128.9" stroke="#6aa8ee" stroke-width="3.0" opacity="0.81"/><line x1="432.2" y1="49.5" x2="403.0" y2="128.9" stroke="#b2d7fb" stroke-width="1.1" opacity="0.65"/><line x1="394.2" y1="146.0" x2="342.3" y2="287.4" stroke="#6aa8ee" stroke-width="3.0" opacity="0.92"/><line x1="396.8" y1="146.0" x2="344.8" y2="287.4" stroke="#b2d7fb" stroke-width="1.1" opacity="0.73"/><line x1="456.6" y1="-10.7" x2="419.8" y2="90.1" stroke="#6aa8ee" stroke-width="2.5" opacity="0.72"/><line x1="458.8" y1="-10.7" x2="422.1" y2="90.1" stroke="#b2d7fb" stroke-width="1.1" opacity="0.58"/><line x1="413.3" y1="108.0" x2="390.0" y2="172.0" stroke="#6aa8ee" stroke-width="2.5" opacity="0.61"/><line x1="415.6" y1="108.0" x2="392.2" y2="172.0" stroke="#b2d7fb" stroke-width="1.1" opacity="0.49"/><line x1="388.7" y1="175.5" x2="370.1" y2="226.6" stroke="#6aa8ee" stroke-width="2.5" opacity="0.86"/><line x1="391.0" y1="175.5" x2="372.3" y2="226.6" stroke="#b2d7fb" stroke-width="1.1" opacity="0.68"/><line x1="364.4" y1="242.1" x2="353.4" y2="272.3" stroke="#6aa8ee" stroke-width="2.5" opacity="0.68"/><line x1="366.7" y1="242.1" x2="355.7" y2="272.3" stroke="#b2d7fb" stroke-width="1.1" opacity="0.55"/><line x1="471.0" y1="-26.9" x2="408.3" y2="118.9" stroke="#6aa8ee" stroke-width="2.0" opacity="0.94"/><line x1="473.0" y1="-26.9" x2="410.3" y2="118.9" stroke="#b2d7fb" stroke-width="1.1" opacity="0.75"/><line x1="402.5" y1="132.4" x2="366.4" y2="216.5" stroke="#6aa8ee" stroke-width="2.0" opacity="0.86"/><line x1="404.5" y1="132.4" x2="368.4" y2="216.5" stroke="#b2d7fb" stroke-width="1.1" opacity="0.69"/><line x1="360.2" y1="230.8" x2="322.1" y2="319.4" stroke="#6aa8ee" stroke-width="2.0" opacity="0.69"/><line x1="362.2" y1="230.8" x2="324.1" y2="319.4" stroke="#b2d7fb" stroke-width="1.1" opacity="0.56"/><line x1="475.3" y1="-25.6" x2="420.8" y2="120.8" stroke="#6aa8ee" stroke-width="2.9" opacity="0.67"/><line x1="477.8" y1="-25.6" x2="423.3" y2="120.8" stroke="#b2d7fb" stroke-width="1.1" opacity="0.54"/><line x1="418.7" y1="126.4" x2="364.6" y2="271.4" stroke="#6aa8ee" stroke-width="2.9" opacity="0.93"/><line x1="421.2" y1="126.4" x2="367.2" y2="271.4" stroke="#b2d7fb" stroke-width="1.1" opacity="0.75"/><line x1="478.2" y1="-13.0" x2="463.6" y2="21.3" stroke="#6aa8ee" stroke-width="3.3" opacity="0.86"/><line x1="481.0" y1="-13.0" x2="466.4" y2="21.3" stroke="#b2d7fb" stroke-width="1.1" opacity="0.68"/><line x1="457.1" y1="36.7" x2="402.0" y2="166.4" stroke="#6aa8ee" stroke-width="3.3" opacity="0.62"/><line x1="459.9" y1="36.7" x2="404.7" y2="166.4" stroke="#b2d7fb" stroke-width="1.1" opacity="0.49"/><line x1="400.7" y1="169.4" x2="351.3" y2="285.7" stroke="#6aa8ee" stroke-width="3.3" opacity="0.77"/><line x1="403.5" y1="169.4" x2="354.1" y2="285.7" stroke="#b2d7fb" stroke-width="1.1" opacity="0.62"/><line x1="484.0" y1="-10.0" x2="441.0" y2="101.7" stroke="#6aa8ee" stroke-width="3.0" opacity="0.73"/><line x1="486.6" y1="-10.0" x2="443.6" y2="101.7" stroke="#b2d7fb" stroke-width="1.1" opacity="0.58"/><line x1="436.3" y1="113.9" x2="423.4" y2="147.4" stroke="#6aa8ee" stroke-width="3.0" opacity="0.92"/><line x1="438.9" y1="113.9" x2="426.0" y2="147.4" stroke="#b2d7fb" stroke-width="1.1" opacity="0.73"/><line x1="418.2" y1="160.9" x2="370.0" y2="286.3" stroke="#6aa8ee" stroke-width="3.0" opacity="0.76"/><line x1="420.8" y1="160.9" x2="372.6" y2="286.3" stroke="#b2d7fb" stroke-width="1.1" opacity="0.61"/><line x1="496.6" y1="-26.7" x2="486.2" y2="-1.3" stroke="#6aa8ee" stroke-width="2.7" opacity="0.74"/><line x1="499.0" y1="-26.7" x2="488.6" y2="-1.3" stroke="#b2d7fb" stroke-width="1.1" opacity="0.59"/><line x1="483.8" y1="4.6" x2="462.1" y2="58.0" stroke="#6aa8ee" stroke-width="2.7" opacity="0.68"/><line x1="486.2" y1="4.6" x2="464.4" y2="58.0" stroke="#b2d7fb" stroke-width="1.1" opacity="0.54"/><line x1="458.5" y1="66.6" x2="412.9" y2="178.5" stroke="#6aa8ee" stroke-width="2.7" opacity="0.92"/><line x1="460.9" y1="66.6" x2="415.3" y2="178.5" stroke="#b2d7fb" stroke-width="1.1" opacity="0.74"/><line x1="407.6" y1="191.4" x2="396.4" y2="219.0" stroke="#6aa8ee" stroke-width="2.7" opacity="0.90"/><line x1="410.0" y1="191.4" x2="398.8" y2="219.0" stroke="#b2d7fb" stroke-width="1.1" opacity="0.72"/><line x1="391.6" y1="230.7" x2="344.1" y2="347.2" stroke="#6aa8ee" stroke-width="2.7" opacity="0.81"/><line x1="394.0" y1="230.7" x2="346.4" y2="347.2" stroke="#b2d7fb" stroke-width="1.1" opacity="0.65"/><line x1="500.8" y1="-28.4" x2="462.5" y2="81.8" stroke="#6aa8ee" stroke-width="3.0" opacity="0.92"/><line x1="503.3" y1="-28.4" x2="465.1" y2="81.8" stroke="#b2d7fb" stroke-width="1.1" opacity="0.74"/><line x1="458.1" y1="94.4" x2="423.1" y2="195.2" stroke="#6aa8ee" stroke-width="3.0" opacity="0.88"/><line x1="460.7" y1="94.4" x2="425.7" y2="195.2" stroke="#b2d7fb" stroke-width="1.1" opacity="0.71"/><line x1="417.1" y1="212.6" x2="373.2" y2="339.1" stroke="#6aa8ee" stroke-width="3.0" opacity="0.95"/><line x1="419.7" y1="212.6" x2="375.7" y2="339.1" stroke="#b2d7fb" stroke-width="1.1" opacity="0.76"/><line x1="496.6" y1="-4.1" x2="455.9" y2="97.4" stroke="#6aa8ee" stroke-width="2.9" opacity="0.73"/><line x1="499.1" y1="-4.1" x2="458.4" y2="97.4" stroke="#b2d7fb" stroke-width="1.1" opacity="0.58"/><line x1="455.0" y1="99.5" x2="403.3" y2="228.3" stroke="#6aa8ee" stroke-width="2.9" opacity="0.82"/><line x1="457.5" y1="99.5" x2="405.8" y2="228.3" stroke="#b2d7fb" stroke-width="1.1" opacity="0.65"/><line x1="396.2" y1="246.1" x2="356.4" y2="345.3" stroke="#6aa8ee" stroke-width="2.9" opacity="0.90"/><line x1="398.7" y1="246.1" x2="358.9" y2="345.3" stroke="#b2d7fb" stroke-width="1.1" opacity="0.72"/><line x1="509.4" y1="-18.1" x2="499.2" y2="8.3" stroke="#6aa8ee" stroke-width="3.5" opacity="0.71"/><line x1="512.3" y1="-18.1" x2="502.1" y2="8.3" stroke="#b2d7fb" stroke-width="1.1" opacity="0.57"/><line x1="496.3" y1="15.9" x2="438.7" y2="165.0" stroke="#6aa8ee" stroke-width="3.5" opacity="0.74"/><line x1="499.1" y1="15.9" x2="441.6" y2="165.0" stroke="#b2d7fb" stroke-width="1.1" opacity="0.59"/><line x1="436.2" y1="171.4" x2="393.2" y2="282.7" stroke="#6aa8ee" stroke-width="3.5" opacity="0.63"/><line x1="439.1" y1="171.4" x2="396.1" y2="282.7" stroke="#b2d7fb" stroke-width="1.1" opacity="0.51"/><line x1="513.9" y1="-17.3" x2="469.8" y2="107.9" stroke="#6aa8ee" stroke-width="2.8" opacity="0.72"/><line x1="516.4" y1="-17.3" x2="472.2" y2="107.9" stroke="#b2d7fb" stroke-width="1.1" opacity="0.58"/><line x1="463.5" y1="125.6" x2="446.1" y2="175.0" stroke="#6aa8ee" stroke-width="2.8" opacity="0.79"/><line x1="466.0" y1="125.6" x2="448.6" y2="175.0" stroke="#b2d7fb" stroke-width="1.1" opacity="0.63"/><line x1="444.1" y1="180.7" x2="434.7" y2="207.4" stroke="#6aa8ee" stroke-width="2.8" opacity="0.71"/><line x1="446.6" y1="180.7" x2="437.2" y2="207.4" stroke="#b2d7fb" stroke-width="1.1" opacity="0.56"/><line x1="428.9" y1="223.8" x2="407.3" y2="285.2" stroke="#6aa8ee" stroke-width="2.8" opacity="0.77"/><line x1="431.4" y1="223.8" x2="409.7" y2="285.2" stroke="#b2d7fb" stroke-width="1.1" opacity="0.62"/><line x1="520.4" y1="-19.5" x2="496.6" y2="41.1" stroke="#6aa8ee" stroke-width="1.5" opacity="0.89"/><line x1="522.2" y1="-19.5" x2="498.3" y2="41.1" stroke="#b2d7fb" stroke-width="1.1" opacity="0.71"/><line x1="490.9" y1="55.4" x2="446.6" y2="168.0" stroke="#6aa8ee" stroke-width="1.5" opacity="0.81"/><line x1="492.7" y1="55.4" x2="448.4" y2="168.0" stroke="#b2d7fb" stroke-width="1.1" opacity="0.65"/><line x1="440.4" y1="183.8" x2="394.1" y2="301.5" stroke="#6aa8ee" stroke-width="1.5" opacity="0.62"/><line x1="442.1" y1="183.8" x2="395.9" y2="301.5" stroke="#b2d7fb" stroke-width="1.1" opacity="0.50"/></g></g><g clip-path="url(#zA)"><g filter="url(#bl2)" stroke-linecap="round"><line x1="312.6" y1="160.1" x2="371.3" y2="168.3" stroke="#6aa8ee" stroke-width="2.4" opacity="0.85"/><line x1="312.6" y1="158.2" x2="371.3" y2="166.3" stroke="#b2d7fb" stroke-width="1" opacity="0.7"/><line x1="228.5" y1="123.1" x2="255.2" y2="132.3" stroke="#6aa8ee" stroke-width="2.3" opacity="0.85"/><line x1="228.5" y1="121.2" x2="255.2" y2="130.3" stroke="#b2d7fb" stroke-width="1" opacity="0.7"/><line x1="89.8" y1="78.1" x2="129.1" y2="82.7" stroke="#6aa8ee" stroke-width="2.5" opacity="0.85"/><line x1="89.8" y1="76.0" x2="129.1" y2="80.6" stroke="#b2d7fb" stroke-width="1" opacity="0.7"/><line x1="86.3" y1="59.3" x2="121.4" y2="68.1" stroke="#6aa8ee" stroke-width="2.0" opacity="0.85"/><line x1="86.3" y1="57.5" x2="121.4" y2="66.4" stroke="#b2d7fb" stroke-width="1" opacity="0.7"/><line x1="244.2" y1="138.8" x2="313.8" y2="161.2" stroke="#6aa8ee" stroke-width="2.9" opacity="0.85"/><line x1="244.2" y1="136.5" x2="313.8" y2="158.9" stroke="#b2d7fb" stroke-width="1" opacity="0.7"/><line x1="83.7" y1="72.3" x2="108.2" y2="78.3" stroke="#6aa8ee" stroke-width="1.6" opacity="0.85"/><line x1="83.7" y1="70.7" x2="108.2" y2="76.7" stroke="#b2d7fb" stroke-width="1" opacity="0.7"/><line x1="23.7" y1="52.7" x2="50.0" y2="60.1" stroke="#6aa8ee" stroke-width="2.3" opacity="0.85"/><line x1="23.7" y1="50.8" x2="50.0" y2="58.1" stroke="#b2d7fb" stroke-width="1" opacity="0.7"/><line x1="-14.5" y1="40.1" x2="8.5" y2="47.5" stroke="#6aa8ee" stroke-width="2.7" opacity="0.85"/><line x1="-14.5" y1="38.0" x2="8.5" y2="45.4" stroke="#b2d7fb" stroke-width="1" opacity="0.7"/><line x1="178.5" y1="96.4" x2="199.9" y2="102.3" stroke="#6aa8ee" stroke-width="1.6" opacity="0.85"/><line x1="178.5" y1="94.8" x2="199.9" y2="100.7" stroke="#b2d7fb" stroke-width="1" opacity="0.7"/><line x1="190.2" y1="118.8" x2="244.1" y2="125.7" stroke="#6aa8ee" stroke-width="2.6" opacity="0.85"/><line x1="190.2" y1="116.7" x2="244.1" y2="123.6" stroke="#b2d7fb" stroke-width="1" opacity="0.7"/><line x1="258.6" y1="121.1" x2="317.2" y2="135.4" stroke="#6aa8ee" stroke-width="2.1" opacity="0.85"/><line x1="258.6" y1="119.2" x2="317.2" y2="133.6" stroke="#b2d7fb" stroke-width="1" opacity="0.7"/><line x1="190.1" y1="95.1" x2="224.4" y2="106.2" stroke="#6aa8ee" stroke-width="2.0" opacity="0.85"/><line x1="190.1" y1="93.3" x2="224.4" y2="104.4" stroke="#b2d7fb" stroke-width="1" opacity="0.7"/><line x1="285.8" y1="130.0" x2="315.3" y2="133.0" stroke="#6aa8ee" stroke-width="2.9" opacity="0.85"/><line x1="285.8" y1="127.8" x2="315.3" y2="130.7" stroke="#b2d7fb" stroke-width="1" opacity="0.7"/><line x1="278.1" y1="150.7" x2="327.6" y2="156.4" stroke="#6aa8ee" stroke-width="1.7" opacity="0.85"/><line x1="278.1" y1="149.0" x2="327.6" y2="154.7" stroke="#b2d7fb" stroke-width="1" opacity="0.7"/><line x1="4.2" y1="44.0" x2="55.3" y2="61.3" stroke="#6aa8ee" stroke-width="1.9" opacity="0.85"/><line x1="4.2" y1="42.2" x2="55.3" y2="59.5" stroke="#b2d7fb" stroke-width="1" opacity="0.7"/><line x1="76.0" y1="57.1" x2="103.3" y2="60.0" stroke="#6aa8ee" stroke-width="2.2" opacity="0.85"/><line x1="76.0" y1="55.1" x2="103.3" y2="58.1" stroke="#b2d7fb" stroke-width="1" opacity="0.7"/><line x1="148.8" y1="81.0" x2="216.3" y2="93.1" stroke="#6aa8ee" stroke-width="2.7" opacity="0.85"/><line x1="148.8" y1="78.9" x2="216.3" y2="90.9" stroke="#b2d7fb" stroke-width="1" opacity="0.7"/><line x1="192.7" y1="89.9" x2="214.1" y2="95.3" stroke="#6aa8ee" stroke-width="2.8" opacity="0.85"/><line x1="192.7" y1="87.7" x2="214.1" y2="93.1" stroke="#b2d7fb" stroke-width="1" opacity="0.7"/><line x1="4.6" y1="44.7" x2="36.2" y2="53.3" stroke="#6aa8ee" stroke-width="2.7" opacity="0.85"/><line x1="4.6" y1="42.5" x2="36.2" y2="51.1" stroke="#b2d7fb" stroke-width="1" opacity="0.7"/><line x1="268.6" y1="120.7" x2="296.4" y2="130.2" stroke="#6aa8ee" stroke-width="2.9" opacity="0.85"/><line x1="268.6" y1="118.5" x2="296.4" y2="128.0" stroke="#b2d7fb" stroke-width="1" opacity="0.7"/><line x1="345.1" y1="152.8" x2="367.7" y2="157.1" stroke="#6aa8ee" stroke-width="2.9" opacity="0.85"/><line x1="345.1" y1="150.5" x2="367.7" y2="154.9" stroke="#b2d7fb" stroke-width="1" opacity="0.7"/><line x1="11.1" y1="43.4" x2="33.2" y2="50.5" stroke="#6aa8ee" stroke-width="2.0" opacity="0.85"/><line x1="11.1" y1="41.6" x2="33.2" y2="48.6" stroke="#b2d7fb" stroke-width="1" opacity="0.7"/><line x1="17.1" y1="45.2" x2="47.3" y2="51.5" stroke="#6aa8ee" stroke-width="2.4" opacity="0.85"/><line x1="17.1" y1="43.2" x2="47.3" y2="49.5" stroke="#b2d7fb" stroke-width="1" opacity="0.7"/><line x1="241.6" y1="107.6" x2="288.3" y2="112.9" stroke="#6aa8ee" stroke-width="2.2" opacity="0.85"/><line x1="241.6" y1="105.7" x2="288.3" y2="111.0" stroke="#b2d7fb" stroke-width="1" opacity="0.7"/><line x1="300.1" y1="130.2" x2="361.2" y2="140.0" stroke="#6aa8ee" stroke-width="2.1" opacity="0.85"/><line x1="300.1" y1="128.4" x2="361.2" y2="138.2" stroke="#b2d7fb" stroke-width="1" opacity="0.7"/><line x1="294.1" y1="119.0" x2="341.8" y2="130.2" stroke="#6aa8ee" stroke-width="2.6" opacity="0.85"/><line x1="294.1" y1="116.9" x2="341.8" y2="128.1" stroke="#b2d7fb" stroke-width="1" opacity="0.7"/><line x1="354.7" y1="160.8" x2="385.9" y2="165.5" stroke="#6aa8ee" stroke-width="2.2" opacity="0.85"/><line x1="354.7" y1="158.9" x2="385.9" y2="163.6" stroke="#b2d7fb" stroke-width="1" opacity="0.7"/><line x1="94.7" y1="69.4" x2="119.2" y2="76.1" stroke="#6aa8ee" stroke-width="2.1" opacity="0.85"/><line x1="94.7" y1="67.6" x2="119.2" y2="74.3" stroke="#b2d7fb" stroke-width="1" opacity="0.7"/><line x1="4.5" y1="40.8" x2="71.3" y2="61.6" stroke="#6aa8ee" stroke-width="2.8" opacity="0.85"/><line x1="4.5" y1="38.6" x2="71.3" y2="59.4" stroke="#b2d7fb" stroke-width="1" opacity="0.7"/><line x1="137.0" y1="97.0" x2="165.5" y2="105.0" stroke="#6aa8ee" stroke-width="2.9" opacity="0.85"/><line x1="137.0" y1="94.7" x2="165.5" y2="102.8" stroke="#b2d7fb" stroke-width="1" opacity="0.7"/><line x1="66.4" y1="50.8" x2="92.7" y2="54.0" stroke="#6aa8ee" stroke-width="2.7" opacity="0.85"/><line x1="66.4" y1="48.7" x2="92.7" y2="51.9" stroke="#b2d7fb" stroke-width="1" opacity="0.7"/><line x1="221.4" y1="115.8" x2="247.1" y2="122.5" stroke="#6aa8ee" stroke-width="1.7" opacity="0.85"/><line x1="221.4" y1="114.1" x2="247.1" y2="120.8" stroke="#b2d7fb" stroke-width="1" opacity="0.7"/><line x1="37.1" y1="53.2" x2="89.3" y2="68.8" stroke="#6aa8ee" stroke-width="2.7" opacity="0.85"/><line x1="37.1" y1="51.0" x2="89.3" y2="66.7" stroke="#b2d7fb" stroke-width="1" opacity="0.7"/><line x1="38.5" y1="49.8" x2="65.7" y2="55.8" stroke="#6aa8ee" stroke-width="1.5" opacity="0.85"/><line x1="38.5" y1="48.2" x2="65.7" y2="54.3" stroke="#b2d7fb" stroke-width="1" opacity="0.7"/><line x1="323.4" y1="151.9" x2="383.8" y2="165.3" stroke="#6aa8ee" stroke-width="2.9" opacity="0.85"/><line x1="323.4" y1="149.6" x2="383.8" y2="163.1" stroke="#b2d7fb" stroke-width="1" opacity="0.7"/><line x1="310.6" y1="153.8" x2="370.9" y2="163.1" stroke="#6aa8ee" stroke-width="2.0" opacity="0.85"/><line x1="310.6" y1="152.0" x2="370.9" y2="161.2" stroke="#b2d7fb" stroke-width="1" opacity="0.7"/><line x1="7.0" y1="45.8" x2="50.6" y2="61.0" stroke="#6aa8ee" stroke-width="1.9" opacity="0.85"/><line x1="7.0" y1="44.1" x2="50.6" y2="59.2" stroke="#b2d7fb" stroke-width="1" opacity="0.7"/><line x1="153.1" y1="100.2" x2="221.6" y2="120.0" stroke="#6aa8ee" stroke-width="2.8" opacity="0.85"/><line x1="153.1" y1="98.0" x2="221.6" y2="117.7" stroke="#b2d7fb" stroke-width="1" opacity="0.7"/><line x1="345.2" y1="143.2" x2="396.1" y2="149.0" stroke="#6aa8ee" stroke-width="2.5" opacity="0.85"/><line x1="345.2" y1="141.1" x2="396.1" y2="147.0" stroke="#b2d7fb" stroke-width="1" opacity="0.7"/><line x1="356.5" y1="154.6" x2="383.8" y2="161.2" stroke="#6aa8ee" stroke-width="1.6" opacity="0.85"/><line x1="356.5" y1="153.0" x2="383.8" y2="159.6" stroke="#b2d7fb" stroke-width="1" opacity="0.7"/><line x1="165.0" y1="77.8" x2="205.9" y2="90.2" stroke="#6aa8ee" stroke-width="2.6" opacity="0.85"/><line x1="165.0" y1="75.6" x2="205.9" y2="88.1" stroke="#b2d7fb" stroke-width="1" opacity="0.7"/><line x1="317.9" y1="142.2" x2="359.9" y2="147.0" stroke="#6aa8ee" stroke-width="2.7" opacity="0.85"/><line x1="317.9" y1="140.1" x2="359.9" y2="144.9" stroke="#b2d7fb" stroke-width="1" opacity="0.7"/><line x1="207.2" y1="107.2" x2="234.5" y2="113.0" stroke="#6aa8ee" stroke-width="1.6" opacity="0.85"/><line x1="207.2" y1="105.6" x2="234.5" y2="111.4" stroke="#b2d7fb" stroke-width="1" opacity="0.7"/><line x1="31.8" y1="45.5" x2="73.0" y2="51.1" stroke="#6aa8ee" stroke-width="2.7" opacity="0.85"/><line x1="31.8" y1="43.3" x2="73.0" y2="48.9" stroke="#b2d7fb" stroke-width="1" opacity="0.7"/><line x1="222.9" y1="131.2" x2="270.6" y2="137.9" stroke="#6aa8ee" stroke-width="1.9" opacity="0.85"/><line x1="222.9" y1="129.4" x2="270.6" y2="136.1" stroke="#b2d7fb" stroke-width="1" opacity="0.7"/><line x1="312.4" y1="145.4" x2="364.7" y2="158.9" stroke="#6aa8ee" stroke-width="1.6" opacity="0.85"/><line x1="312.4" y1="143.8" x2="364.7" y2="157.3" stroke="#b2d7fb" stroke-width="1" opacity="0.7"/><line x1="62.9" y1="57.9" x2="125.1" y2="78.8" stroke="#6aa8ee" stroke-width="2.4" opacity="0.85"/><line x1="62.9" y1="56.0" x2="125.1" y2="76.8" stroke="#b2d7fb" stroke-width="1" opacity="0.7"/><line x1="86.2" y1="55.4" x2="134.1" y2="65.1" stroke="#6aa8ee" stroke-width="2.9" opacity="0.85"/><line x1="86.2" y1="53.1" x2="134.1" y2="62.8" stroke="#b2d7fb" stroke-width="1" opacity="0.7"/><line x1="65.6" y1="54.4" x2="86.4" y2="56.7" stroke="#6aa8ee" stroke-width="2.7" opacity="0.85"/><line x1="65.6" y1="52.3" x2="86.4" y2="54.5" stroke="#b2d7fb" stroke-width="1" opacity="0.7"/><line x1="324.8" y1="133.2" x2="345.5" y2="138.2" stroke="#6aa8ee" stroke-width="1.9" opacity="0.85"/><line x1="324.8" y1="131.4" x2="345.5" y2="136.5" stroke="#b2d7fb" stroke-width="1" opacity="0.7"/><line x1="224.7" y1="133.7" x2="282.0" y2="143.5" stroke="#6aa8ee" stroke-width="2.4" opacity="0.85"/><line x1="224.7" y1="131.7" x2="282.0" y2="141.4" stroke="#b2d7fb" stroke-width="1" opacity="0.7"/><line x1="97.9" y1="75.5" x2="130.8" y2="86.0" stroke="#6aa8ee" stroke-width="2.5" opacity="0.85"/><line x1="97.9" y1="73.5" x2="130.8" y2="83.9" stroke="#b2d7fb" stroke-width="1" opacity="0.7"/><line x1="332.8" y1="142.3" x2="400.5" y2="159.0" stroke="#6aa8ee" stroke-width="1.9" opacity="0.85"/><line x1="332.8" y1="140.6" x2="400.5" y2="157.2" stroke="#b2d7fb" stroke-width="1" opacity="0.7"/><line x1="237.3" y1="114.4" x2="262.9" y2="117.2" stroke="#6aa8ee" stroke-width="2.4" opacity="0.85"/><line x1="237.3" y1="112.4" x2="262.9" y2="115.2" stroke="#b2d7fb" stroke-width="1" opacity="0.7"/><line x1="79.3" y1="55.2" x2="138.2" y2="63.2" stroke="#6aa8ee" stroke-width="2.6" opacity="0.85"/><line x1="79.3" y1="53.1" x2="138.2" y2="61.1" stroke="#b2d7fb" stroke-width="1" opacity="0.7"/><line x1="91.5" y1="63.9" x2="158.1" y2="84.4" stroke="#6aa8ee" stroke-width="2.8" opacity="0.85"/><line x1="91.5" y1="61.8" x2="158.1" y2="82.2" stroke="#b2d7fb" stroke-width="1" opacity="0.7"/><line x1="367.3" y1="161.0" x2="434.1" y2="178.1" stroke="#6aa8ee" stroke-width="2.4" opacity="0.85"/><line x1="367.3" y1="159.1" x2="434.1" y2="176.1" stroke="#b2d7fb" stroke-width="1" opacity="0.7"/><line x1="111.3" y1="69.4" x2="159.8" y2="77.2" stroke="#6aa8ee" stroke-width="2.5" opacity="0.85"/><line x1="111.3" y1="67.4" x2="159.8" y2="75.2" stroke="#b2d7fb" stroke-width="1" opacity="0.7"/><line x1="322.0" y1="152.9" x2="353.2" y2="156.2" stroke="#6aa8ee" stroke-width="2.1" opacity="0.85"/><line x1="322.0" y1="151.1" x2="353.2" y2="154.4" stroke="#b2d7fb" stroke-width="1" opacity="0.7"/><line x1="154.3" y1="100.0" x2="201.7" y2="110.9" stroke="#6aa8ee" stroke-width="2.4" opacity="0.85"/><line x1="154.3" y1="98.0" x2="201.7" y2="108.9" stroke="#b2d7fb" stroke-width="1" opacity="0.7"/><line x1="200.7" y1="114.4" x2="248.6" y2="125.8" stroke="#6aa8ee" stroke-width="1.9" opacity="0.85"/><line x1="200.7" y1="112.6" x2="248.6" y2="124.0" stroke="#b2d7fb" stroke-width="1" opacity="0.7"/><line x1="33.2" y1="50.1" x2="97.5" y2="71.8" stroke="#6aa8ee" stroke-width="1.9" opacity="0.85"/><line x1="33.2" y1="48.4" x2="97.5" y2="70.0" stroke="#b2d7fb" stroke-width="1" opacity="0.7"/><line x1="209.1" y1="112.1" x2="251.8" y2="118.3" stroke="#6aa8ee" stroke-width="2.7" opacity="0.85"/><line x1="209.1" y1="110.0" x2="251.8" y2="116.1" stroke="#b2d7fb" stroke-width="1" opacity="0.7"/><line x1="18.3" y1="44.3" x2="52.2" y2="49.4" stroke="#6aa8ee" stroke-width="1.8" opacity="0.85"/><line x1="18.3" y1="42.6" x2="52.2" y2="47.7" stroke="#b2d7fb" stroke-width="1" opacity="0.7"/><line x1="16.1" y1="46.4" x2="44.7" y2="53.9" stroke="#6aa8ee" stroke-width="2.4" opacity="0.85"/><line x1="16.1" y1="44.4" x2="44.7" y2="51.9" stroke="#b2d7fb" stroke-width="1" opacity="0.7"/><line x1="228.6" y1="118.5" x2="279.2" y2="127.3" stroke="#6aa8ee" stroke-width="2.2" opacity="0.85"/><line x1="228.6" y1="116.6" x2="279.2" y2="125.4" stroke="#b2d7fb" stroke-width="1" opacity="0.7"/><line x1="253.5" y1="115.4" x2="310.2" y2="129.4" stroke="#6aa8ee" stroke-width="3.0" opacity="0.85"/><line x1="253.5" y1="113.1" x2="310.2" y2="127.1" stroke="#b2d7fb" stroke-width="1" opacity="0.7"/><line x1="225.4" y1="120.2" x2="283.8" y2="130.2" stroke="#6aa8ee" stroke-width="2.1" opacity="0.85"/><line x1="225.4" y1="118.3" x2="283.8" y2="128.4" stroke="#b2d7fb" stroke-width="1" opacity="0.7"/><line x1="153.6" y1="95.8" x2="209.6" y2="104.0" stroke="#6aa8ee" stroke-width="2.9" opacity="0.85"/><line x1="153.6" y1="93.5" x2="209.6" y2="101.7" stroke="#b2d7fb" stroke-width="1" opacity="0.7"/><line x1="368.0" y1="157.4" x2="437.8" y2="175.2" stroke="#6aa8ee" stroke-width="2.1" opacity="0.85"/><line x1="368.0" y1="155.6" x2="437.8" y2="173.4" stroke="#b2d7fb" stroke-width="1" opacity="0.7"/><line x1="18.9" y1="42.5" x2="68.5" y2="56.4" stroke="#6aa8ee" stroke-width="2.4" opacity="0.85"/><line x1="18.9" y1="40.5" x2="68.5" y2="54.4" stroke="#b2d7fb" stroke-width="1" opacity="0.7"/><line x1="290.3" y1="133.9" x2="347.4" y2="148.2" stroke="#6aa8ee" stroke-width="2.5" opacity="0.85"/><line x1="290.3" y1="131.8" x2="347.4" y2="146.2" stroke="#b2d7fb" stroke-width="1" opacity="0.7"/><line x1="198.9" y1="113.2" x2="246.9" y2="119.1" stroke="#6aa8ee" stroke-width="2.5" opacity="0.85"/><line x1="198.9" y1="111.1" x2="246.9" y2="117.0" stroke="#b2d7fb" stroke-width="1" opacity="0.7"/><line x1="259.4" y1="125.0" x2="327.9" y2="140.1" stroke="#6aa8ee" stroke-width="1.7" opacity="0.85"/><line x1="259.4" y1="123.3" x2="327.9" y2="138.4" stroke="#b2d7fb" stroke-width="1" opacity="0.7"/><line x1="184.4" y1="95.7" x2="212.7" y2="104.8" stroke="#6aa8ee" stroke-width="1.8" opacity="0.85"/><line x1="184.4" y1="94.0" x2="212.7" y2="103.1" stroke="#b2d7fb" stroke-width="1" opacity="0.7"/><line x1="262.8" y1="116.3" x2="308.6" y2="132.3" stroke="#6aa8ee" stroke-width="1.6" opacity="0.85"/><line x1="262.8" y1="114.7" x2="308.6" y2="130.7" stroke="#b2d7fb" stroke-width="1" opacity="0.7"/><line x1="320.0" y1="126.5" x2="388.9" y2="149.0" stroke="#6aa8ee" stroke-width="2.2" opacity="0.85"/><line x1="320.0" y1="124.6" x2="388.9" y2="147.1" stroke="#b2d7fb" stroke-width="1" opacity="0.7"/><line x1="233.7" y1="119.1" x2="261.9" y2="124.4" stroke="#6aa8ee" stroke-width="2.2" opacity="0.85"/><line x1="233.7" y1="117.2" x2="261.9" y2="122.5" stroke="#b2d7fb" stroke-width="1" opacity="0.7"/><line x1="324.2" y1="131.6" x2="371.2" y2="141.8" stroke="#6aa8ee" stroke-width="2.3" opacity="0.85"/><line x1="324.2" y1="129.6" x2="371.2" y2="139.8" stroke="#b2d7fb" stroke-width="1" opacity="0.7"/><line x1="294.0" y1="140.9" x2="330.2" y2="153.1" stroke="#6aa8ee" stroke-width="2.4" opacity="0.85"/><line x1="294.0" y1="138.9" x2="330.2" y2="151.1" stroke="#b2d7fb" stroke-width="1" opacity="0.7"/></g></g><g clip-path="url(#zB)"><rect width="383" height="255" fill="#97c5f5"/><g filter="url(#bl2)" stroke="#67a5ec" stroke-linecap="round"><line x1="82.5" y1="79.8" x2="136.5" y2="87.1" stroke-width="2.3" opacity="0.75"/><line x1="90.4" y1="79.4" x2="115.8" y2="86.1" stroke-width="2.0" opacity="0.78"/><line x1="82.1" y1="80.3" x2="118.4" y2="94.2" stroke-width="2.5" opacity="0.67"/><line x1="414.1" y1="183.1" x2="444.2" y2="189.2" stroke-width="2.4" opacity="0.73"/><line x1="276.4" y1="152.3" x2="330.1" y2="163.5" stroke-width="2.6" opacity="0.73"/><line x1="143.5" y1="104.6" x2="182.0" y2="116.2" stroke-width="2.2" opacity="0.88"/><line x1="304.1" y1="158.4" x2="363.6" y2="165.8" stroke-width="1.5" opacity="0.85"/><line x1="84.5" y1="76.0" x2="107.4" y2="82.5" stroke-width="2.6" opacity="0.61"/><line x1="32.7" y1="56.0" x2="50.1" y2="59.9" stroke-width="2.1" opacity="0.89"/><line x1="259.6" y1="152.9" x2="301.2" y2="170.4" stroke-width="2.3" opacity="0.67"/><line x1="130.0" y1="97.7" x2="149.9" y2="106.2" stroke-width="2.1" opacity="0.66"/><line x1="186.1" y1="125.7" x2="213.4" y2="134.3" stroke-width="1.5" opacity="0.67"/><line x1="43.1" y1="64.6" x2="89.0" y2="73.5" stroke-width="2.4" opacity="0.78"/><line x1="307.9" y1="166.9" x2="337.9" y2="180.4" stroke-width="2.0" opacity="0.75"/><line x1="38.5" y1="58.9" x2="82.5" y2="65.7" stroke-width="1.4" opacity="0.63"/><line x1="210.0" y1="131.4" x2="236.8" y2="141.4" stroke-width="2.0" opacity="0.64"/><line x1="274.3" y1="158.0" x2="317.3" y2="169.5" stroke-width="2.2" opacity="0.81"/><line x1="348.9" y1="176.1" x2="375.1" y2="185.9" stroke-width="1.5" opacity="0.64"/><line x1="193.5" y1="123.9" x2="233.8" y2="132.5" stroke-width="2.7" opacity="0.73"/><line x1="338.3" y1="174.6" x2="373.7" y2="187.8" stroke-width="2.1" opacity="0.72"/><line x1="13.4" y1="55.2" x2="69.9" y2="74.8" stroke-width="1.8" opacity="0.76"/><line x1="122.5" y1="93.6" x2="172.3" y2="99.7" stroke-width="2.1" opacity="0.75"/><line x1="24.1" y1="59.6" x2="50.5" y2="66.3" stroke-width="1.7" opacity="0.78"/><line x1="157.5" y1="111.8" x2="191.6" y2="124.7" stroke-width="2.2" opacity="0.63"/><line x1="186.3" y1="121.2" x2="214.7" y2="133.5" stroke-width="2.1" opacity="0.82"/><line x1="28.3" y1="60.2" x2="48.6" y2="64.1" stroke-width="1.6" opacity="0.61"/><line x1="381.5" y1="186.2" x2="413.0" y2="190.1" stroke-width="2.4" opacity="0.80"/><line x1="-23.6" y1="51.8" x2="-5.6" y2="55.3" stroke-width="2.5" opacity="0.83"/><line x1="65.0" y1="72.9" x2="116.0" y2="89.2" stroke-width="2.1" opacity="0.66"/><line x1="-13.0" y1="46.2" x2="25.6" y2="58.4" stroke-width="2.0" opacity="0.79"/><line x1="220.1" y1="139.7" x2="253.6" y2="153.0" stroke-width="2.1" opacity="0.86"/><line x1="418.4" y1="185.5" x2="468.1" y2="202.8" stroke-width="2.2" opacity="0.67"/><line x1="3.1" y1="51.8" x2="29.3" y2="60.2" stroke-width="2.2" opacity="0.78"/><line x1="156.8" y1="107.7" x2="185.4" y2="117.8" stroke-width="2.6" opacity="0.70"/><line x1="102.5" y1="86.5" x2="136.8" y2="97.8" stroke-width="2.5" opacity="0.83"/><line x1="335.3" y1="171.9" x2="394.0" y2="187.7" stroke-width="2.0" opacity="0.80"/><line x1="102.5" y1="89.8" x2="136.3" y2="100.1" stroke-width="2.1" opacity="0.71"/><line x1="-40.0" y1="47.1" x2="-3.6" y2="62.9" stroke-width="1.6" opacity="0.87"/><line x1="412.2" y1="185.1" x2="439.7" y2="188.6" stroke-width="2.6" opacity="0.62"/><line x1="95.2" y1="88.0" x2="140.5" y2="105.8" stroke-width="2.6" opacity="0.65"/><line x1="192.1" y1="122.5" x2="224.1" y2="131.5" stroke-width="2.5" opacity="0.69"/><line x1="268.2" y1="149.2" x2="294.8" y2="152.9" stroke-width="2.2" opacity="0.78"/><line x1="290.1" y1="157.4" x2="347.3" y2="177.9" stroke-width="2.2" opacity="0.86"/><line x1="39.5" y1="61.2" x2="79.3" y2="73.9" stroke-width="2.7" opacity="0.80"/><line x1="-23.1" y1="53.5" x2="12.9" y2="60.2" stroke-width="2.5" opacity="0.79"/><line x1="356.7" y1="176.1" x2="383.2" y2="183.4" stroke-width="2.1" opacity="0.71"/><line x1="227.9" y1="138.5" x2="254.3" y2="142.7" stroke-width="1.4" opacity="0.76"/><line x1="301.6" y1="160.3" x2="357.2" y2="178.1" stroke-width="2.3" opacity="0.69"/><line x1="377.5" y1="180.0" x2="430.5" y2="190.6" stroke-width="2.7" opacity="0.80"/><line x1="38.9" y1="65.1" x2="60.9" y2="70.6" stroke-width="1.9" opacity="0.70"/><line x1="138.6" y1="103.2" x2="147.8" y2="80.2" stroke-width="1.5" opacity="0.75"/><line x1="304.8" y1="165.7" x2="316.4" y2="136.4" stroke-width="1.9" opacity="0.75"/><line x1="373.3" y1="190.2" x2="384.9" y2="161.1" stroke-width="2.4" opacity="0.75"/><line x1="349.9" y1="184.6" x2="359.2" y2="161.3" stroke-width="2.1" opacity="0.75"/><line x1="26.5" y1="62.6" x2="35.1" y2="41.0" stroke-width="2.1" opacity="0.75"/><line x1="2.9" y1="59.2" x2="9.5" y2="42.7" stroke-width="1.9" opacity="0.75"/><line x1="185.8" y1="132.6" x2="196.8" y2="105.0" stroke-width="1.6" opacity="0.75"/><line x1="255.2" y1="151.1" x2="266.2" y2="123.7" stroke-width="1.9" opacity="0.75"/><line x1="366.1" y1="183.1" x2="374.3" y2="162.7" stroke-width="1.8" opacity="0.75"/><line x1="366.7" y1="182.1" x2="374.7" y2="162.2" stroke-width="2.0" opacity="0.75"/><line x1="256.6" y1="159.9" x2="263.3" y2="143.3" stroke-width="1.8" opacity="0.75"/><line x1="276.9" y1="160.0" x2="288.4" y2="131.2" stroke-width="2.2" opacity="0.75"/><line x1="35.4" y1="62.2" x2="42.8" y2="43.6" stroke-width="1.8" opacity="0.75"/><line x1="69.8" y1="77.8" x2="76.7" y2="60.5" stroke-width="1.4" opacity="0.75"/><line x1="200.9" y1="138.4" x2="208.2" y2="120.2" stroke-width="1.5" opacity="0.75"/><line x1="278.9" y1="155.5" x2="286.0" y2="137.7" stroke-width="2.0" opacity="0.75"/><line x1="113.8" y1="100.2" x2="123.8" y2="75.1" stroke-width="2.0" opacity="0.75"/><line x1="143.3" y1="103.7" x2="155.9" y2="72.3" stroke-width="1.9" opacity="0.75"/><line x1="316.7" y1="165.9" x2="326.2" y2="142.2" stroke-width="2.0" opacity="0.75"/><line x1="59.2" y1="71.3" x2="72.7" y2="37.6" stroke-width="2.5" opacity="0.75"/><line x1="383.0" y1="188.7" x2="394.9" y2="159.1" stroke-width="2.1" opacity="0.75"/><line x1="182.9" y1="123.3" x2="194.0" y2="95.4" stroke-width="1.9" opacity="0.75"/><line x1="259.9" y1="150.0" x2="268.3" y2="129.1" stroke-width="1.5" opacity="0.75"/><line x1="292.2" y1="163.9" x2="300.5" y2="143.1" stroke-width="2.3" opacity="0.75"/><line x1="199.4" y1="132.1" x2="208.5" y2="109.3" stroke-width="1.4" opacity="0.75"/><line x1="23.2" y1="57.4" x2="36.8" y2="23.2" stroke-width="2.5" opacity="0.75"/><line x1="208.5" y1="144.0" x2="218.8" y2="118.2" stroke-width="2.2" opacity="0.75"/><line x1="40.1" y1="68.6" x2="51.0" y2="41.3" stroke-width="1.9" opacity="0.75"/><line x1="250.0" y1="151.0" x2="261.2" y2="122.9" stroke-width="1.6" opacity="0.75"/><line x1="187.5" y1="128.4" x2="197.7" y2="102.9" stroke-width="1.5" opacity="0.75"/></g></g><path d="M0.0 46.2 L6.0 48.2 L12.0 50.2 L18.0 52.2 L24.0 54.3 L30.0 56.6 L36.0 58.9 L42.0 61.2 L48.0 63.5 L54.0 65.8 L60.0 68.1 L66.0 70.4 L72.0 72.7 L78.0 75.0 L84.0 77.3 L90.0 79.6 L96.0 81.9 L102.0 84.2 L108.0 86.5 L114.0 88.8 L120.0 91.1 L126.0 93.6 L132.0 96.3 L138.0 99.0 L144.0 101.7 L150.0 104.4 L156.0 107.1 L162.0 109.8 L168.0 112.5 L174.0 115.2 L180.0 117.9 L186.0 120.6 L192.0 123.3 L198.0 126.0 L204.0 128.7 L210.0 131.4 L216.0 134.1 L222.0 136.8 L228.0 139.0 L234.0 140.6 L240.0 142.2 L246.0 143.8 L252.0 145.4 L258.0 147.0 L264.0 148.6 L270.0 150.2 L276.0 151.8 L282.0 153.4 L288.0 155.0 L294.0 156.6 L300.0 158.2 L306.0 159.8 L312.0 161.4 L318.0 163.0 L324.0 164.5 L330.0 166.1 L336.0 167.7 L342.0 169.3 L348.0 170.9 L354.0 172.5 L360.0 174.1 L366.0 175.7 L372.0 177.3 L378.0 178.9 L383.0 180.2" fill="none" stroke="#629fe8" stroke-width="2.2" filter="url(#bl2)" opacity="0.9"/><line x1="278" y1="156" x2="362" y2="155" stroke="#4d6f9a" stroke-width="0.9" opacity="0.6"/><circle cx="124.5" cy="66.8" r="0.9" fill="#c87896" opacity="0.8"/><circle cx="53" cy="151.2" r="0.9" fill="#c87896" opacity="0.8"/><circle cx="55" cy="157.2" r="0.9" fill="#c87896" opacity="0.8"/><circle cx="58" cy="163.2" r="0.9" fill="#c87896" opacity="0.8"/><circle cx="85" cy="188.2" r="0.9" fill="#c87896" opacity="0.8"/><circle cx="141" cy="193.2" r="0.9" fill="#c87896" opacity="0.8"/><text x="93.6" y="87.60000000000001" font-family="Liberation Sans" font-size="10" font-weight="700" fill="#1d9c3a">1</text><rect x="89.6" y="92.2" width="3.6" height="3.6" fill="none" stroke="#167a2c" stroke-width="1.1"/><text x="168.9" y="151.39999999999998" font-family="Liberation Sans" font-size="10" font-weight="700" fill="#1d9c3a">2</text><rect x="165.9" y="155.5" width="3.6" height="3.6" fill="none" stroke="#167a2c" stroke-width="1.1"/></svg>
<div class="ab" style="left:45px;top:282px;width:171px;height:17.4px;background:rgba(80,110,150,0.62);"></div>
<div class="t" style="left:24px;top:286.69px;font-size:10.286px;color:#f4f4f4;transform:scaleX(0.8769);transform-origin:0 0;">Quant Map</div>
<svg style="left:74px;top:287.5px" width="4" height="6"><path d="M3.6 0 V5.6 L0 2.8Z" fill="#f0f0f0"/></svg>
<div class="ab" style="left:83.25px;top:285px;width:1px;height:12px;background:rgba(220,230,240,0.45);"></div>
<div class="ab" style="left:162.5px;top:285px;width:1px;height:12px;background:rgba(220,230,240,0.45);"></div>
<div class="ab" style="left:179.5px;top:285px;width:1px;height:12px;background:rgba(220,230,240,0.45);"></div>
<div class="ab" style="left:197px;top:285px;width:1px;height:12px;background:rgba(220,230,240,0.45);"></div>
<div class="ab" style="left:89px;top:286px;width:13.5px;height:10px;background:#1e8ae6;"></div>
<div class="t" style="left:92.73px;top:287.98px;font-size:7.586px;color:#0b2d55;">Ti</div>
<div class="ab" style="left:108px;top:286px;width:13.6px;height:10px;background:#3ad23a;"></div>
<div class="t" style="left:110.16px;top:287.65px;font-size:7.971px;color:#0d3a0d;">Fe</div>
<div class="ab" style="left:126px;top:286px;width:14px;height:10px;background:#f4d21a;"></div>
<div class="t" style="left:128.14px;top:287.98px;font-size:7.586px;color:#3b3000;">Nb</div>
<div class="ab" style="left:144.5px;top:286px;width:13.5px;height:10px;background:#e51010;"></div>
<div class="t" style="left:147.87px;top:287.98px;font-size:7.586px;color:#5a0000;">Si</div>
<svg style="left:167px;top:285.5px" width="11" height="11"><path d="M8.3 2.6 A3.7 3.7 0 1 0 8.9 6.6" fill="none" stroke="#f4f4f4" stroke-width="1.6"/><path d="M6.2 0.8 L9.6 1.2 L9 4.6Z" fill="#f4f4f4"/></svg>
<svg style="left:183.5px;top:285px" width="12" height="12"><circle cx="5.6" cy="5.6" r="3.9" fill="none" stroke="#f4f4f4" stroke-width="1.4"/><path d="M5.6 0.2 V11 M0.2 5.6 H11" stroke="#f4f4f4" stroke-width="1.4"/></svg>
<div class="ab" style="left:204px;top:293.5px;width:1px;height:1px;background:#ddd;"></div>
<div class="ab" style="left:206px;top:293.5px;width:1px;height:1px;background:#ddd;"></div>
<div class="ab" style="left:208px;top:293.5px;width:1px;height:1px;background:#ddd;"></div>
<div class="ab" style="left:1.3px;top:315.4px;width:470.7px;height:20.4px;background:#1f5799;"></div>
<div class="ab" style="left:31.4px;top:316px;width:1px;height:19.8px;background:#5582bb;"></div>
<div class="ab" style="left:92px;top:316px;width:1px;height:19.8px;background:#5582bb;"></div>
<div class="ab" style="left:130.8px;top:316px;width:1px;height:19.8px;background:#5582bb;"></div>
<div class="ab" style="left:178.6px;top:316px;width:1px;height:19.8px;background:#5582bb;"></div>
<div class="ab" style="left:230.9px;top:316px;width:1px;height:19.8px;background:#5582bb;"></div>
<div class="ab" style="left:273.6px;top:316px;width:1px;height:19.8px;background:#5582bb;"></div>
<div class="ab" style="left:274.1px;top:325px;width:197.9px;height:0.8px;background:#5582bb;"></div>
<svg style="left:6px;top:317px" width="20" height="18"><g fill="none" stroke="#e8eef6" stroke-width="1.1"><ellipse cx="10" cy="9" rx="8.6" ry="3.2"/><ellipse cx="10" cy="9" rx="8.6" ry="3.2" transform="rotate(60 10 9)"/><ellipse cx="10" cy="9" rx="8.6" ry="3.2" transform="rotate(-60 10 9)"/></g><circle cx="10" cy="9" r="1.6" fill="#e8eef6"/><circle cx="15.5" cy="3.5" r="1" fill="#e8eef6"/><circle cx="4.5" cy="14.5" r="1" fill="#e8eef6"/></svg>
<div class="t" style="left:45.9px;top:317.61px;font-size:8.138px;color:#e6ecf4;transform:scaleX(0.9875);transform-origin:0 0;">2/7/2025</div>
<div class="t" style="left:38.9px;top:327.17px;font-size:8.429px;color:#e6ecf4;transform:scaleX(0.9086);transform-origin:0 0;">10:44:58 AM</div>
<div class="t" style="left:98.8px;top:317.61px;font-size:8.138px;color:#e6ecf4;transform:scaleX(0.9809);transform-origin:0 0;">dwell</div>
<div class="t" style="left:98.8px;top:327.06px;font-size:8.551px;color:#e6ecf4;font-weight:700;transform:scaleX(0.9133);transform-origin:0 0;">5.00 µs</div>
<div class="t" style="left:137.9px;top:317.98px;font-size:7.826px;color:#e6ecf4;transform:scaleX(0.8549);transform-origin:0 0;">HV</div>
<div class="t" style="left:137.9px;top:327.43px;font-size:8.000px;color:#e6ecf4;font-weight:700;transform:scaleX(0.9863);transform-origin:0 0;">20.00 kV</div>
<div class="t" style="left:185.9px;top:315.81px;font-size:10.385px;color:#e6ecf4;transform:scaleX(0.7575);transform-origin:0 0;">pressure</div>
<div class="t" style="left:185.9px;top:327.19px;font-size:8.286px;color:#e6ecf4;font-weight:700;transform:scaleX(0.9202);transform-origin:0 0;">9.79E-5 Pa</div>
<div class="t" style="left:237.8px;top:317.98px;font-size:7.826px;color:#e6ecf4;transform:scaleX(0.8911);transform-origin:0 0;">HFW</div>
<div class="t" style="left:237.8px;top:327.08px;font-size:8.406px;color:#e6ecf4;font-weight:700;transform:scaleX(0.9489);transform-origin:0 0;">200 µm</div>
<div class="ab" style="left:325.9px;top:319.6px;width:33.8px;height:1.2px;background:#f0f4f8;"></div>
<div class="ab" style="left:386.8px;top:319.6px;width:34.5px;height:1.2px;background:#f0f4f8;"></div>
<div class="ab" style="left:325.6px;top:316.8px;width:1.2px;height:7.8px;background:#f0f4f8;"></div>
<div class="ab" style="left:420.4px;top:316.8px;width:1.2px;height:7.8px;background:#f0f4f8;"></div>
<div class="t" style="left:362px;top:316.59px;font-size:8.286px;color:#e6ecf4;">50 µm</div>
<div class="t" style="left:337.82px;top:327.14px;font-size:8.690px;color:#e6ecf4;transform:scaleX(0.9200);transform-origin:0 0;">Apreo ChemiSEM S</div>
<div class="ab" style="left:472px;top:60px;width:472.5px;height:276px;background:#3d3d3d;"></div>
<div class="ab" style="left:472px;top:60px;width:1.7px;height:276px;background:#303030;"></div>
<div class="ab" style="left:473.7px;top:60px;width:470.8px;height:19px;background:#2f2f2f;"></div>
<div class="ab" style="left:476px;top:63px;width:55.8px;height:16px;background:#393939;"></div>
<div class="t" style="left:478.3px;top:67.34px;font-size:8.690px;color:#dedede;transform:scaleX(0.9074);transform-origin:0 0;">Periodic Table</div>
<div class="t" style="left:535.5px;top:67.34px;font-size:8.690px;color:#dedede;transform:scaleX(0.9873);transform-origin:0 0;">Composition</div>
<div class="t" style="left:590.7px;top:67.34px;font-size:8.690px;color:#dedede;transform:scaleX(0.9106);transform-origin:0 0;">Phase Statistics</div>
<div class="t" style="left:654.6px;top:67.34px;font-size:8.690px;color:#dedede;transform:scaleX(0.9590);transform-origin:0 0;">Properties</div>
<div class="ab" style="left:476.5px;top:79.2px;width:24.3px;height:25.8px;background:#505050;"></div>
<div class="t" style="left:484.97px;top:88.49px;font-size:11.000px;color:#6e6e6e;transform:scaleX(0.9300);transform-origin:0 0;">H</div>
<div class="ab" style="left:916.36px;top:79.2px;width:24.3px;height:25.8px;background:#505050;"></div>
<div class="t" style="left:921.96px;top:88.49px;font-size:11.000px;color:#6e6e6e;transform:scaleX(0.9300);transform-origin:0 0;">He</div>
<div class="ab" style="left:476.5px;top:106.16px;width:24.3px;height:25.8px;background:#505050;"></div>
<div class="t" style="left:484.66px;top:115.45px;font-size:11.000px;color:#6e6e6e;transform:scaleX(0.9300);transform-origin:0 0;">Li</div>
<div class="ab" style="left:501.59px;top:106.16px;width:24.3px;height:25.8px;background:#5c5c5c;"></div>
<div class="t" style="left:507.47px;top:115.45px;font-size:11.000px;color:#e4e4e4;transform:scaleX(0.9300);transform-origin:0 0;">Be</div>
<div class="ab" style="left:790.91px;top:106.16px;width:24.3px;height:25.8px;background:#5c5c5c;"></div>
<div class="t" style="left:799.66px;top:115.45px;font-size:11.000px;color:#e4e4e4;transform:scaleX(0.9300);transform-origin:0 0;">B</div>
<div class="ab" style="left:816px;top:106.16px;width:24.3px;height:25.8px;background:#fde39c;"></div>
<div class="t" style="left:824.47px;top:115.45px;font-size:11.000px;color:#3c3a33;transform:scaleX(0.9300);transform-origin:0 0;">C</div>
<div class="ab" style="left:841.09px;top:106.16px;width:24.3px;height:25.8px;background:#4a4a4a;"></div>
<div class="ab" style="left:842.09px;top:107.16px;width:22.3px;height:23.8px;background:#363636;"></div>
<div class="t" style="left:849.56px;top:115.45px;font-size:11.000px;color:#555555;transform:scaleX(0.9300);transform-origin:0 0;">N</div>
<div class="ab" style="left:866.18px;top:106.16px;width:24.3px;height:25.8px;background:#5c5c5c;"></div>
<div class="t" style="left:874.34px;top:115.45px;font-size:11.000px;color:#e4e4e4;transform:scaleX(0.9300);transform-origin:0 0;">O</div>
<div class="ab" style="left:891.27px;top:106.16px;width:24.3px;height:25.8px;background:#4a4a4a;"></div>
<div class="ab" style="left:892.27px;top:107.16px;width:22.3px;height:23.8px;background:#363636;"></div>
<div class="t" style="left:900.3px;top:115.45px;font-size:11.000px;color:#555555;transform:scaleX(0.9300);transform-origin:0 0;">F</div>
<div class="ab" style="left:916.36px;top:106.16px;width:24.3px;height:25.8px;background:#505050;"></div>
<div class="t" style="left:921.96px;top:115.45px;font-size:11.000px;color:#6e6e6e;transform:scaleX(0.9300);transform-origin:0 0;">Ne</div>
<div class="ab" style="left:476.5px;top:133.12px;width:24.3px;height:25.8px;background:#5c5c5c;"></div>
<div class="t" style="left:482.1px;top:142.41px;font-size:11.000px;color:#e4e4e4;transform:scaleX(0.9300);transform-origin:0 0;">Na</div>
<div class="ab" style="left:501.59px;top:133.12px;width:24.3px;height:25.8px;background:#5c5c5c;"></div>
<div class="t" style="left:506.63px;top:142.41px;font-size:11.000px;color:#e4e4e4;transform:scaleX(0.9300);transform-origin:0 0;">Mg</div>
<div class="ab" style="left:790.91px;top:133.12px;width:24.3px;height:25.8px;background:#4a4a4a;"></div>
<div class="ab" style="left:791.91px;top:134.12px;width:22.3px;height:23.8px;background:#363636;"></div>
<div class="t" style="left:798.51px;top:142.41px;font-size:11.000px;color:#555555;transform:scaleX(0.9300);transform-origin:0 0;">Al</div>
<div class="ab" style="left:816px;top:133.12px;width:24.3px;height:25.8px;background:#fde39c;"></div>
<div class="t" style="left:823.6px;top:142.41px;font-size:11.000px;color:#3c3a33;transform:scaleX(0.9300);transform-origin:0 0;">Si</div>
<div class="ab" style="left:841.09px;top:133.12px;width:24.3px;height:25.8px;background:#5c5c5c;"></div>
<div class="t" style="left:849.84px;top:142.41px;font-size:11.000px;color:#e4e4e4;transform:scaleX(0.9300);transform-origin:0 0;">P</div>
<div class="ab" style="left:866.18px;top:133.12px;width:24.3px;height:25.8px;background:#5c5c5c;"></div>
<div class="t" style="left:874.93px;top:142.41px;font-size:11.000px;color:#e4e4e4;transform:scaleX(0.9300);transform-origin:0 0;">S</div>
<div class="ab" style="left:891.27px;top:133.12px;width:24.3px;height:25.8px;background:#5c5c5c;"></div>
<div class="t" style="left:898.59px;top:142.41px;font-size:11.000px;color:#e4e4e4;transform:scaleX(0.9300);transform-origin:0 0;">Cl</div>
<div class="ab" style="left:916.36px;top:133.12px;width:24.3px;height:25.8px;background:#5c5c5c;"></div>
<div class="t" style="left:923.39px;top:142.41px;font-size:11.000px;color:#e4e4e4;transform:scaleX(0.9300);transform-origin:0 0;">Ar</div>
<div class="ab" style="left:476.5px;top:160.08px;width:24.3px;height:25.8px;background:#5c5c5c;"></div>
<div class="t" style="left:485.25px;top:169.37px;font-size:11.000px;color:#e4e4e4;transform:scaleX(0.9300);transform-origin:0 0;">K</div>
<div class="ab" style="left:501.59px;top:160.08px;width:24.3px;height:25.8px;background:#5c5c5c;"></div>
<div class="t" style="left:507.19px;top:169.37px;font-size:11.000px;color:#e4e4e4;transform:scaleX(0.9300);transform-origin:0 0;">Ca</div>
<div class="ab" style="left:526.68px;top:160.08px;width:24.3px;height:25.8px;background:#5c5c5c;"></div>
<div class="t" style="left:532.87px;top:169.37px;font-size:11.000px;color:#e4e4e4;transform:scaleX(0.9300);transform-origin:0 0;">Sc</div>
<div class="ab" style="left:565.1px;top:160.08px;width:24.3px;height:25.8px;background:#fde39c;"></div>
<div class="t" style="left:573.18px;top:169.37px;font-size:11.000px;color:#3c3a33;transform:scaleX(0.9300);transform-origin:0 0;">Ti</div>
<div class="ab" style="left:590.19px;top:160.08px;width:24.3px;height:25.8px;background:#5c5c5c;"></div>
<div class="t" style="left:598.94px;top:169.37px;font-size:11.000px;color:#e4e4e4;transform:scaleX(0.9300);transform-origin:0 0;">V</div>
<div class="ab" style="left:615.28px;top:160.08px;width:24.3px;height:25.8px;background:#5c5c5c;"></div>
<div class="t" style="left:622.03px;top:169.37px;font-size:11.000px;color:#e4e4e4;transform:scaleX(0.9300);transform-origin:0 0;">Cr</div>
<div class="ab" style="left:640.37px;top:160.08px;width:24.3px;height:25.8px;background:#5c5c5c;"></div>
<div class="t" style="left:645.41px;top:169.37px;font-size:11.000px;color:#e4e4e4;transform:scaleX(0.9300);transform-origin:0 0;">Mn</div>
<div class="ab" style="left:665.46px;top:160.08px;width:24.3px;height:25.8px;background:#fde39c;"></div>
<div class="t" style="left:671.65px;top:169.37px;font-size:11.000px;color:#3c3a33;transform:scaleX(0.9300);transform-origin:0 0;">Fe</div>
<div class="ab" style="left:690.55px;top:160.08px;width:24.3px;height:25.8px;background:#5c5c5c;"></div>
<div class="t" style="left:696.15px;top:169.37px;font-size:11.000px;color:#e4e4e4;transform:scaleX(0.9300);transform-origin:0 0;">Co</div>
<div class="ab" style="left:715.64px;top:160.08px;width:24.3px;height:25.8px;background:#5c5c5c;"></div>
<div class="t" style="left:722.96px;top:169.37px;font-size:11.000px;color:#e4e4e4;transform:scaleX(0.9300);transform-origin:0 0;">Ni</div>
<div class="ab" style="left:740.73px;top:160.08px;width:24.3px;height:25.8px;background:#5c5c5c;"></div>
<div class="t" style="left:746.33px;top:169.37px;font-size:11.000px;color:#e4e4e4;transform:scaleX(0.9300);transform-origin:0 0;">Cu</div>
<div class="ab" style="left:765.82px;top:160.08px;width:24.3px;height:25.8px;background:#5c5c5c;"></div>
<div class="t" style="left:772.01px;top:169.37px;font-size:11.000px;color:#e4e4e4;transform:scaleX(0.9300);transform-origin:0 0;">Zn</div>
<div class="ab" style="left:790.91px;top:160.08px;width:24.3px;height:25.8px;background:#5c5c5c;"></div>
<div class="t" style="left:796.21px;top:169.37px;font-size:11.000px;color:#e4e4e4;transform:scaleX(0.9300);transform-origin:0 0;">Ga</div>
<div class="ab" style="left:816px;top:160.08px;width:24.3px;height:25.8px;background:#5c5c5c;"></div>
<div class="t" style="left:821.32px;top:169.37px;font-size:11.000px;color:#e4e4e4;transform:scaleX(0.9300);transform-origin:0 0;">Ge</div>
<div class="ab" style="left:841.09px;top:160.08px;width:24.3px;height:25.8px;background:#5c5c5c;"></div>
<div class="t" style="left:847.28px;top:169.37px;font-size:11.000px;color:#e4e4e4;transform:scaleX(0.9300);transform-origin:0 0;">As</div>
<div class="ab" style="left:866.18px;top:160.08px;width:24.3px;height:25.8px;background:#5c5c5c;"></div>
<div class="t" style="left:872.06px;top:169.37px;font-size:11.000px;color:#e4e4e4;transform:scaleX(0.9300);transform-origin:0 0;">Se</div>
<div class="ab" style="left:891.27px;top:160.08px;width:24.3px;height:25.8px;background:#5c5c5c;"></div>
<div class="t" style="left:898.3px;top:169.37px;font-size:11.000px;color:#e4e4e4;transform:scaleX(0.9300);transform-origin:0 0;">Br</div>
<div class="ab" style="left:916.36px;top:160.08px;width:24.3px;height:25.8px;background:#505050;"></div>
<div class="t" style="left:923.39px;top:169.37px;font-size:11.000px;color:#6e6e6e;transform:scaleX(0.9300);transform-origin:0 0;">Kr</div>
<div class="ab" style="left:476.5px;top:187.04px;width:24.3px;height:25.8px;background:#5c5c5c;"></div>
<div class="t" style="left:482.1px;top:196.33px;font-size:11.000px;color:#e4e4e4;transform:scaleX(0.9300);transform-origin:0 0;">Rb</div>
<div class="ab" style="left:501.59px;top:187.04px;width:24.3px;height:25.8px;background:#5c5c5c;"></div>
<div class="t" style="left:508.62px;top:196.33px;font-size:11.000px;color:#e4e4e4;transform:scaleX(0.9300);transform-origin:0 0;">Sr</div>
<div class="ab" style="left:526.68px;top:187.04px;width:24.3px;height:25.8px;background:#5c5c5c;"></div>
<div class="t" style="left:535.43px;top:196.33px;font-size:11.000px;color:#e4e4e4;transform:scaleX(0.9300);transform-origin:0 0;">Y</div>
<div class="ab" style="left:565.1px;top:187.04px;width:24.3px;height:25.8px;background:#5c5c5c;"></div>
<div class="t" style="left:572.42px;top:196.33px;font-size:11.000px;color:#e4e4e4;transform:scaleX(0.9300);transform-origin:0 0;">Zr</div>
<div class="ab" style="left:590.19px;top:187.04px;width:24.3px;height:25.8px;background:#fde39c;"></div>
<div class="t" style="left:595.79px;top:196.33px;font-size:11.000px;color:#3c3a33;transform:scaleX(0.9300);transform-origin:0 0;">Nb</div>
<div class="ab" style="left:615.28px;top:187.04px;width:24.3px;height:25.8px;background:#5c5c5c;"></div>
<div class="t" style="left:620.32px;top:196.33px;font-size:11.000px;color:#e4e4e4;transform:scaleX(0.9300);transform-origin:0 0;">Mo</div>
<div class="ab" style="left:640.37px;top:187.04px;width:24.3px;height:25.8px;background:#5c5c5c;"></div>
<div class="t" style="left:647.4px;top:196.33px;font-size:11.000px;color:#e4e4e4;transform:scaleX(0.9300);transform-origin:0 0;">Tc</div>
<div class="ab" style="left:665.46px;top:187.04px;width:24.3px;height:25.8px;background:#4a4a4a;"></div>
<div class="ab" style="left:666.46px;top:188.04px;width:22.3px;height:23.8px;background:#363636;"></div>
<div class="t" style="left:671.06px;top:196.33px;font-size:11.000px;color:#555555;transform:scaleX(0.9300);transform-origin:0 0;">Ru</div>
<div class="ab" style="left:690.55px;top:187.04px;width:24.3px;height:25.8px;background:#5c5c5c;"></div>
<div class="t" style="left:696.15px;top:196.33px;font-size:11.000px;color:#e4e4e4;transform:scaleX(0.9300);transform-origin:0 0;">Rh</div>
<div class="ab" style="left:715.64px;top:187.04px;width:24.3px;height:25.8px;background:#5c5c5c;"></div>
<div class="t" style="left:721.52px;top:196.33px;font-size:11.000px;color:#e4e4e4;transform:scaleX(0.9300);transform-origin:0 0;">Pd</div>
<div class="ab" style="left:740.73px;top:187.04px;width:24.3px;height:25.8px;background:#5c5c5c;"></div>
<div class="t" style="left:746.61px;top:196.33px;font-size:11.000px;color:#e4e4e4;transform:scaleX(0.9300);transform-origin:0 0;">Ag</div>
<div class="ab" style="left:765.82px;top:187.04px;width:24.3px;height:25.8px;background:#5c5c5c;"></div>
<div class="t" style="left:771.42px;top:196.33px;font-size:11.000px;color:#e4e4e4;transform:scaleX(0.9300);transform-origin:0 0;">Cd</div>
<div class="ab" style="left:790.91px;top:187.04px;width:24.3px;height:25.8px;background:#5c5c5c;"></div>
<div class="t" style="left:798.79px;top:196.33px;font-size:11.000px;color:#e4e4e4;transform:scaleX(0.9300);transform-origin:0 0;">In</div>
<div class="ab" style="left:816px;top:187.04px;width:24.3px;height:25.8px;background:#5c5c5c;"></div>
<div class="t" style="left:821.88px;top:196.33px;font-size:11.000px;color:#e4e4e4;transform:scaleX(0.9300);transform-origin:0 0;">Sn</div>
<div class="ab" style="left:841.09px;top:187.04px;width:24.3px;height:25.8px;background:#5c5c5c;"></div>
<div class="t" style="left:846.97px;top:196.33px;font-size:11.000px;color:#e4e4e4;transform:scaleX(0.9300);transform-origin:0 0;">Sb</div>
<div class="ab" style="left:866.18px;top:187.04px;width:24.3px;height:25.8px;background:#5c5c5c;"></div>
<div class="t" style="left:872.93px;top:196.33px;font-size:11.000px;color:#e4e4e4;transform:scaleX(0.9300);transform-origin:0 0;">Te</div>
<div class="ab" style="left:891.27px;top:187.04px;width:24.3px;height:25.8px;background:#5c5c5c;"></div>
<div class="t" style="left:901.99px;top:196.33px;font-size:11.000px;color:#e4e4e4;transform:scaleX(0.9300);transform-origin:0 0;">I</div>
<div class="ab" style="left:916.36px;top:187.04px;width:24.3px;height:25.8px;background:#505050;"></div>
<div class="t" style="left:922.24px;top:196.33px;font-size:11.000px;color:#6e6e6e;transform:scaleX(0.9300);transform-origin:0 0;">Xe</div>
<div class="ab" style="left:476.5px;top:214px;width:24.3px;height:25.8px;background:#5c5c5c;"></div>
<div class="t" style="left:482.41px;top:223.29px;font-size:11.000px;color:#e4e4e4;transform:scaleX(0.9300);transform-origin:0 0;">Cs</div>
<div class="ab" style="left:501.59px;top:214px;width:24.3px;height:25.8px;background:#5c5c5c;"></div>
<div class="t" style="left:507.47px;top:223.29px;font-size:11.000px;color:#e4e4e4;transform:scaleX(0.9300);transform-origin:0 0;">Ba</div>
<div class="ab" style="left:565.1px;top:214px;width:24.3px;height:25.8px;background:#5c5c5c;"></div>
<div class="t" style="left:572.13px;top:223.29px;font-size:11.000px;color:#e4e4e4;transform:scaleX(0.9300);transform-origin:0 0;">Hf</div>
<div class="ab" style="left:590.19px;top:214px;width:24.3px;height:25.8px;background:#5c5c5c;"></div>
<div class="t" style="left:596.92px;top:223.29px;font-size:11.000px;color:#e4e4e4;transform:scaleX(0.9300);transform-origin:0 0;">Ta</div>
<div class="ab" style="left:615.28px;top:214px;width:24.3px;height:25.8px;background:#5c5c5c;"></div>
<div class="t" style="left:622.6px;top:223.29px;font-size:11.000px;color:#e4e4e4;transform:scaleX(0.9300);transform-origin:0 0;">W</div>
<div class="ab" style="left:640.37px;top:214px;width:24.3px;height:25.8px;background:#5c5c5c;"></div>
<div class="t" style="left:645.97px;top:223.29px;font-size:11.000px;color:#e4e4e4;transform:scaleX(0.9300);transform-origin:0 0;">Re</div>
<div class="ab" style="left:665.46px;top:214px;width:24.3px;height:25.8px;background:#5c5c5c;"></div>
<div class="t" style="left:671.06px;top:223.29px;font-size:11.000px;color:#e4e4e4;transform:scaleX(0.9300);transform-origin:0 0;">Os</div>
<div class="ab" style="left:690.55px;top:214px;width:24.3px;height:25.8px;background:#5c5c5c;"></div>
<div class="t" style="left:699.58px;top:223.29px;font-size:11.000px;color:#e4e4e4;transform:scaleX(0.9300);transform-origin:0 0;">Ir</div>
<div class="ab" style="left:715.64px;top:214px;width:24.3px;height:25.8px;background:#5c5c5c;"></div>
<div class="t" style="left:722.96px;top:223.29px;font-size:11.000px;color:#e4e4e4;transform:scaleX(0.9300);transform-origin:0 0;">Pt</div>
<div class="ab" style="left:740.73px;top:214px;width:24.3px;height:25.8px;background:#4a4a4a;"></div>
<div class="ab" style="left:741.73px;top:215px;width:22.3px;height:23.8px;background:#363636;"></div>
<div class="t" style="left:746.61px;top:223.29px;font-size:11.000px;color:#555555;transform:scaleX(0.9300);transform-origin:0 0;">Au</div>
<div class="ab" style="left:765.82px;top:214px;width:24.3px;height:25.8px;background:#4a4a4a;"></div>
<div class="ab" style="left:766.82px;top:215px;width:22.3px;height:23.8px;background:#363636;"></div>
<div class="t" style="left:771.42px;top:223.29px;font-size:11.000px;color:#555555;transform:scaleX(0.9300);transform-origin:0 0;">Hg</div>
<div class="ab" style="left:790.91px;top:214px;width:24.3px;height:25.8px;background:#5c5c5c;"></div>
<div class="t" style="left:798.79px;top:223.29px;font-size:11.000px;color:#e4e4e4;transform:scaleX(0.9300);transform-origin:0 0;">Tl</div>
<div class="ab" style="left:816px;top:214px;width:24.3px;height:25.8px;background:#5c5c5c;"></div>
<div class="t" style="left:821.88px;top:223.29px;font-size:11.000px;color:#e4e4e4;transform:scaleX(0.9300);transform-origin:0 0;">Pb</div>
<div class="ab" style="left:841.09px;top:214px;width:24.3px;height:25.8px;background:#5c5c5c;"></div>
<div class="t" style="left:848.69px;top:223.29px;font-size:11.000px;color:#e4e4e4;transform:scaleX(0.9300);transform-origin:0 0;">Bi</div>
<div class="ab" style="left:866.18px;top:214px;width:24.3px;height:25.8px;background:#505050;"></div>
<div class="t" style="left:872.06px;top:223.29px;font-size:11.000px;color:#6e6e6e;transform:scaleX(0.9300);transform-origin:0 0;">Po</div>
<div class="ab" style="left:891.27px;top:214px;width:24.3px;height:25.8px;background:#505050;"></div>
<div class="t" style="left:898.59px;top:223.29px;font-size:11.000px;color:#6e6e6e;transform:scaleX(0.9300);transform-origin:0 0;">At</div>
<div class="ab" style="left:916.36px;top:214px;width:24.3px;height:25.8px;background:#505050;"></div>
<div class="t" style="left:921.96px;top:223.29px;font-size:11.000px;color:#6e6e6e;transform:scaleX(0.9300);transform-origin:0 0;">Rn</div>
<div class="ab" style="left:526.68px;top:254.3px;width:24.3px;height:25.8px;background:#5c5c5c;"></div>
<div class="t" style="left:533.13px;top:263.59px;font-size:11.000px;color:#e4e4e4;transform:scaleX(0.9300);transform-origin:0 0;">La</div>
<div class="ab" style="left:565.1px;top:254.3px;width:24.3px;height:25.8px;background:#5c5c5c;"></div>
<div class="t" style="left:570.7px;top:263.59px;font-size:11.000px;color:#e4e4e4;transform:scaleX(0.9300);transform-origin:0 0;">Ce</div>
<div class="ab" style="left:590.19px;top:254.3px;width:24.3px;height:25.8px;background:#5c5c5c;"></div>
<div class="t" style="left:597.23px;top:263.59px;font-size:11.000px;color:#e4e4e4;transform:scaleX(0.9300);transform-origin:0 0;">Pr</div>
<div class="ab" style="left:615.28px;top:254.3px;width:24.3px;height:25.8px;background:#5c5c5c;"></div>
<div class="t" style="left:620.88px;top:263.59px;font-size:11.000px;color:#e4e4e4;transform:scaleX(0.9300);transform-origin:0 0;">Nd</div>
<div class="ab" style="left:640.37px;top:254.3px;width:24.3px;height:25.8px;background:#5c5c5c;"></div>
<div class="t" style="left:644.85px;top:263.59px;font-size:11.000px;color:#e4e4e4;transform:scaleX(0.9300);transform-origin:0 0;">Pm</div>
<div class="ab" style="left:665.46px;top:254.3px;width:24.3px;height:25.8px;background:#5c5c5c;"></div>
<div class="t" style="left:669.94px;top:263.59px;font-size:11.000px;color:#e4e4e4;transform:scaleX(0.9300);transform-origin:0 0;">Sm</div>
<div class="ab" style="left:690.55px;top:254.3px;width:24.3px;height:25.8px;background:#5c5c5c;"></div>
<div class="t" style="left:696.43px;top:263.59px;font-size:11.000px;color:#e4e4e4;transform:scaleX(0.9300);transform-origin:0 0;">Eu</div>
<div class="ab" style="left:715.64px;top:254.3px;width:24.3px;height:25.8px;background:#5c5c5c;"></div>
<div class="t" style="left:720.96px;top:263.59px;font-size:11.000px;color:#e4e4e4;transform:scaleX(0.9300);transform-origin:0 0;">Gd</div>
<div class="ab" style="left:740.73px;top:254.3px;width:24.3px;height:25.8px;background:#5c5c5c;"></div>
<div class="t" style="left:746.92px;top:263.59px;font-size:11.000px;color:#e4e4e4;transform:scaleX(0.9300);transform-origin:0 0;">Tb</div>
<div class="ab" style="left:765.82px;top:254.3px;width:24.3px;height:25.8px;background:#5c5c5c;"></div>
<div class="t" style="left:771.73px;top:263.59px;font-size:11.000px;color:#e4e4e4;transform:scaleX(0.9300);transform-origin:0 0;">Dy</div>
<div class="ab" style="left:790.91px;top:254.3px;width:24.3px;height:25.8px;background:#5c5c5c;"></div>
<div class="t" style="left:796.51px;top:263.59px;font-size:11.000px;color:#e4e4e4;transform:scaleX(0.9300);transform-origin:0 0;">Ho</div>
<div class="ab" style="left:816px;top:254.3px;width:24.3px;height:25.8px;background:#5c5c5c;"></div>
<div class="t" style="left:823.03px;top:263.59px;font-size:11.000px;color:#e4e4e4;transform:scaleX(0.9300);transform-origin:0 0;">Er</div>
<div class="ab" style="left:841.09px;top:254.3px;width:24.3px;height:25.8px;background:#5c5c5c;"></div>
<div class="t" style="left:845.85px;top:263.59px;font-size:11.000px;color:#e4e4e4;transform:scaleX(0.9300);transform-origin:0 0;">Tm</div>
<div class="ab" style="left:866.18px;top:254.3px;width:24.3px;height:25.8px;background:#5c5c5c;"></div>
<div class="t" style="left:872.06px;top:263.59px;font-size:11.000px;color:#e4e4e4;transform:scaleX(0.9300);transform-origin:0 0;">Yb</div>
<div class="ab" style="left:891.27px;top:254.3px;width:24.3px;height:25.8px;background:#5c5c5c;"></div>
<div class="t" style="left:897.74px;top:263.59px;font-size:11.000px;color:#e4e4e4;transform:scaleX(0.9300);transform-origin:0 0;">Lu</div>
<div class="ab" style="left:526.68px;top:281.2px;width:24.3px;height:25.8px;background:#505050;"></div>
<div class="t" style="left:532.87px;top:290.49px;font-size:11.000px;color:#6e6e6e;transform:scaleX(0.9300);transform-origin:0 0;">Ac</div>
<div class="ab" style="left:565.1px;top:281.2px;width:24.3px;height:25.8px;background:#5c5c5c;"></div>
<div class="t" style="left:571.29px;top:290.49px;font-size:11.000px;color:#e4e4e4;transform:scaleX(0.9300);transform-origin:0 0;">Th</div>
<div class="ab" style="left:590.19px;top:281.2px;width:24.3px;height:25.8px;background:#505050;"></div>
<div class="t" style="left:596.07px;top:290.49px;font-size:11.000px;color:#6e6e6e;transform:scaleX(0.9300);transform-origin:0 0;">Pa</div>
<div class="ab" style="left:615.28px;top:281.2px;width:24.3px;height:25.8px;background:#4a4a4a;"></div>
<div class="ab" style="left:616.28px;top:282.2px;width:22.3px;height:23.8px;background:#363636;"></div>
<div class="t" style="left:623.75px;top:290.49px;font-size:11.000px;color:#555555;transform:scaleX(0.9300);transform-origin:0 0;">U</div>
<div class="ab" style="left:640.37px;top:281.2px;width:24.3px;height:25.8px;background:#5c5c5c;"></div>
<div class="t" style="left:645.97px;top:290.49px;font-size:11.000px;color:#e4e4e4;transform:scaleX(0.9300);transform-origin:0 0;">Np</div>
<div class="ab" style="left:665.46px;top:281.2px;width:24.3px;height:25.8px;background:#5c5c5c;"></div>
<div class="t" style="left:671.34px;top:290.49px;font-size:11.000px;color:#e4e4e4;transform:scaleX(0.9300);transform-origin:0 0;">Pu</div>
<div class="ab" style="left:690.55px;top:281.2px;width:24.3px;height:25.8px;background:#5c5c5c;"></div>
<div class="t" style="left:695.03px;top:290.49px;font-size:11.000px;color:#e4e4e4;transform:scaleX(0.9300);transform-origin:0 0;">Am</div>
<div class="ab" style="left:715.64px;top:281.2px;width:24.3px;height:25.8px;background:#505050;"></div>
<div class="t" style="left:719.84px;top:290.49px;font-size:11.000px;color:#6e6e6e;transform:scaleX(0.9300);transform-origin:0 0;">Cm</div>
<div class="ab" style="left:740.73px;top:281.2px;width:24.3px;height:25.8px;background:#505050;"></div>
<div class="t" style="left:746.9px;top:290.49px;font-size:11.000px;color:#6e6e6e;transform:scaleX(0.9300);transform-origin:0 0;">Bk</div>
<div class="ab" style="left:765.82px;top:281.2px;width:24.3px;height:25.8px;background:#505050;"></div>
<div class="t" style="left:772.86px;top:290.49px;font-size:11.000px;color:#6e6e6e;transform:scaleX(0.9300);transform-origin:0 0;">Cf</div>
<div class="ab" style="left:790.91px;top:281.2px;width:24.3px;height:25.8px;background:#505050;"></div>
<div class="t" style="left:797.1px;top:290.49px;font-size:11.000px;color:#6e6e6e;transform:scaleX(0.9300);transform-origin:0 0;">Es</div>
<div class="ab" style="left:816px;top:281.2px;width:24.3px;height:25.8px;background:#505050;"></div>
<div class="t" style="left:820.76px;top:290.49px;font-size:11.000px;color:#6e6e6e;transform:scaleX(0.9300);transform-origin:0 0;">Fm</div>
<div class="ab" style="left:841.09px;top:281.2px;width:24.3px;height:25.8px;background:#505050;"></div>
<div class="t" style="left:846.13px;top:290.49px;font-size:11.000px;color:#6e6e6e;transform:scaleX(0.9300);transform-origin:0 0;">Md</div>
<div class="ab" style="left:866.18px;top:281.2px;width:24.3px;height:25.8px;background:#505050;"></div>
<div class="t" style="left:871.78px;top:290.49px;font-size:11.000px;color:#6e6e6e;transform:scaleX(0.9300);transform-origin:0 0;">No</div>
<div class="ab" style="left:891.27px;top:281.2px;width:24.3px;height:25.8px;background:#505050;"></div>
<div class="t" style="left:898.87px;top:290.49px;font-size:11.000px;color:#6e6e6e;transform:scaleX(0.9300);transform-origin:0 0;">Lr</div>
<div class="ab" style="left:703.1px;top:91px;width:74.1px;height:12.6px;background:#5c5c5c;"></div>
<div class="t" style="left:717.59px;top:93.22px;font-size:8.841px;color:#dcdcdc;">Run AutoID</div>
<div class="ab" style="left:703.1px;top:109.7px;width:74.1px;height:12.1px;background:#5c5c5c;"></div>
<div class="t" style="left:724.53px;top:112.18px;font-size:8.414px;color:#dcdcdc;">Clear All</div>
<div class="ab" style="left:590.9px;top:318.5px;width:9.1px;height:8.8px;background:#fde39c;"></div>
<div class="t" style="left:603.5px;top:318.93px;font-size:8.828px;color:#d8d8d8;transform:scaleX(0.9149);transform-origin:0 0;">Selected by User</div>
<div class="ab" style="left:708.2px;top:318.5px;width:9.1px;height:8.8px;background:#f5b335;"></div>
<div class="t" style="left:720.4px;top:318.93px;font-size:8.828px;color:#d8d8d8;transform:scaleX(0.9510);transform-origin:0 0;">Selected by AutoID</div>
<div class="ab" style="left:825.5px;top:318.5px;width:8.5px;height:8.8px;background:#3a3a3a;border:1px solid #5a5a5a"></div>
<div class="t" style="left:837.8px;top:318.93px;font-size:8.828px;color:#d8d8d8;transform:scaleX(0.9559);transform-origin:0 0;">Excluded from AutoID</div>
<div class="ab" style="left:473.7px;top:329.8px;width:470.8px;height:0.8px;background:#434343;"></div>
<div class="ab" style="left:1.3px;top:336px;width:942.7px;height:276.4px;background:#3c3c3c;"></div>
<div class="ab" style="left:1.3px;top:336px;width:942.7px;height:19.5px;background:#313131;"></div>
<div class="ab" style="left:4.6px;top:338px;width:41.7px;height:17.5px;background:#393939;"></div>
<div class="t" style="left:7.7px;top:344.04px;font-size:8.696px;color:#dedede;transform:scaleX(0.9350);transform-origin:0 0;">Spectrum</div>
<div class="t" style="left:50.3px;top:344.04px;font-size:8.696px;color:#dedede;transform:scaleX(0.9863);transform-origin:0 0;">Quant Maps</div>
<div class="t" style="left:104.8px;top:344.04px;font-size:8.696px;color:#dedede;transform:scaleX(0.9857);transform-origin:0 0;">Count Maps</div>
<div class="t" style="left:158.7px;top:344.04px;font-size:8.696px;color:#dedede;transform:scaleX(0.9890);transform-origin:0 0;">Component Maps</div>
<div class="t" style="left:234px;top:344.04px;font-size:8.696px;color:#dedede;transform:scaleX(0.9411);transform-origin:0 0;">Phase Maps</div>
<div class="ab" style="left:0px;top:612.4px;width:1176px;height:2.3px;background:#262626;"></div>
<div class="ab" style="left:33.7px;top:584.5px;width:3.4px;height:1px;background:#d0d0d0;"></div>
<div class="ab" style="left:34.7px;top:575.96px;width:2.4px;height:1px;background:#b8b8b8;"></div>
<div class="ab" style="left:34.7px;top:567.42px;width:2.4px;height:1px;background:#b8b8b8;"></div>
<div class="ab" style="left:34.7px;top:558.88px;width:2.4px;height:1px;background:#b8b8b8;"></div>
<div class="ab" style="left:34.7px;top:550.34px;width:2.4px;height:1px;background:#b8b8b8;"></div>
<div class="ab" style="left:33.7px;top:541.8px;width:3.4px;height:1px;background:#d0d0d0;"></div>
<div class="ab" style="left:34.7px;top:533.26px;width:2.4px;height:1px;background:#b8b8b8;"></div>
<div class="ab" style="left:34.7px;top:524.72px;width:2.4px;height:1px;background:#b8b8b8;"></div>
<div class="ab" style="left:34.7px;top:516.18px;width:2.4px;height:1px;background:#b8b8b8;"></div>
<div class="ab" style="left:34.7px;top:507.64px;width:2.4px;height:1px;background:#b8b8b8;"></div>
<div class="ab" style="left:33.7px;top:499.1px;width:3.4px;height:1px;background:#d0d0d0;"></div>
<div class="ab" style="left:34.7px;top:490.56px;width:2.4px;height:1px;background:#b8b8b8;"></div>
<div class="ab" style="left:34.7px;top:482.02px;width:2.4px;height:1px;background:#b8b8b8;"></div>
<div class="ab" style="left:34.7px;top:473.48px;width:2.4px;height:1px;background:#b8b8b8;"></div>
<div class="ab" style="left:34.7px;top:464.94px;width:2.4px;height:1px;background:#b8b8b8;"></div>
<div class="ab" style="left:33.7px;top:456.4px;width:3.4px;height:1px;background:#d0d0d0;"></div>
<div class="ab" style="left:34.7px;top:447.86px;width:2.4px;height:1px;background:#b8b8b8;"></div>
<div class="ab" style="left:34.7px;top:439.32px;width:2.4px;height:1px;background:#b8b8b8;"></div>
<div class="ab" style="left:34.7px;top:430.78px;width:2.4px;height:1px;background:#b8b8b8;"></div>
<div class="ab" style="left:34.7px;top:422.24px;width:2.4px;height:1px;background:#b8b8b8;"></div>
<div class="ab" style="left:33.7px;top:413.7px;width:3.4px;height:1px;background:#d0d0d0;"></div>
<div class="ab" style="left:34.7px;top:405.16px;width:2.4px;height:1px;background:#b8b8b8;"></div>
<div class="ab" style="left:34.7px;top:396.62px;width:2.4px;height:1px;background:#b8b8b8;"></div>
<div class="ab" style="left:34.7px;top:388.08px;width:2.4px;height:1px;background:#b8b8b8;"></div>
<div class="ab" style="left:34.7px;top:379.54px;width:2.4px;height:1px;background:#b8b8b8;"></div>
<div class="ab" style="left:33.7px;top:371px;width:3.4px;height:1px;background:#d0d0d0;"></div>
<div class="t" style="left:15.51px;top:367.62px;font-size:8.600px;color:#e0e0e0;transform:scaleX(0.9500);transform-origin:0 0;">10M</div>
<div class="t" style="left:20.04px;top:410.32px;font-size:8.600px;color:#e0e0e0;transform:scaleX(0.9500);transform-origin:0 0;">8M</div>
<div class="t" style="left:20.04px;top:453.02px;font-size:8.600px;color:#e0e0e0;transform:scaleX(0.9500);transform-origin:0 0;">6M</div>
<div class="t" style="left:20.04px;top:495.72px;font-size:8.600px;color:#e0e0e0;transform:scaleX(0.9500);transform-origin:0 0;">4M</div>
<div class="t" style="left:20.04px;top:538.42px;font-size:8.600px;color:#e0e0e0;transform:scaleX(0.9500);transform-origin:0 0;">2M</div>
<div class="t" style="left:26.63px;top:575.42px;font-size:8.600px;color:#e0e0e0;">0</div>
<svg style="left:0;top:0" width="1176" height="632"><path d="M37.2 585.0 L37.2 585.00 L37.7 584.68 L38.2 584.36 L38.7 584.04 L39.2 583.71 L39.7 583.39 L40.2 583.10 L40.7 582.85 L41.2 582.60 L41.7 582.35 L42.2 582.10 L42.7 581.85 L43.2 581.60 L43.7 581.35 L44.2 581.11 L44.7 580.90 L45.2 580.68 L45.7 580.44 L46.2 580.10 L46.7 579.51 L47.2 578.34 L47.7 576.27 L48.2 573.35 L48.7 570.29 L49.2 568.19 L49.7 567.93 L50.2 569.21 L50.7 570.66 L51.2 570.76 L51.7 568.64 L52.2 564.17 L52.7 557.75 L53.2 550.09 L53.7 542.17 L54.2 535.19 L54.7 530.36 L55.2 528.60 L55.7 530.24 L56.2 534.94 L56.7 541.80 L57.2 549.62 L57.7 557.25 L58.2 563.85 L58.7 569.00 L59.2 572.65 L59.7 575.01 L60.2 576.43 L60.7 577.22 L61.2 577.62 L61.7 577.81 L62.2 577.88 L62.7 577.90 L63.2 577.90 L63.7 577.88 L64.2 577.86 L64.7 577.83 L65.2 577.76 L65.7 577.63 L66.2 577.41 L66.7 577.05 L67.2 576.55 L67.7 575.95 L68.2 575.35 L68.7 574.90 L69.2 574.72 L69.7 574.87 L70.2 575.29 L70.7 575.86 L71.2 576.43 L71.7 576.90 L72.2 577.23 L72.7 577.42 L73.2 577.52 L73.7 577.56 L74.2 577.56 L74.7 577.56 L75.2 577.54 L75.7 577.53 L76.2 577.51 L76.7 577.50 L77.2 577.48 L77.7 577.47 L78.2 577.45 L78.7 577.44 L79.2 577.42 L79.7 577.41 L80.2 577.40 L80.7 577.40 L81.2 577.41 L81.7 577.41 L82.2 577.41 L82.7 577.42 L83.2 577.42 L83.7 577.42 L84.2 577.43 L84.7 577.43 L85.2 577.43 L85.7 577.43 L86.2 577.44 L86.7 577.44 L87.2 577.44 L87.7 577.45 L88.2 577.45 L88.7 577.45 L89.2 577.46 L89.7 577.46 L90.2 577.46 L90.7 577.46 L91.2 577.47 L91.7 577.47 L92.2 577.47 L92.7 577.48 L93.2 577.48 L93.7 577.48 L94.2 577.49 L94.7 577.49 L95.2 577.49 L95.7 577.49 L96.2 577.50 L96.7 577.50 L97.2 577.50 L97.7 577.51 L98.2 577.51 L98.7 577.51 L99.2 577.52 L99.7 577.52 L100.2 577.52 L100.7 577.52 L101.2 577.53 L101.7 577.53 L102.2 577.53 L102.7 577.54 L103.2 577.54 L103.7 577.54 L104.2 577.55 L104.7 577.55 L105.2 577.55 L105.7 577.55 L106.2 577.56 L106.7 577.56 L107.2 577.56 L107.7 577.56 L108.2 577.56 L108.7 577.56 L109.2 577.55 L109.7 577.53 L110.2 577.50 L110.7 577.46 L111.2 577.40 L111.7 577.31 L112.2 577.20 L112.7 577.07 L113.2 576.92 L113.7 576.75 L114.2 576.59 L114.7 576.44 L115.2 576.32 L115.7 576.24 L116.2 576.22 L116.7 576.25 L117.2 576.33 L117.7 576.46 L118.2 576.61 L118.7 576.78 L119.2 576.95 L119.7 577.11 L120.2 577.25 L120.7 577.37 L121.2 577.46 L121.7 577.53 L122.2 577.57 L122.7 577.61 L123.2 577.63 L123.7 577.65 L124.2 577.66 L124.7 577.66 L125.2 577.67 L125.7 577.67 L126.2 577.66 L126.7 577.65 L127.2 577.62 L127.7 577.55 L128.2 577.42 L128.7 577.17 L129.2 576.74 L129.7 576.03 L130.2 574.96 L130.7 573.42 L131.2 571.32 L131.7 568.66 L132.2 565.52 L132.7 562.09 L133.2 558.68 L133.7 555.64 L134.2 553.34 L134.7 552.04 L135.2 551.87 L135.7 552.80 L136.2 554.62 L136.7 557.01 L137.2 559.64 L137.7 562.21 L138.2 564.51 L138.7 566.44 L139.2 567.99 L139.7 569.24 L140.2 570.27 L140.7 571.17 L141.2 572.01 L141.7 572.82 L142.2 573.62 L142.7 574.40 L143.2 575.14 L143.7 575.82 L144.2 576.43 L144.7 576.95 L145.2 577.38 L145.7 577.74 L146.2 578.01 L146.7 578.23 L147.2 578.39 L147.7 578.51 L148.2 578.60 L148.7 578.66 L149.2 578.72 L149.7 578.76 L150.2 578.79 L150.7 578.81 L151.2 578.83 L151.7 578.85 L152.2 578.86 L152.7 578.88 L153.2 578.89 L153.7 578.90 L154.2 578.90 L154.7 578.89 L155.2 578.88 L155.7 578.85 L156.2 578.80 L156.7 578.72 L157.2 578.63 L157.7 578.50 L158.2 578.35 L158.7 578.19 L159.2 578.02 L159.7 577.87 L160.2 577.74 L160.7 577.66 L161.2 577.64 L161.7 577.67 L162.2 577.76 L162.7 577.90 L163.2 578.07 L163.7 578.26 L164.2 578.46 L164.7 578.65 L165.2 578.81 L165.7 578.95 L166.2 579.07 L166.7 579.16 L167.2 579.22 L167.7 579.27 L168.2 579.31 L168.7 579.34 L169.2 579.37 L169.7 579.39 L170.2 579.40 L170.7 579.42 L171.2 579.44 L171.7 579.45 L172.2 579.47 L172.7 579.48 L173.2 579.50 L173.7 579.51 L174.2 579.53 L174.7 579.54 L175.2 579.56 L175.7 579.57 L176.2 579.59 L176.7 579.60 L177.2 579.62 L177.7 579.63 L178.2 579.65 L178.7 579.66 L179.2 579.68 L179.7 579.69 L180.2 579.71 L180.7 579.72 L181.2 579.74 L181.7 579.75 L182.2 579.77 L182.7 579.78 L183.2 579.80 L183.7 579.81 L184.2 579.83 L184.7 579.84 L185.2 579.86 L185.7 579.87 L186.2 579.89 L186.7 579.90 L187.2 579.92 L187.7 579.93 L188.2 579.95 L188.7 579.96 L189.2 579.98 L189.7 579.99 L190.2 580.01 L190.7 580.02 L191.2 580.04 L191.7 580.05 L192.2 580.07 L192.7 580.08 L193.2 580.10 L193.7 580.11 L194.2 580.13 L194.7 580.14 L195.2 580.16 L195.7 580.17 L196.2 580.19 L196.7 580.20 L197.2 580.22 L197.7 580.23 L198.2 580.25 L198.7 580.26 L199.2 580.28 L199.7 580.29 L200.2 580.30 L200.7 580.31 L201.2 580.32 L201.7 580.32 L202.2 580.33 L202.7 580.34 L203.2 580.34 L203.7 580.35 L204.2 580.36 L204.7 580.36 L205.2 580.37 L205.7 580.38 L206.2 580.38 L206.7 580.39 L207.2 580.40 L207.7 580.40 L208.2 580.41 L208.7 580.42 L209.2 580.42 L209.7 580.43 L210.2 580.44 L210.7 580.44 L211.2 580.45 L211.7 580.46 L212.2 580.46 L212.7 580.47 L213.2 580.48 L213.7 580.48 L214.2 580.49 L214.7 580.50 L215.2 580.50 L215.7 580.51 L216.2 580.52 L216.7 580.52 L217.2 580.53 L217.7 580.54 L218.2 580.54 L218.7 580.55 L219.2 580.56 L219.7 580.56 L220.2 580.57 L220.7 580.58 L221.2 580.58 L221.7 580.59 L222.2 580.60 L222.7 580.60 L223.2 580.61 L223.7 580.62 L224.2 580.62 L224.7 580.63 L225.2 580.64 L225.7 580.64 L226.2 580.65 L226.7 580.65 L227.2 580.66 L227.7 580.65 L228.2 580.64 L228.7 580.61 L229.2 580.55 L229.7 580.44 L230.2 580.22 L230.7 579.85 L231.2 579.22 L231.7 578.19 L232.2 576.57 L232.7 574.10 L233.2 570.46 L233.7 565.30 L234.2 558.22 L234.7 548.84 L235.2 536.90 L235.7 522.24 L236.2 504.96 L236.7 485.47 L237.2 464.47 L237.7 442.99 L238.2 422.33 L238.7 403.91 L239.2 389.14 L239.7 379.21 L240.2 374.98 L240.7 376.81 L241.2 384.55 L241.7 397.53 L242.2 414.67 L242.7 434.62 L243.2 455.95 L243.7 477.30 L244.2 497.52 L244.7 515.76 L245.2 531.51 L245.7 544.55 L246.2 554.94 L246.7 562.91 L247.2 568.81 L247.7 573.02 L248.2 575.93 L248.7 577.87 L249.2 579.12 L249.7 579.89 L250.2 580.33 L250.7 580.56 L251.2 580.62 L251.7 580.52 L252.2 580.27 L252.7 579.82 L253.2 579.10 L253.7 578.06 L254.2 576.62 L254.7 574.73 L255.2 572.38 L255.7 569.62 L256.2 566.58 L256.7 563.45 L257.2 560.47 L257.7 557.94 L258.2 556.12 L258.7 555.21 L259.2 555.32 L259.7 556.44 L260.2 558.44 L260.7 561.10 L261.2 564.14 L261.7 567.29 L262.2 570.30 L262.7 573.00 L263.2 575.27 L263.7 577.09 L264.2 578.46 L264.7 579.46 L265.2 580.14 L265.7 580.59 L266.2 580.88 L266.7 581.05 L267.2 581.15 L267.7 581.21 L268.2 581.25 L268.7 581.27 L269.2 581.28 L269.7 581.29 L270.2 581.30 L270.7 581.31 L271.2 581.31 L271.7 581.32 L272.2 581.32 L272.7 581.33 L273.2 581.33 L273.7 581.34 L274.2 581.34 L274.7 581.35 L275.2 581.35 L275.7 581.36 L276.2 581.36 L276.7 581.37 L277.2 581.37 L277.7 581.38 L278.2 581.38 L278.7 581.39 L279.2 581.39 L279.7 581.40 L280.2 581.40 L280.7 581.41 L281.2 581.41 L281.7 581.42 L282.2 581.42 L282.7 581.43 L283.2 581.43 L283.7 581.44 L284.2 581.44 L284.7 581.45 L285.2 581.45 L285.7 581.46 L286.2 581.46 L286.7 581.47 L287.2 581.47 L287.7 581.48 L288.2 581.48 L288.7 581.49 L289.2 581.49 L289.7 581.50 L290.2 581.50 L290.7 581.51 L291.2 581.51 L291.7 581.52 L292.2 581.52 L292.7 581.53 L293.2 581.53 L293.7 581.54 L294.2 581.54 L294.7 581.55 L295.2 581.55 L295.7 581.56 L296.2 581.56 L296.7 581.57 L297.2 581.57 L297.7 581.58 L298.2 581.58 L298.7 581.59 L299.2 581.59 L299.7 581.60 L300.2 581.60 L300.7 581.61 L301.2 581.61 L301.7 581.62 L302.2 581.62 L302.7 581.63 L303.2 581.63 L303.7 581.64 L304.2 581.64 L304.7 581.65 L305.2 581.65 L305.7 581.66 L306.2 581.66 L306.7 581.67 L307.2 581.67 L307.7 581.68 L308.2 581.68 L308.7 581.69 L309.2 581.69 L309.7 581.70 L310.2 581.70 L310.7 581.71 L311.2 581.71 L311.7 581.72 L312.2 581.72 L312.7 581.73 L313.2 581.73 L313.7 581.74 L314.2 581.74 L314.7 581.74 L315.2 581.75 L315.7 581.74 L316.2 581.74 L316.7 581.72 L317.2 581.69 L317.7 581.64 L318.2 581.56 L318.7 581.44 L319.2 581.27 L319.7 581.04 L320.2 580.73 L320.7 580.35 L321.2 579.90 L321.7 579.40 L322.2 578.88 L322.7 578.38 L323.2 577.94 L323.7 577.60 L324.2 577.39 L324.7 577.35 L325.2 577.47 L325.7 577.74 L326.2 578.14 L326.7 578.62 L327.2 579.14 L327.7 579.67 L328.2 580.16 L328.7 580.59 L329.2 580.95 L329.7 581.24 L330.2 581.45 L330.7 581.61 L331.2 581.71 L331.7 581.77 L332.2 581.80 L332.7 581.79 L333.2 581.76 L333.7 581.70 L334.2 581.62 L334.7 581.50 L335.2 581.36 L335.7 581.19 L336.2 581.02 L336.7 580.84 L337.2 580.68 L337.7 580.55 L338.2 580.46 L338.7 580.44 L339.2 580.47 L339.7 580.56 L340.2 580.69 L340.7 580.86 L341.2 581.04 L341.7 581.22 L342.2 581.39 L342.7 581.54 L343.2 581.66 L343.7 581.75 L344.2 581.83 L344.7 581.88 L345.2 581.91 L345.7 581.93 L346.2 581.94 L346.7 581.95 L347.2 581.94 L347.7 581.93 L348.2 581.91 L348.7 581.87 L349.2 581.82 L349.7 581.75 L350.2 581.67 L350.7 581.57 L351.2 581.45 L351.7 581.34 L352.2 581.22 L352.7 581.12 L353.2 581.05 L353.7 581.01 L354.2 581.00 L354.7 581.04 L355.2 581.11 L355.7 581.21 L356.2 581.33 L356.7 581.45 L357.2 581.57 L357.7 581.68 L358.2 581.77 L358.7 581.85 L359.2 581.91 L359.7 581.95 L360.2 581.98 L360.7 582.00 L361.2 582.01 L361.7 582.02 L362.2 582.03 L362.7 582.03 L363.2 582.04 L363.7 582.04 L364.2 582.04 L364.7 582.04 L365.2 582.05 L365.7 582.05 L366.2 582.05 L366.7 582.05 L367.2 582.05 L367.7 582.06 L368.2 582.06 L368.7 582.06 L369.2 582.06 L369.7 582.07 L370.2 582.07 L370.7 582.07 L371.2 582.07 L371.7 582.07 L372.2 582.08 L372.7 582.08 L373.2 582.08 L373.7 582.08 L374.2 582.08 L374.7 582.09 L375.2 582.09 L375.7 582.09 L376.2 582.09 L376.7 582.09 L377.2 582.10 L377.7 582.10 L378.2 582.10 L378.7 582.10 L379.2 582.11 L379.7 582.11 L380.2 582.11 L380.7 582.11 L381.2 582.11 L381.7 582.12 L382.2 582.12 L382.7 582.12 L383.2 582.12 L383.7 582.12 L384.2 582.13 L384.7 582.13 L385.2 582.13 L385.7 582.13 L386.2 582.13 L386.7 582.14 L387.2 582.14 L387.7 582.14 L388.2 582.14 L388.7 582.14 L389.2 582.15 L389.7 582.15 L390.2 582.15 L390.7 582.15 L391.2 582.15 L391.7 582.16 L392.2 582.16 L392.7 582.16 L393.2 582.16 L393.7 582.17 L394.2 582.17 L394.7 582.17 L395.2 582.17 L395.7 582.17 L396.2 582.18 L396.7 582.18 L397.2 582.18 L397.7 582.18 L398.2 582.18 L398.7 582.19 L399.2 582.19 L399.7 582.19 L400.2 582.19 L400.7 582.19 L401.2 582.20 L401.7 582.20 L402.2 582.20 L402.7 582.20 L403.2 582.21 L403.7 582.21 L404.2 582.21 L404.7 582.21 L405.2 582.21 L405.7 582.22 L406.2 582.22 L406.7 582.22 L407.2 582.22 L407.7 582.22 L408.2 582.23 L408.7 582.23 L409.2 582.23 L409.7 582.23 L410.2 582.23 L410.7 582.24 L411.2 582.24 L411.7 582.24 L412.2 582.24 L412.7 582.24 L413.2 582.25 L413.7 582.25 L414.2 582.25 L414.7 582.25 L415.2 582.25 L415.7 582.26 L416.2 582.26 L416.7 582.26 L417.2 582.26 L417.7 582.27 L418.2 582.27 L418.7 582.27 L419.2 582.27 L419.7 582.27 L420.2 582.28 L420.7 582.28 L421.2 582.28 L421.7 582.28 L422.2 582.28 L422.7 582.29 L423.2 582.29 L423.7 582.29 L424.2 582.29 L424.7 582.29 L425.2 582.30 L425.7 582.30 L426.2 582.30 L426.7 582.30 L427.2 582.30 L427.7 582.31 L428.2 582.31 L428.7 582.31 L429.2 582.31 L429.7 582.31 L430.2 582.32 L430.7 582.32 L431.2 582.32 L431.7 582.32 L432.2 582.32 L432.7 582.31 L433.2 582.30 L433.7 582.28 L434.2 582.26 L434.7 582.22 L435.2 582.17 L435.7 582.10 L436.2 582.00 L436.7 581.88 L437.2 581.73 L437.7 581.56 L438.2 581.36 L438.7 581.15 L439.2 580.93 L439.7 580.72 L440.2 580.52 L440.7 580.36 L441.2 580.24 L441.7 580.18 L442.2 580.17 L442.7 580.23 L443.2 580.34 L443.7 580.50 L444.2 580.69 L444.7 580.91 L445.2 581.13 L445.7 581.35 L446.2 581.56 L446.7 581.74 L447.2 581.90 L447.7 582.03 L448.2 582.13 L448.7 582.21 L449.2 582.27 L449.7 582.31 L450.2 582.34 L450.7 582.37 L451.2 582.38 L451.7 582.38 L452.2 582.38 L452.7 582.37 L453.2 582.36 L453.7 582.34 L454.2 582.30 L454.7 582.26 L455.2 582.21 L455.7 582.15 L456.2 582.08 L456.7 582.01 L457.2 581.93 L457.7 581.86 L458.2 581.79 L458.7 581.73 L459.2 581.69 L459.7 581.67 L460.2 581.67 L460.7 581.69 L461.2 581.74 L461.7 581.80 L462.2 581.87 L462.7 581.95 L463.2 582.04 L463.7 582.12 L464.2 582.19 L464.7 582.26 L465.2 582.32 L465.7 582.37 L466.2 582.41 L466.7 582.45 L467.2 582.47 L467.7 582.49 L468.2 582.50 L468.7 582.51 L469.2 582.52 L469.7 582.53 L470.2 582.53 L470.7 582.54 L471.2 582.54 L471.7 582.54 L472.2 582.55 L472.7 582.55 L473.2 582.55 L473.7 582.56 L474.2 582.56 L474.7 582.56 L475.2 582.57 L475.7 582.57 L476.2 582.57 L476.7 582.58 L477.2 582.58 L477.7 582.58 L478.2 582.59 L478.7 582.59 L479.2 582.59 L479.7 582.60 L480.2 582.60 L480.7 582.60 L481.2 582.61 L481.7 582.61 L482.2 582.61 L482.7 582.62 L483.2 582.62 L483.7 582.62 L484.2 582.63 L484.7 582.63 L485.2 582.63 L485.7 582.64 L486.2 582.64 L486.7 582.64 L487.2 582.65 L487.7 582.65 L488.2 582.65 L488.7 582.66 L489.2 582.66 L489.7 582.66 L490.2 582.67 L490.7 582.67 L491.2 582.67 L491.7 582.68 L492.2 582.68 L492.7 582.68 L493.2 582.69 L493.7 582.69 L494.2 582.69 L494.7 582.70 L495.2 582.70 L495.7 582.70 L496.2 582.71 L496.7 582.71 L497.2 582.71 L497.7 582.72 L498.2 582.72 L498.7 582.72 L499.2 582.73 L499.7 582.73 L500.2 582.73 L500.7 582.74 L501.2 582.74 L501.7 582.74 L502.2 582.75 L502.7 582.75 L503.2 582.75 L503.7 582.76 L504.2 582.76 L504.7 582.76 L505.2 582.77 L505.7 582.77 L506.2 582.77 L506.7 582.78 L507.2 582.78 L507.7 582.78 L508.2 582.79 L508.7 582.79 L509.2 582.79 L509.7 582.80 L510.2 582.80 L510.7 582.80 L511.2 582.81 L511.7 582.81 L512.2 582.81 L512.7 582.82 L513.2 582.82 L513.7 582.82 L514.2 582.83 L514.7 582.83 L515.2 582.83 L515.7 582.84 L516.2 582.84 L516.7 582.84 L517.2 582.85 L517.7 582.85 L518.2 582.85 L518.7 582.86 L519.2 582.86 L519.7 582.86 L520.2 582.87 L520.7 582.87 L521.2 582.87 L521.7 582.88 L522.2 582.88 L522.7 582.88 L523.2 582.89 L523.7 582.89 L524.2 582.89 L524.7 582.90 L525.2 582.90 L525.7 582.90 L526.2 582.91 L526.7 582.91 L527.2 582.91 L527.7 582.92 L528.2 582.92 L528.7 582.92 L529.2 582.93 L529.7 582.93 L530.2 582.93 L530.7 582.94 L531.2 582.94 L531.7 582.94 L532.2 582.95 L532.7 582.95 L533.2 582.95 L533.7 582.96 L534.2 582.96 L534.7 582.96 L535.2 582.97 L535.7 582.97 L536.2 582.97 L536.7 582.98 L537.2 582.98 L537.7 582.98 L538.2 582.99 L538.7 582.99 L539.2 582.99 L539.7 583.00 L540.2 583.00 L540.7 583.00 L541.2 583.00 L541.7 583.00 L542.2 583.00 L542.7 583.00 L543.2 583.00 L543.7 583.00 L544.2 583.00 L544.7 583.00 L545.2 583.00 L545.7 583.00 L546.2 583.00 L546.7 583.01 L547.2 583.01 L547.7 583.01 L548.2 583.01 L548.7 583.01 L549.2 583.01 L549.7 583.01 L550.2 583.01 L550.7 583.01 L551.2 583.01 L551.7 583.01 L552.2 583.01 L552.7 583.01 L553.2 583.01 L553.7 583.01 L554.2 583.01 L554.7 583.01 L555.2 583.01 L555.7 583.01 L556.2 583.01 L556.7 583.01 L557.2 583.01 L557.7 583.01 L558.2 583.01 L558.7 583.01 L559.2 583.01 L559.7 583.01 L560.2 583.02 L560.7 583.02 L561.2 583.02 L561.7 583.02 L562.2 583.02 L562.7 583.02 L563.2 583.02 L563.7 583.02 L564.2 583.02 L564.7 583.02 L565.2 583.02 L565.7 583.02 L566.2 583.02 L566.7 583.02 L567.2 583.02 L567.7 583.02 L568.2 583.02 L568.7 583.02 L569.2 583.02 L569.7 583.02 L570.2 583.02 L570.7 583.02 L571.2 583.02 L571.7 583.02 L572.2 583.02 L572.7 583.02 L573.2 583.03 L573.7 583.03 L574.2 583.03 L574.7 583.03 L575.2 583.03 L575.7 583.03 L576.2 583.03 L576.7 583.03 L577.2 583.03 L577.7 583.03 L578.2 583.03 L578.7 583.03 L579.2 583.03 L579.7 583.03 L580.2 583.03 L580.7 583.03 L581.2 583.03 L581.7 583.03 L582.2 583.03 L582.7 583.03 L583.2 583.03 L583.7 583.03 L584.2 583.03 L584.7 583.03 L585.2 583.03 L585.7 583.03 L586.2 583.03 L586.7 583.04 L587.2 583.04 L587.7 583.04 L588.2 583.04 L588.7 583.04 L589.2 583.04 L589.7 583.04 L590.2 583.04 L590.7 583.04 L591.2 583.04 L591.7 583.04 L592.2 583.04 L592.7 583.04 L593.2 583.04 L593.7 583.04 L594.2 583.04 L594.7 583.04 L595.2 583.04 L595.7 583.04 L596.2 583.04 L596.7 583.04 L597.2 583.04 L597.7 583.04 L598.2 583.04 L598.7 583.04 L599.2 583.04 L599.7 583.05 L600.2 583.05 L600.7 583.05 L601.2 583.05 L601.7 583.05 L602.2 583.05 L602.7 583.05 L603.2 583.05 L603.7 583.05 L604.2 583.05 L604.7 583.05 L605.2 583.05 L605.7 583.05 L606.2 583.05 L606.7 583.05 L607.2 583.05 L607.7 583.05 L608.2 583.05 L608.7 583.05 L609.2 583.05 L609.7 583.05 L610.2 583.05 L610.7 583.05 L611.2 583.05 L611.7 583.05 L612.2 583.05 L612.7 583.06 L613.2 583.06 L613.7 583.06 L614.2 583.06 L614.7 583.06 L615.2 583.06 L615.7 583.06 L616.2 583.06 L616.7 583.06 L617.2 583.06 L617.7 583.06 L618.2 583.06 L618.7 583.06 L619.2 583.06 L619.7 583.06 L620.2 583.06 L620.7 583.06 L621.2 583.06 L621.7 583.06 L622.2 583.06 L622.7 583.06 L623.2 583.06 L623.7 583.06 L624.2 583.06 L624.7 583.06 L625.2 583.06 L625.7 583.06 L626.2 583.07 L626.7 583.07 L627.2 583.07 L627.7 583.07 L628.2 583.07 L628.7 583.07 L629.2 583.07 L629.7 583.07 L630.2 583.07 L630.7 583.07 L631.2 583.07 L631.7 583.07 L632.2 583.07 L632.7 583.07 L633.2 583.07 L633.7 583.07 L634.2 583.07 L634.7 583.07 L635.2 583.07 L635.7 583.07 L636.2 583.07 L636.7 583.07 L637.2 583.07 L637.7 583.07 L638.2 583.07 L638.7 583.07 L639.2 583.08 L639.7 583.08 L640.2 583.08 L640.7 583.08 L641.2 583.08 L641.7 583.08 L642.2 583.08 L642.7 583.08 L643.2 583.08 L643.7 583.08 L644.2 583.08 L644.7 583.08 L645.2 583.08 L645.7 583.08 L646.2 583.08 L646.7 583.08 L647.2 583.08 L647.7 583.08 L648.2 583.08 L648.7 583.08 L649.2 583.08 L649.7 583.08 L650.2 583.08 L650.7 583.08 L651.2 583.08 L651.7 583.08 L652.2 583.09 L652.7 583.09 L653.2 583.09 L653.7 583.09 L654.2 583.09 L654.7 583.09 L655.2 583.09 L655.7 583.09 L656.2 583.09 L656.7 583.09 L657.2 583.09 L657.7 583.09 L658.2 583.09 L658.7 583.09 L659.2 583.09 L659.7 583.09 L660.2 583.09 L660.7 583.09 L661.2 583.09 L661.7 583.09 L662.2 583.09 L662.7 583.09 L663.2 583.09 L663.7 583.09 L664.2 583.09 L664.7 583.09 L665.2 583.09 L665.7 583.10 L666.2 583.10 L666.7 583.10 L667.2 583.10 L667.7 583.10 L668.2 583.10 L668.7 583.10 L669.2 583.10 L669.7 583.10 L670.2 583.10 L670.7 583.10 L671.2 583.10 L671.7 583.10 L672.2 583.10 L672.7 583.10 L673.2 583.10 L673.7 583.10 L674.2 583.10 L674.7 583.10 L675.2 583.10 L675.7 583.10 L676.2 583.10 L676.7 583.10 L677.2 583.10 L677.7 583.10 L678.2 583.10 L678.7 583.11 L679.2 583.11 L679.7 583.11 L680.2 583.11 L680.7 583.11 L681.2 583.11 L681.7 583.11 L682.2 583.11 L682.7 583.11 L683.2 583.11 L683.7 583.11 L684.2 583.11 L684.7 583.11 L685.2 583.11 L685.7 583.11 L686.2 583.11 L686.7 583.11 L687.2 583.11 L687.7 583.11 L688.2 583.11 L688.7 583.11 L689.2 583.11 L689.7 583.11 L690.2 583.11 L690.7 583.11 L691.2 583.11 L691.7 583.11 L692.2 583.12 L692.7 583.12 L693.2 583.12 L693.7 583.12 L694.2 583.12 L694.7 583.12 L695.2 583.12 L695.7 583.12 L696.2 583.12 L696.7 583.12 L697.2 583.12 L697.7 583.12 L698.2 583.12 L698.7 583.12 L699.2 583.12 L699.7 583.12 L700.2 583.12 L700.7 583.12 L701.2 583.12 L701.7 583.12 L702.2 583.12 L702.7 583.12 L703.2 583.12 L703.7 583.12 L704.2 583.12 L704.7 583.12 L705.2 583.13 L705.7 583.13 L706.2 583.13 L706.7 583.13 L707.2 583.13 L707.7 583.13 L708.2 583.13 L708.7 583.13 L709.2 583.13 L709.7 583.13 L710.2 583.13 L710.7 583.13 L711.2 583.13 L711.7 583.13 L712.2 583.13 L712.7 583.13 L713.2 583.13 L713.7 583.13 L714.2 583.13 L714.7 583.13 L715.2 583.13 L715.7 583.13 L716.2 583.13 L716.7 583.13 L717.2 583.13 L717.7 583.13 L718.2 583.13 L718.7 583.14 L719.2 583.14 L719.7 583.14 L720.2 583.14 L720.7 583.14 L721.2 583.14 L721.7 583.14 L722.2 583.14 L722.7 583.14 L723.2 583.14 L723.7 583.14 L724.2 583.14 L724.7 583.14 L725.2 583.14 L725.7 583.14 L726.2 583.14 L726.7 583.14 L727.2 583.14 L727.7 583.14 L728.2 583.14 L728.7 583.14 L729.2 583.14 L729.7 583.14 L730.2 583.14 L730.7 583.14 L731.2 583.14 L731.7 583.15 L732.2 583.15 L732.7 583.15 L733.2 583.15 L733.7 583.15 L734.2 583.15 L734.7 583.15 L735.2 583.15 L735.7 583.15 L736.2 583.15 L736.7 583.15 L737.2 583.15 L737.7 583.15 L738.2 583.15 L738.7 583.15 L739.2 583.15 L739.7 583.15 L740.2 583.15 L740.7 583.15 L741.2 583.15 L741.7 583.15 L742.2 583.15 L742.7 583.15 L743.2 583.15 L743.7 583.15 L744.2 583.15 L744.7 583.16 L745.2 583.16 L745.7 583.16 L746.2 583.16 L746.7 583.16 L747.2 583.16 L747.7 583.16 L748.2 583.16 L748.7 583.16 L749.2 583.16 L749.7 583.16 L750.2 583.16 L750.7 583.16 L751.2 583.16 L751.7 583.16 L752.2 583.16 L752.7 583.16 L753.2 583.16 L753.7 583.16 L754.2 583.16 L754.7 583.16 L755.2 583.16 L755.7 583.16 L756.2 583.16 L756.7 583.16 L757.2 583.16 L757.7 583.16 L758.2 583.17 L758.7 583.17 L759.2 583.17 L759.7 583.17 L760.2 583.17 L760.7 583.17 L761.2 583.17 L761.7 583.17 L762.2 583.17 L762.7 583.17 L763.2 583.17 L763.7 583.17 L764.2 583.17 L764.7 583.17 L765.2 583.17 L765.7 583.17 L766.2 583.17 L766.7 583.17 L767.2 583.17 L767.7 583.17 L768.2 583.17 L768.7 583.17 L769.2 583.17 L769.7 583.17 L770.2 583.17 L770.7 583.17 L771.2 583.18 L771.7 583.18 L772.2 583.18 L772.7 583.18 L773.2 583.18 L773.7 583.18 L774.2 583.18 L774.7 583.18 L775.2 583.18 L775.7 583.18 L776.2 583.18 L776.7 583.18 L777.2 583.18 L777.7 583.18 L778.2 583.18 L778.7 583.18 L779.2 583.18 L779.7 583.18 L780.2 583.18 L780.7 583.18 L781.2 583.18 L781.7 583.18 L782.2 583.18 L782.7 583.18 L783.2 583.18 L783.7 583.18 L784.2 583.18 L784.7 583.19 L785.2 583.19 L785.7 583.19 L786.2 583.19 L786.7 583.19 L787.2 583.19 L787.7 583.19 L788.2 583.19 L788.7 583.19 L789.2 583.19 L789.7 583.19 L790.2 583.19 L790.7 583.19 L791.2 583.19 L791.7 583.19 L792.2 583.19 L792.7 583.19 L793.2 583.19 L793.7 583.19 L794.2 583.19 L794.7 583.19 L795.2 583.19 L795.7 583.19 L796.2 583.19 L796.7 583.19 L797.2 583.19 L797.7 583.20 L798.2 583.20 L798.7 583.20 L799.2 583.20 L799.7 583.20 L800.2 583.20 L800.7 583.20 L801.2 583.20 L801.7 583.20 L802.2 583.20 L802.7 583.20 L803.2 583.20 L803.7 583.20 L804.2 583.20 L804.7 583.20 L805.2 583.20 L805.7 583.20 L806.2 583.20 L806.7 583.20 L807.2 583.20 L807.7 583.20 L808.2 583.20 L808.7 583.20 L809.2 583.20 L809.7 583.20 L810.2 583.20 L810.7 583.21 L811.2 583.21 L811.7 583.21 L812.2 583.21 L812.7 583.21 L813.2 583.21 L813.7 583.21 L814.2 583.21 L814.7 583.21 L815.2 583.21 L815.7 583.21 L816.2 583.21 L816.7 583.21 L817.2 583.21 L817.7 583.21 L818.2 583.21 L818.7 583.21 L819.2 583.21 L819.7 583.21 L820.2 583.21 L820.7 583.21 L821.2 583.21 L821.7 583.21 L822.2 583.21 L822.7 583.21 L823.2 583.21 L823.7 583.21 L824.2 583.22 L824.7 583.22 L825.2 583.22 L825.7 583.22 L826.2 583.22 L826.7 583.22 L827.2 583.22 L827.7 583.22 L828.2 583.22 L828.7 583.22 L829.2 583.22 L829.7 583.22 L830.2 583.22 L830.7 583.22 L831.2 583.22 L831.7 583.22 L832.2 583.22 L832.7 583.22 L833.2 583.22 L833.7 583.22 L834.2 583.22 L834.7 583.22 L835.2 583.22 L835.7 583.22 L836.2 583.22 L836.7 583.22 L837.2 583.23 L837.7 583.23 L838.2 583.23 L838.7 583.23 L839.2 583.23 L839.7 583.23 L840.2 583.23 L840.7 583.23 L841.2 583.23 L841.7 583.23 L842.2 583.23 L842.7 583.23 L843.2 583.23 L843.7 583.23 L844.2 583.23 L844.7 583.23 L845.2 583.23 L845.7 583.23 L846.2 583.23 L846.7 583.23 L847.2 583.23 L847.7 583.23 L848.2 583.23 L848.7 583.23 L849.2 583.23 L849.7 583.23 L850.2 583.24 L850.7 583.24 L851.2 583.24 L851.7 583.24 L852.2 583.24 L852.7 583.24 L853.2 583.24 L853.7 583.24 L854.2 583.24 L854.7 583.24 L855.2 583.24 L855.7 583.24 L856.2 583.24 L856.7 583.24 L857.2 583.24 L857.7 583.24 L858.2 583.24 L858.7 583.24 L859.2 583.24 L859.7 583.24 L860.2 583.24 L860.7 583.24 L861.2 583.24 L861.7 583.24 L862.2 583.24 L862.7 583.24 L863.2 583.24 L863.7 583.25 L864.2 583.25 L864.7 583.25 L865.2 583.25 L865.7 583.25 L866.2 583.25 L866.7 583.25 L867.2 583.25 L867.7 583.25 L868.2 583.25 L868.7 583.25 L869.2 583.25 L869.7 583.25 L870.2 583.25 L870.7 583.25 L871.2 583.25 L871.7 583.25 L872.2 583.25 L872.7 583.25 L873.2 583.25 L873.7 583.25 L874.2 583.25 L874.7 583.25 L875.2 583.25 L875.7 583.25 L876.2 583.25 L876.7 583.26 L877.2 583.26 L877.7 583.26 L878.2 583.26 L878.7 583.26 L879.2 583.26 L879.7 583.26 L880.2 583.26 L880.7 583.26 L881.2 583.26 L881.7 583.26 L882.2 583.26 L882.7 583.26 L883.2 583.26 L883.7 583.26 L884.2 583.26 L884.7 583.26 L885.2 583.26 L885.7 583.26 L886.2 583.26 L886.7 583.26 L887.2 583.26 L887.7 583.26 L888.2 583.26 L888.7 583.26 L889.2 583.26 L889.7 583.26 L890.2 583.27 L890.7 583.27 L891.2 583.27 L891.7 583.27 L892.2 583.27 L892.7 583.27 L893.2 583.27 L893.7 583.27 L894.2 583.27 L894.7 583.27 L895.2 583.27 L895.7 583.27 L896.2 583.27 L896.7 583.27 L897.2 583.27 L897.7 583.27 L898.2 583.27 L898.7 583.27 L899.2 583.27 L899.7 583.27 L900.2 583.27 L900.7 583.27 L901.2 583.27 L901.7 583.27 L902.2 583.27 L902.7 583.27 L903.2 583.28 L903.7 583.28 L904.2 583.28 L904.7 583.28 L905.2 583.28 L905.7 583.28 L906.2 583.28 L906.7 583.28 L907.2 583.28 L907.7 583.28 L908.2 583.28 L908.7 583.28 L909.2 583.28 L909.7 583.28 L910.2 583.28 L910.7 583.28 L911.2 583.28 L911.7 583.28 L912.2 583.28 L912.7 583.28 L913.2 583.28 L913.7 583.28 L914.2 583.28 L914.7 583.28 L915.2 583.28 L915.7 583.28 L916.2 583.28 L916.7 583.29 L917.2 583.29 L917.7 583.29 L918.2 583.29 L918.7 583.29 L919.2 583.29 L919.7 583.29 L920.2 583.29 L920.7 583.29 L921.2 583.29 L921.7 583.29 L922.2 583.29 L922.7 583.29 L923.2 583.29 L923.7 583.29 L924.2 583.29 L924.7 583.29 L925.2 583.29 L925.7 583.29 L926.2 583.29 L926.7 583.29 L927.2 583.29 L927.7 583.29 L928.2 583.29 L928.7 583.29 L929.2 583.29 L929.7 583.30 L930.2 583.30 L930.7 583.30 L931.2 583.30 L931.7 583.30 L932.2 583.30 L932.7 583.30 L933.2 583.30 L933.7 583.30 L934.2 583.30 L934.7 583.30 L935.2 583.30 L935.7 583.30 L935.7 585.0Z" fill="#fdd12b"/></svg>
<div class="ab" style="left:36.4px;top:584.8px;width:899.3px;height:1.6px;background:#303030;"></div>
<div class="ab" style="left:36.2px;top:584.6px;width:1.2px;height:3.6px;background:#d0d0d0;"></div>
<div class="ab" style="left:81.6px;top:585.6px;width:1px;height:2.6px;background:#b8b8b8;"></div>
<div class="ab" style="left:126.5px;top:585.6px;width:1px;height:2.6px;background:#b8b8b8;"></div>
<div class="ab" style="left:171.4px;top:585.6px;width:1px;height:2.6px;background:#b8b8b8;"></div>
<div class="ab" style="left:216.3px;top:585.6px;width:1px;height:2.6px;background:#b8b8b8;"></div>
<div class="ab" style="left:261.2px;top:585.6px;width:1px;height:2.6px;background:#b8b8b8;"></div>
<div class="ab" style="left:306.1px;top:585.6px;width:1px;height:2.6px;background:#b8b8b8;"></div>
<div class="ab" style="left:351px;top:585.6px;width:1px;height:2.6px;background:#b8b8b8;"></div>
<div class="ab" style="left:395.9px;top:585.6px;width:1px;height:2.6px;background:#b8b8b8;"></div>
<div class="ab" style="left:440.8px;top:585.6px;width:1px;height:2.6px;background:#b8b8b8;"></div>
<div class="ab" style="left:485.7px;top:585.6px;width:1px;height:2.6px;background:#b8b8b8;"></div>
<div class="ab" style="left:530.6px;top:585.6px;width:1px;height:2.6px;background:#b8b8b8;"></div>
<div class="ab" style="left:575.5px;top:585.6px;width:1px;height:2.6px;background:#b8b8b8;"></div>
<div class="ab" style="left:620.4px;top:585.6px;width:1px;height:2.6px;background:#b8b8b8;"></div>
<div class="ab" style="left:665.3px;top:585.6px;width:1px;height:2.6px;background:#b8b8b8;"></div>
<div class="ab" style="left:710.2px;top:585.6px;width:1px;height:2.6px;background:#b8b8b8;"></div>
<div class="ab" style="left:755.1px;top:585.6px;width:1px;height:2.6px;background:#b8b8b8;"></div>
<div class="ab" style="left:800px;top:585.6px;width:1px;height:2.6px;background:#b8b8b8;"></div>
<div class="ab" style="left:844.9px;top:585.6px;width:1px;height:2.6px;background:#b8b8b8;"></div>
<div class="ab" style="left:889.8px;top:585.6px;width:1px;height:2.6px;background:#b8b8b8;"></div>
<div class="ab" style="left:934.7px;top:585.6px;width:1px;height:2.6px;background:#b8b8b8;"></div>
<div class="ab" style="left:934.8px;top:583.5px;width:1.1px;height:4.7px;background:#d0d0d0;"></div>
<div class="t" style="left:38.2px;top:593.52px;font-size:8.600px;color:#e4e4e4;font-weight:700;transform:scaleX(0.9500);transform-origin:0 0;">0 eV</div>
<div class="t" style="left:251.02px;top:593.52px;font-size:8.600px;color:#e4e4e4;font-weight:700;transform:scaleX(0.9500);transform-origin:0 0;">5 keV</div>
<div class="t" style="left:473.25px;top:593.52px;font-size:8.600px;color:#e4e4e4;font-weight:700;transform:scaleX(0.9500);transform-origin:0 0;">10 keV</div>
<div class="t" style="left:697.75px;top:593.52px;font-size:8.600px;color:#e4e4e4;font-weight:700;transform:scaleX(0.9500);transform-origin:0 0;">15 keV</div>
<div class="t" style="left:909.6px;top:593.52px;font-size:8.600px;color:#e4e4e4;font-weight:700;transform:scaleX(0.9500);transform-origin:0 0;">20 keV</div>
<svg style="left:20.5px;top:594px" width="8" height="8"><rect x="0" y="0" width="7.8" height="7.6" rx="0.8" fill="#dcdcdc"/><rect x="3" y="3" width="3.4" height="3.2" fill="#3c3c3c"/><rect x="3.9" y="3.9" width="1.6" height="1.4" fill="#dcdcdc"/><rect x="1" y="1" width="1.2" height="1.2" fill="#3c3c3c"/></svg>
<div class="t" style="left:46.59px;top:560.11px;font-size:7.200px;color:#e8e8e8;transform:scaleX(0.9300);transform-origin:0 0;">C</div>
<div class="t" style="left:52.34px;top:524.51px;font-size:7.200px;color:#e8e8e8;transform:scaleX(0.9300);transform-origin:0 0;">Ti</div>
<div class="t" style="left:65.3px;top:567.21px;font-size:7.200px;color:#e8e8e8;transform:scaleX(0.9300);transform-origin:0 0;">Fe</div>
<div class="t" style="left:79.28px;top:569.61px;font-size:7.200px;color:#e8e8e8;transform:scaleX(0.9300);transform-origin:0 0;">Fe+Ti</div>
<div class="t" style="left:113.02px;top:568.81px;font-size:7.200px;color:#e8e8e8;transform:scaleX(0.9300);transform-origin:0 0;">Si</div>
<div class="t" style="left:130.91px;top:544.01px;font-size:7.200px;color:#e8e8e8;transform:scaleX(0.9300);transform-origin:0 0;">Nb</div>
<div class="t" style="left:152.31px;top:570.71px;font-size:7.200px;color:#e8e8e8;transform:scaleX(0.9300);transform-origin:0 0;">Ti-esc</div>
<div class="t" style="left:237.64px;top:368.81px;font-size:7.200px;color:#e8e8e8;transform:scaleX(0.9300);transform-origin:0 0;">Ti</div>
<div class="t" style="left:204.19px;top:573.51px;font-size:7.200px;color:#e8e8e8;transform:scaleX(0.9300);transform-origin:0 0;">Nb+Si</div>
<div class="t" style="left:256.24px;top:546.61px;font-size:7.200px;color:#e8e8e8;transform:scaleX(0.9300);transform-origin:0 0;">Ti</div>
<div class="t" style="left:269.22px;top:573.81px;font-size:7.200px;color:#e8e8e8;transform:scaleX(0.9300);transform-origin:0 0;">Ti+Ti</div>
<div class="t" style="left:329.79px;top:561.31px;font-size:7.200px;color:#e8e8e8;transform:scaleX(0.9300);transform-origin:0 0;">Ti+Nb</div>
<div class="t" style="left:320.7px;top:570.01px;font-size:7.200px;color:#e8e8e8;transform:scaleX(0.9300);transform-origin:0 0;">Fe</div>
<div class="t" style="left:350.1px;top:573.81px;font-size:7.200px;color:#e8e8e8;transform:scaleX(0.9300);transform-origin:0 0;">Fe</div>
<div class="t" style="left:435.22px;top:573.31px;font-size:7.200px;color:#e8e8e8;transform:scaleX(0.9300);transform-origin:0 0;">Ti+Ti</div>
<div class="t" style="left:472.72px;top:575.11px;font-size:7.200px;color:#e8e8e8;transform:scaleX(0.9300);transform-origin:0 0;">Ti+Ti</div>
<div class="t" style="left:518.98px;top:575.81px;font-size:7.200px;color:#e8e8e8;transform:scaleX(0.9300);transform-origin:0 0;">Ti+Fe</div>
<div class="t" style="left:778.71px;top:576.81px;font-size:7.200px;color:#e8e8e8;transform:scaleX(0.9300);transform-origin:0 0;">Nb</div>
<div class="t" style="left:868.71px;top:576.81px;font-size:7.200px;color:#e8e8e8;transform:scaleX(0.9300);transform-origin:0 0;">Nb</div>
<div class="ab" style="left:791.6px;top:365.1px;width:144.2px;height:34.7px;background:#303030;"></div>
<div class="ab" style="left:808.9px;top:369.9px;width:24.9px;height:6.1px;background:#fdd12b;"></div>
<div class="ab" style="left:795.9px;top:379.3px;width:7.9px;height:6.5px;background:#fafafa;"></div>
<div class="ab" style="left:795.9px;top:388.7px;width:7.9px;height:7.2px;background:#fafafa;"></div>
<div class="ab" style="left:809.6px;top:382px;width:4.4px;height:1px;background:#c83232;"></div>
<div class="ab" style="left:818.3px;top:382px;width:5.1px;height:1px;background:#c83232;"></div>
<div class="ab" style="left:828.4px;top:382px;width:4.8px;height:1px;background:#c83232;"></div>
<div class="ab" style="left:809.6px;top:392.1px;width:23.6px;height:1px;background:#c83232;"></div>
<div class="t" style="left:836.6px;top:369.47px;font-size:7.246px;color:#f2f2f2;font-weight:700;transform:scaleX(1.0125);transform-origin:0 0;">Site 3 (417 367 278 counts)</div>
<div class="t" style="left:836.6px;top:379.14px;font-size:7.391px;color:#f2f2f2;font-weight:700;transform:scaleX(0.9585);transform-origin:0 0;">Background spectrum</div>
<div class="t" style="left:836.6px;top:388.6px;font-size:7.681px;color:#f2f2f2;font-weight:700;transform:scaleX(0.9329);transform-origin:0 0;">Synthetic spectrum</div>
<div class="ab" style="left:944px;top:60px;width:232px;height:554.5px;background:#2f2f2f;"></div>
<div class="ab" style="left:944.5px;top:60.5px;width:211.5px;height:553px;background:#707070;"></div>
<div class="ab" style="left:947.7px;top:64px;width:205.3px;height:543.8px;background:#e9e9e9;"></div>
<div class="ab" style="left:954.4px;top:84.4px;width:192.9px;height:492.6px;background:#ffffff;border:1px solid #a9a9a9"></div>
<div class="t" style="left:954.4px;top:67.84px;font-size:8.696px;color:#1e1e1e;font-weight:700;transform:scaleX(0.9115);transform-origin:0 0;font-weight:600;">Analysis History</div>
<div class="ab" style="left:1001.5px;top:157.4px;width:44.5px;height:8.9px;background:#cddcee;"></div>
<div class="t" style="left:968.3px;top:88.25px;font-size:9.275px;color:#262626;transform:scaleX(0.9032);transform-origin:0 0;">Session 25-02-06 4:45 (4 sites)</div>
<svg style="left:959.8px;top:90.3px" width="5" height="5"><path d="M4.4 0.2 V4.4 H0.2Z" fill="#3a3a3a"/></svg>
<div class="t" style="left:979.7px;top:99.9px;font-size:9.275px;color:#262626;transform:scaleX(0.8772);transform-origin:0 0;">Extracted Region 2</div>
<div class="t" style="left:979.7px;top:111.55px;font-size:9.275px;color:#262626;transform:scaleX(0.8772);transform-origin:0 0;">Extracted Region 2</div>
<div class="t" style="left:979.7px;top:123.2px;font-size:9.275px;color:#262626;transform:scaleX(0.8772);transform-origin:0 0;">Extracted Region 2</div>
<div class="t" style="left:979.7px;top:134.85px;font-size:9.275px;color:#262626;transform:scaleX(0.8693);transform-origin:0 0;">Site 3</div>
<svg style="left:971.5px;top:136.9px" width="5" height="5"><path d="M4.4 0.2 V4.4 H0.2Z" fill="#3a3a3a"/></svg>
<div class="t" style="left:991px;top:146.5px;font-size:9.275px;color:#262626;transform:scaleX(0.9266);transform-origin:0 0;">Map Data</div>
<svg style="left:983.3px;top:148.55px" width="5" height="5"><path d="M4.4 0.2 V4.4 H0.2Z" fill="#3a3a3a"/></svg>
<div class="t" style="left:1002.7px;top:158.15px;font-size:9.275px;color:#262626;transform:scaleX(0.9462);transform-origin:0 0;">Quant Map</div>
<div class="t" style="left:1002.7px;top:169.8px;font-size:9.275px;color:#262626;transform:scaleX(0.9392);transform-origin:0 0;">Count Map</div>
<div class="t" style="left:1002.7px;top:181.45px;font-size:9.275px;color:#262626;transform:scaleX(0.9124);transform-origin:0 0;">Spectral Component Maps</div>
<svg style="left:996.2px;top:183.1px" width="5" height="6"><path d="M0.6 0.6 L3.8 2.8 L0.6 5Z" fill="none" stroke="#a8a8a8" stroke-width="0.8"/></svg>
<div class="t" style="left:1002.7px;top:193.1px;font-size:9.275px;color:#262626;transform:scaleX(0.8823);transform-origin:0 0;">Phase Maps</div>
<svg style="left:996.2px;top:194.75000000000003px" width="5" height="6"><path d="M0.6 0.6 L3.8 2.8 L0.6 5Z" fill="none" stroke="#a8a8a8" stroke-width="0.8"/></svg>
<div class="t" style="left:991px;top:204.75px;font-size:9.275px;color:#262626;transform:scaleX(0.8658);transform-origin:0 0;">Extracted Region 1</div>
<div class="t" style="left:991px;top:216.4px;font-size:9.275px;color:#262626;transform:scaleX(0.8772);transform-origin:0 0;">Extracted Region 2</div>
<div class="ab" style="left:954.4px;top:584.5px;width:192.9px;height:13.5px;background:linear-gradient(#f2f2f2,#dcdcdc);border:1px solid #a0a0a0;border-radius:2px"></div>
<div class="t" style="left:1021.83px;top:587.74px;font-size:8.571px;color:#222;transform:scaleX(0.9500);transform-origin:0 0;">Create Report...</div>
<div class="ab" style="left:1156px;top:60px;width:20px;height:554.5px;background:#2f2f2f;"></div>
<div class="ab" style="left:1159.6px;top:64px;width:20.4px;height:21.9px;background:#f4d35e;border-radius:3px"></div>
<svg style="left:1163px;top:68px" width="13" height="14"><path d="M0.5 12.5 L1.6 7 L2.3 12 L3.4 12 L4.6 9 L5.5 12 L6.6 12 L7.4 3 L8.2 2 L9 12 L10 12.2 L11.8 12.2 V13.2 H0.5Z" fill="#1e1e1e"/></svg>
<div class="ab" style="left:1159.6px;top:91px;width:20.4px;height:21.7px;background:#dcdcdc;border-radius:3px"></div>
<svg style="left:1160px;top:95px" width="17" height="14"><g fill="#1f5b98"><path d="M8.60 1.05 L11.05 3.50 L8.60 5.95 L6.15 3.50Z"/><path d="M8.60 7.25 L11.05 9.70 L8.60 12.15 L6.15 9.70Z"/><path d="M5.50 4.15 L7.95 6.60 L5.50 9.05 L3.05 6.60Z"/><path d="M11.70 4.15 L14.15 6.60 L11.70 9.05 L9.25 6.60Z"/></g></svg>
<div class="ab" style="left:0px;top:614.7px;width:1176px;height:17.3px;background:#e6e6e6;"></div>
</body></html>
